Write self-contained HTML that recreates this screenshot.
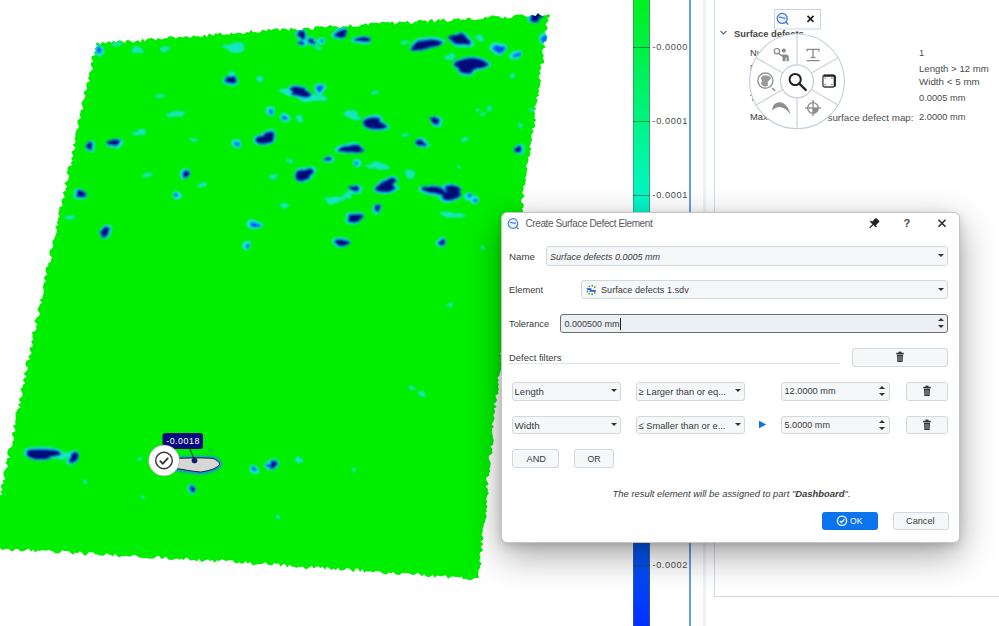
<!DOCTYPE html>
<html><head><meta charset="utf-8">
<style>
html,body{margin:0;padding:0;width:999px;height:626px;overflow:hidden;background:#fff;font-family:"Liberation Sans",sans-serif;}
.a{position:absolute;white-space:nowrap;}
.t{font-size:9.3px;color:#3a3a3a;line-height:1;}
.fld{position:absolute;box-sizing:border-box;border:1px solid #d0d8e2;border-radius:3px;background:#f5f7f9;}
.btn{position:absolute;box-sizing:border-box;border:1px solid #d0d8e2;border-radius:3px;background:#f5f7f9;}
.dd{position:absolute;width:0;height:0;border-left:3px solid transparent;border-right:3px solid transparent;border-top:3.5px solid #333;}
</style></head><body>
<svg class="a" style="left:0;top:0" width="999" height="626" viewBox="0 0 999 626">
<defs>
<clipPath id="sc"><path d="M95.9,43.3 L98.1,42.4 L100.5,44.3 L102.5,41.8 L104.9,43.4 L107.0,42.6 L109.2,41.2 L111.5,42.8 L113.6,40.8 L115.9,42.2 L118.0,40.5 L120.2,40.4 L122.6,41.6 L124.9,43.0 L126.9,40.0 L129.2,40.3 L131.5,41.7 L133.8,42.8 L135.9,41.1 L138.1,40.3 L140.5,42.4 L142.4,38.5 L144.9,41.6 L146.9,39.1 L149.1,38.4 L151.3,38.1 L153.6,38.7 L155.9,40.5 L158.0,37.8 L160.3,39.2 L162.5,39.3 L164.7,38.0 L166.9,38.6 L169.0,36.5 L171.2,36.3 L173.5,36.7 L175.8,38.4 L178.0,37.2 L180.2,36.6 L182.5,37.5 L184.6,36.8 L186.8,36.0 L189.2,37.8 L191.4,37.2 L193.4,35.2 L195.8,36.4 L198.0,36.0 L200.3,37.2 L202.5,36.5 L204.5,34.5 L207.0,37.1 L208.9,33.5 L211.2,34.5 L213.5,35.7 L215.6,33.1 L217.9,34.3 L220.0,32.3 L222.4,34.7 L224.6,34.9 L226.8,33.9 L229.1,35.0 L231.1,32.5 L233.5,33.9 L235.7,33.3 L237.9,33.1 L240.0,32.4 L242.4,33.8 L244.6,34.0 L246.7,32.0 L249.0,32.5 L251.0,30.0 L253.4,32.3 L255.6,31.9 L257.9,33.1 L260.1,32.3 L262.2,30.0 L264.4,30.3 L266.7,31.3 L268.7,28.6 L271.0,30.2 L273.2,28.9 L275.4,28.6 L277.5,28.2 L279.9,30.9 L282.0,28.2 L284.2,28.6 L286.4,29.0 L288.8,30.8 L290.8,27.5 L293.1,28.9 L295.3,29.1 L297.6,30.3 L299.8,29.9 L302.0,30.0 L304.1,27.5 L306.3,27.9 L308.5,27.6 L310.8,29.5 L313.1,29.7 L315.1,26.4 L317.3,26.3 L319.5,26.4 L321.7,26.3 L324.0,27.2 L326.2,27.5 L328.3,26.0 L330.5,24.9 L332.8,26.4 L335.0,26.1 L337.2,26.7 L339.5,28.1 L341.7,27.0 L343.8,26.1 L346.1,26.4 L348.3,26.5 L350.3,23.9 L352.8,27.1 L354.9,26.5 L357.2,26.8 L359.3,26.3 L361.5,24.6 L363.7,24.5 L365.8,23.2 L368.1,25.2 L370.2,22.8 L372.4,22.7 L374.6,23.1 L376.8,22.8 L379.1,23.4 L381.2,22.1 L383.4,21.7 L385.7,22.2 L387.9,21.9 L390.1,22.8 L392.3,21.3 L394.7,24.6 L396.8,23.4 L398.9,21.4 L401.1,21.7 L403.4,22.0 L405.6,21.9 L407.7,20.8 L410.1,23.6 L412.3,24.0 L414.4,21.8 L416.6,21.7 L418.7,20.0 L421.0,19.9 L423.2,20.8 L425.4,20.3 L427.7,22.5 L429.8,19.7 L432.0,19.0 L434.4,22.5 L436.5,20.7 L438.6,19.1 L440.9,20.5 L443.0,18.3 L445.3,20.2 L447.6,21.9 L449.8,21.3 L452.0,20.5 L454.1,18.6 L456.3,18.9 L458.5,18.0 L460.8,20.3 L463.0,19.2 L465.2,20.0 L467.3,18.1 L469.5,17.6 L471.9,19.8 L474.1,20.3 L476.3,19.7 L478.5,19.4 L480.7,19.3 L482.9,18.9 L485.0,16.7 L487.2,17.7 L489.4,16.9 L491.5,15.5 L493.7,15.4 L496.0,16.2 L498.2,16.0 L500.5,17.6 L502.8,18.5 L504.9,16.4 L507.2,18.2 L509.4,18.3 L511.6,18.0 L513.7,15.5 L515.8,14.8 L518.1,14.7 L520.2,14.5 L522.5,14.4 L524.8,15.9 L527.0,16.9 L529.2,16.5 L531.3,15.0 L533.6,15.5 L535.8,16.0 L537.9,13.0 L540.2,15.2 L542.5,16.0 L544.7,15.4 L546.9,15.1 L549.1,14.0 L550.0,16.4 L547.2,18.3 L548.7,20.7 L546.6,22.7 L545.6,24.8 L547.6,27.3 L547.2,29.5 L544.8,31.4 L545.3,33.7 L547.2,36.2 L547.1,38.5 L546.7,40.7 L543.4,42.4 L543.5,44.7 L545.8,47.3 L542.8,49.1 L541.9,51.2 L542.8,53.6 L543.7,56.0 L542.7,58.1 L544.0,60.5 L544.2,62.8 L540.1,64.5 L541.0,66.8 L541.2,69.1 L539.3,71.1 L541.0,73.6 L538.9,75.5 L538.8,77.8 L540.9,80.3 L540.4,82.5 L540.0,84.7 L539.9,86.9 L538.2,88.9 L539.2,91.3 L538.2,93.4 L539.1,95.8 L535.7,97.6 L537.6,100.1 L536.9,102.2 L536.0,104.4 L534.5,106.4 L536.1,108.9 L533.8,110.9 L535.1,113.3 L534.7,115.5 L534.4,117.8 L536.1,120.3 L534.1,122.3 L534.8,124.6 L535.2,126.9 L531.8,128.7 L533.9,131.3 L532.4,133.3 L531.1,135.4 L531.5,137.7 L532.1,140.1 L531.0,142.2 L530.6,144.4 L529.3,146.5 L531.7,149.1 L529.6,151.1 L530.5,153.5 L530.1,155.7 L527.8,157.6 L528.6,160.0 L528.0,162.2 L526.9,164.3 L526.0,166.4 L527.6,168.9 L526.6,171.0 L526.7,173.3 L526.4,175.5 L525.3,177.7 L526.0,180.0 L525.4,182.2 L525.3,184.5 L523.1,186.4 L523.8,188.8 L522.8,190.9 L522.2,193.1 L524.6,195.7 L523.1,197.7 L521.2,199.8 L521.3,202.0 L523.8,204.6 L523.6,206.8 L522.0,208.8 L523.2,211.2 L522.2,213.3 L522.6,215.6 L519.9,217.5 L519.1,219.6 L518.4,221.7 L521.0,224.3 L518.5,226.2 L518.4,228.4 L520.1,230.9 L516.9,232.7 L516.3,234.9 L518.9,237.5 L515.7,239.3 L517.6,241.8 L517.0,243.9 L514.7,245.8 L515.0,248.1 L517.3,250.7 L516.0,252.7 L515.3,254.9 L515.7,257.2 L516.0,259.4 L515.2,261.6 L513.3,263.5 L515.8,266.1 L513.3,268.0 L513.5,270.3 L514.8,272.7 L513.3,274.7 L511.8,276.8 L512.0,279.0 L513.4,281.5 L509.5,283.1 L510.0,285.5 L508.9,287.5 L512.1,290.2 L511.1,292.3 L511.7,294.6 L508.5,296.4 L510.2,298.9 L510.4,301.2 L509.0,303.2 L506.7,305.1 L506.8,307.4 L508.7,309.9 L508.8,312.1 L505.5,313.9 L506.6,316.3 L505.7,318.4 L507.9,321.0 L507.7,323.2 L504.9,325.0 L505.6,327.4 L506.7,329.7 L503.0,331.5 L503.9,333.8 L502.9,335.9 L505.4,338.5 L502.1,340.3 L504.9,342.9 L501.4,344.7 L502.8,347.1 L502.9,349.4 L501.8,351.4 L500.0,353.4 L502.3,356.0 L502.5,358.3 L500.6,360.2 L501.5,362.6 L501.7,364.8 L501.2,367.0 L501.3,369.3 L500.4,371.4 L499.7,373.5 L499.4,375.7 L497.3,377.7 L498.8,380.1 L497.8,382.2 L498.8,384.6 L497.9,386.7 L499.0,389.1 L497.9,391.2 L498.6,393.5 L495.5,395.5 L496.0,397.8 L497.2,400.1 L495.9,402.2 L493.8,404.3 L496.9,406.8 L493.8,408.8 L495.2,411.1 L494.7,413.3 L493.1,415.4 L494.6,417.8 L494.0,420.0 L493.0,422.1 L491.6,424.3 L494.0,426.7 L491.8,428.8 L492.1,431.0 L492.1,433.3 L492.8,435.6 L492.8,437.8 L493.8,440.2 L493.3,442.4 L493.3,444.6 L490.4,446.6 L492.1,449.0 L492.2,451.2 L492.3,453.5 L489.1,455.4 L488.7,457.6 L489.3,459.9 L490.6,462.3 L490.6,464.5 L490.2,466.7 L489.3,468.9 L490.3,471.2 L488.9,473.4 L489.4,475.6 L486.4,477.6 L486.1,479.8 L487.6,482.2 L488.6,484.5 L485.5,486.4 L488.0,488.9 L487.6,491.1 L488.8,493.4 L487.1,495.4 L486.5,497.6 L486.2,499.8 L487.2,502.1 L485.8,504.2 L487.6,506.6 L486.3,508.7 L486.8,510.9 L485.4,513.0 L486.6,515.4 L486.5,517.6 L485.2,519.7 L485.3,521.9 L483.7,524.0 L483.7,526.2 L482.6,528.3 L482.8,530.5 L482.3,532.7 L481.5,534.9 L483.2,537.2 L483.3,539.5 L480.5,541.4 L483.6,543.9 L481.1,545.9 L481.2,548.1 L483.4,550.6 L480.1,552.5 L479.6,554.7 L480.5,557.0 L479.9,559.1 L479.4,561.3 L481.8,563.7 L480.1,565.8 L480.0,568.0 L478.5,570.1 L478.4,572.3 L478.1,574.5 L478.9,576.8 L479.1,577.4 L476.8,578.1 L474.7,577.9 L472.3,579.6 L470.1,580.3 L467.9,579.7 L465.7,578.6 L463.5,579.5 L461.5,576.4 L459.2,577.4 L457.0,577.0 L454.8,576.8 L452.6,576.4 L450.4,577.0 L448.0,578.8 L446.1,575.5 L443.8,575.5 L441.6,576.4 L439.4,576.1 L437.2,575.4 L434.8,577.7 L432.8,574.8 L430.5,576.6 L428.2,577.2 L426.1,576.2 L424.0,574.2 L421.7,576.2 L419.6,573.9 L417.5,572.8 L415.1,574.6 L412.9,574.9 L410.7,574.3 L408.6,573.3 L406.4,572.9 L404.2,573.3 L402.0,573.0 L399.6,575.1 L397.4,574.7 L395.3,574.1 L393.2,572.0 L390.9,573.6 L388.7,572.4 L386.4,574.5 L384.2,574.1 L382.1,573.2 L380.0,571.4 L377.8,571.2 L375.6,571.1 L373.2,572.4 L371.1,571.4 L368.9,571.4 L366.7,571.3 L364.4,572.5 L362.4,569.3 L360.0,571.9 L358.0,568.6 L355.8,568.6 L353.4,572.2 L351.3,570.2 L349.2,568.6 L347.0,567.9 L344.7,569.8 L342.4,570.4 L340.2,570.5 L338.2,567.4 L335.8,570.2 L333.7,568.5 L331.4,570.1 L329.3,568.4 L327.2,566.6 L324.8,569.7 L322.8,566.8 L320.5,567.9 L318.4,566.2 L316.1,566.8 L313.8,568.5 L311.8,565.7 L309.4,567.2 L307.1,568.9 L304.9,568.8 L302.8,566.7 L300.6,566.7 L298.4,567.2 L296.1,567.7 L294.0,566.7 L291.8,566.7 L289.7,564.4 L287.3,567.6 L285.3,564.5 L283.1,564.0 L280.7,566.7 L278.7,563.3 L276.5,564.0 L274.3,563.1 L272.0,565.4 L269.8,564.9 L267.6,564.7 L265.6,562.1 L263.2,563.6 L261.0,564.3 L258.8,563.9 L256.5,564.4 L254.3,565.1 L252.1,564.7 L250.1,561.7 L247.7,563.7 L245.7,561.0 L243.3,563.6 L241.1,563.4 L238.9,562.3 L236.7,563.5 L234.5,562.6 L232.4,560.2 L230.2,560.3 L228.0,560.5 L225.7,561.1 L223.6,559.8 L221.3,559.6 L219.0,561.0 L216.9,560.2 L214.5,562.8 L212.5,559.9 L210.2,560.9 L208.0,559.6 L205.8,559.9 L203.5,561.2 L201.2,562.0 L199.2,558.4 L196.8,561.4 L194.7,559.9 L192.5,560.3 L190.2,560.4 L188.1,558.5 L186.0,557.4 L183.6,560.1 L181.5,558.4 L179.2,559.7 L177.0,558.6 L174.8,559.1 L172.5,559.9 L170.3,559.8 L168.1,559.5 L166.0,556.5 L163.7,558.1 L161.5,559.0 L159.4,556.2 L157.2,555.7 L154.9,557.7 L152.6,558.8 L150.4,558.5 L148.2,558.8 L146.0,557.7 L143.7,558.5 L141.6,557.8 L139.4,557.6 L137.2,556.2 L135.1,554.8 L132.8,555.3 L130.5,556.5 L128.3,556.4 L126.1,555.8 L123.9,556.2 L121.7,556.3 L119.4,557.2 L117.2,556.3 L115.2,553.4 L112.8,556.6 L110.7,555.0 L108.5,554.3 L106.3,553.3 L104.0,555.7 L101.8,555.4 L99.5,555.4 L97.4,554.6 L95.2,554.3 L93.1,552.2 L90.8,552.5 L88.6,552.2 L86.2,555.5 L84.0,555.3 L81.9,552.5 L79.8,551.6 L77.5,553.2 L75.3,552.6 L72.9,554.8 L70.8,553.1 L68.7,550.9 L66.5,551.1 L64.3,550.9 L62.1,550.3 L59.7,553.1 L57.5,553.5 L55.3,553.2 L53.1,551.6 L51.0,550.8 L48.8,549.7 L46.6,550.4 L44.3,550.6 L42.1,550.0 L39.9,551.1 L37.7,550.6 L35.3,552.5 L33.3,549.4 L31.0,551.5 L28.9,548.6 L26.6,549.6 L24.3,550.8 L22.1,551.4 L19.9,550.8 L17.8,549.1 L15.6,548.7 L13.2,550.9 L11.0,551.0 L8.9,549.0 L6.7,548.7 L4.5,549.3 L2.2,549.9 L0.1,548.2 L-2.3,550.5 L-4.4,549.2 L-6.6,548.4 L-8.7,546.3 L-10.4,548.1 L-9.0,546.1 L-10.2,543.6 L-10.7,541.3 L-10.2,539.1 L-6.9,537.5 L-7.5,535.2 L-8.6,532.7 L-9.2,530.2 L-6.9,528.5 L-5.7,526.4 L-6.3,524.1 L-6.5,521.8 L-4.4,519.9 L-2.9,518.0 L-5.2,515.2 L-5.5,512.9 L-3.9,511.0 L-3.1,508.9 L-1.6,506.9 L-3.0,504.4 L-0.2,502.7 L0.0,500.5 L-0.5,498.1 L-1.2,495.7 L2.3,494.2 L0.2,491.4 L2.6,489.7 L0.8,487.0 L1.2,484.9 L3.7,483.1 L2.4,480.6 L5.4,478.9 L4.1,476.4 L3.3,474.0 L3.9,471.8 L5.1,469.8 L6.6,467.9 L8.1,465.9 L5.5,463.1 L6.9,461.1 L6.6,458.8 L10.1,457.3 L7.3,454.4 L7.4,452.2 L7.9,450.0 L9.6,448.1 L12.1,446.4 L12.5,444.2 L12.3,441.9 L13.8,439.9 L14.0,437.7 L12.1,435.0 L12.0,432.8 L15.4,431.2 L15.1,428.9 L12.8,426.1 L15.7,424.5 L15.1,422.1 L15.5,419.9 L15.8,417.7 L15.6,415.4 L15.4,413.0 L16.9,411.1 L17.7,409.0 L20.5,407.3 L17.7,404.4 L21.4,402.9 L18.9,400.1 L19.9,398.0 L22.2,396.2 L22.6,394.1 L21.6,391.6 L20.5,389.1 L22.6,387.2 L22.7,385.0 L25.3,383.2 L22.9,380.4 L24.0,378.4 L26.5,376.6 L23.6,373.8 L25.5,371.9 L27.5,370.0 L27.8,367.8 L25.4,365.0 L25.9,362.8 L26.4,360.7 L30.2,359.2 L28.1,356.5 L30.4,354.7 L31.5,352.6 L29.7,350.0 L29.9,347.8 L33.1,346.1 L32.2,343.7 L31.2,341.2 L33.5,339.4 L32.3,336.9 L32.6,334.7 L32.0,332.3 L35.4,330.7 L36.5,328.6 L35.8,326.2 L37.5,324.3 L34.3,321.4 L35.6,319.3 L37.0,317.3 L39.3,315.6 L39.8,313.4 L38.0,310.8 L38.0,308.5 L39.1,306.5 L39.8,304.4 L42.0,302.6 L39.5,299.8 L42.4,298.2 L42.6,296.0 L43.4,293.9 L43.7,291.7 L43.5,289.4 L42.9,287.0 L43.3,284.9 L44.0,282.8 L46.1,281.0 L43.8,278.2 L44.7,276.2 L47.4,274.5 L45.8,271.9 L45.6,269.6 L45.9,267.4 L48.4,265.7 L48.0,263.4 L51.0,261.8 L51.1,259.5 L52.0,257.5 L49.6,254.7 L49.4,252.4 L49.9,250.3 L51.9,248.5 L53.2,246.5 L52.7,244.1 L52.3,241.8 L53.5,239.8 L54.7,237.8 L55.4,235.7 L56.2,233.6 L57.0,231.5 L56.8,229.2 L55.1,226.6 L58.4,225.1 L56.7,222.5 L58.2,220.5 L57.9,218.2 L59.8,216.4 L58.2,213.8 L58.9,211.7 L59.3,209.5 L59.4,207.3 L62.7,205.7 L62.0,203.3 L61.5,201.0 L62.2,198.9 L65.0,197.2 L63.6,194.7 L63.0,192.3 L65.7,190.6 L65.5,188.3 L67.3,186.5 L64.3,183.6 L66.2,181.7 L68.1,179.9 L68.6,177.7 L69.4,175.7 L66.4,172.8 L67.9,170.8 L67.6,168.5 L68.4,166.4 L71.9,164.9 L70.9,162.5 L72.7,160.6 L71.0,158.0 L73.4,156.2 L72.2,153.7 L71.9,151.4 L74.4,149.7 L75.5,147.7 L72.7,144.8 L75.1,143.1 L75.6,141.0 L74.5,138.5 L75.6,136.5 L75.2,134.1 L75.9,132.0 L76.5,129.9 L78.3,128.1 L79.0,125.9 L77.7,123.4 L77.4,121.1 L79.1,119.2 L81.0,117.4 L79.5,114.8 L80.5,112.8 L80.5,110.5 L83.3,108.9 L82.8,106.5 L81.4,103.9 L82.0,101.8 L83.6,99.9 L84.7,97.9 L85.5,95.8 L83.8,93.2 L84.5,91.1 L87.1,89.4 L86.4,87.0 L86.4,84.7 L86.9,82.6 L89.9,81.0 L87.9,78.3 L89.3,76.4 L89.0,74.0 L89.7,71.9 L91.9,70.2 L92.9,68.1 L90.9,65.4 L90.7,63.1 L93.2,61.4 L91.6,58.8 L91.3,56.5 L95.3,55.1 L93.9,52.6 L95.9,50.7 L94.7,48.2 L97.0,46.5Z"/></clipPath>
<filter id="bl" x="-20%" y="-20%" width="140%" height="140%"><feGaussianBlur stdDeviation="0.9"/></filter>
</defs>
<path d="M95.9,43.3 L98.1,42.4 L100.5,44.3 L102.5,41.8 L104.9,43.4 L107.0,42.6 L109.2,41.2 L111.5,42.8 L113.6,40.8 L115.9,42.2 L118.0,40.5 L120.2,40.4 L122.6,41.6 L124.9,43.0 L126.9,40.0 L129.2,40.3 L131.5,41.7 L133.8,42.8 L135.9,41.1 L138.1,40.3 L140.5,42.4 L142.4,38.5 L144.9,41.6 L146.9,39.1 L149.1,38.4 L151.3,38.1 L153.6,38.7 L155.9,40.5 L158.0,37.8 L160.3,39.2 L162.5,39.3 L164.7,38.0 L166.9,38.6 L169.0,36.5 L171.2,36.3 L173.5,36.7 L175.8,38.4 L178.0,37.2 L180.2,36.6 L182.5,37.5 L184.6,36.8 L186.8,36.0 L189.2,37.8 L191.4,37.2 L193.4,35.2 L195.8,36.4 L198.0,36.0 L200.3,37.2 L202.5,36.5 L204.5,34.5 L207.0,37.1 L208.9,33.5 L211.2,34.5 L213.5,35.7 L215.6,33.1 L217.9,34.3 L220.0,32.3 L222.4,34.7 L224.6,34.9 L226.8,33.9 L229.1,35.0 L231.1,32.5 L233.5,33.9 L235.7,33.3 L237.9,33.1 L240.0,32.4 L242.4,33.8 L244.6,34.0 L246.7,32.0 L249.0,32.5 L251.0,30.0 L253.4,32.3 L255.6,31.9 L257.9,33.1 L260.1,32.3 L262.2,30.0 L264.4,30.3 L266.7,31.3 L268.7,28.6 L271.0,30.2 L273.2,28.9 L275.4,28.6 L277.5,28.2 L279.9,30.9 L282.0,28.2 L284.2,28.6 L286.4,29.0 L288.8,30.8 L290.8,27.5 L293.1,28.9 L295.3,29.1 L297.6,30.3 L299.8,29.9 L302.0,30.0 L304.1,27.5 L306.3,27.9 L308.5,27.6 L310.8,29.5 L313.1,29.7 L315.1,26.4 L317.3,26.3 L319.5,26.4 L321.7,26.3 L324.0,27.2 L326.2,27.5 L328.3,26.0 L330.5,24.9 L332.8,26.4 L335.0,26.1 L337.2,26.7 L339.5,28.1 L341.7,27.0 L343.8,26.1 L346.1,26.4 L348.3,26.5 L350.3,23.9 L352.8,27.1 L354.9,26.5 L357.2,26.8 L359.3,26.3 L361.5,24.6 L363.7,24.5 L365.8,23.2 L368.1,25.2 L370.2,22.8 L372.4,22.7 L374.6,23.1 L376.8,22.8 L379.1,23.4 L381.2,22.1 L383.4,21.7 L385.7,22.2 L387.9,21.9 L390.1,22.8 L392.3,21.3 L394.7,24.6 L396.8,23.4 L398.9,21.4 L401.1,21.7 L403.4,22.0 L405.6,21.9 L407.7,20.8 L410.1,23.6 L412.3,24.0 L414.4,21.8 L416.6,21.7 L418.7,20.0 L421.0,19.9 L423.2,20.8 L425.4,20.3 L427.7,22.5 L429.8,19.7 L432.0,19.0 L434.4,22.5 L436.5,20.7 L438.6,19.1 L440.9,20.5 L443.0,18.3 L445.3,20.2 L447.6,21.9 L449.8,21.3 L452.0,20.5 L454.1,18.6 L456.3,18.9 L458.5,18.0 L460.8,20.3 L463.0,19.2 L465.2,20.0 L467.3,18.1 L469.5,17.6 L471.9,19.8 L474.1,20.3 L476.3,19.7 L478.5,19.4 L480.7,19.3 L482.9,18.9 L485.0,16.7 L487.2,17.7 L489.4,16.9 L491.5,15.5 L493.7,15.4 L496.0,16.2 L498.2,16.0 L500.5,17.6 L502.8,18.5 L504.9,16.4 L507.2,18.2 L509.4,18.3 L511.6,18.0 L513.7,15.5 L515.8,14.8 L518.1,14.7 L520.2,14.5 L522.5,14.4 L524.8,15.9 L527.0,16.9 L529.2,16.5 L531.3,15.0 L533.6,15.5 L535.8,16.0 L537.9,13.0 L540.2,15.2 L542.5,16.0 L544.7,15.4 L546.9,15.1 L549.1,14.0 L550.0,16.4 L547.2,18.3 L548.7,20.7 L546.6,22.7 L545.6,24.8 L547.6,27.3 L547.2,29.5 L544.8,31.4 L545.3,33.7 L547.2,36.2 L547.1,38.5 L546.7,40.7 L543.4,42.4 L543.5,44.7 L545.8,47.3 L542.8,49.1 L541.9,51.2 L542.8,53.6 L543.7,56.0 L542.7,58.1 L544.0,60.5 L544.2,62.8 L540.1,64.5 L541.0,66.8 L541.2,69.1 L539.3,71.1 L541.0,73.6 L538.9,75.5 L538.8,77.8 L540.9,80.3 L540.4,82.5 L540.0,84.7 L539.9,86.9 L538.2,88.9 L539.2,91.3 L538.2,93.4 L539.1,95.8 L535.7,97.6 L537.6,100.1 L536.9,102.2 L536.0,104.4 L534.5,106.4 L536.1,108.9 L533.8,110.9 L535.1,113.3 L534.7,115.5 L534.4,117.8 L536.1,120.3 L534.1,122.3 L534.8,124.6 L535.2,126.9 L531.8,128.7 L533.9,131.3 L532.4,133.3 L531.1,135.4 L531.5,137.7 L532.1,140.1 L531.0,142.2 L530.6,144.4 L529.3,146.5 L531.7,149.1 L529.6,151.1 L530.5,153.5 L530.1,155.7 L527.8,157.6 L528.6,160.0 L528.0,162.2 L526.9,164.3 L526.0,166.4 L527.6,168.9 L526.6,171.0 L526.7,173.3 L526.4,175.5 L525.3,177.7 L526.0,180.0 L525.4,182.2 L525.3,184.5 L523.1,186.4 L523.8,188.8 L522.8,190.9 L522.2,193.1 L524.6,195.7 L523.1,197.7 L521.2,199.8 L521.3,202.0 L523.8,204.6 L523.6,206.8 L522.0,208.8 L523.2,211.2 L522.2,213.3 L522.6,215.6 L519.9,217.5 L519.1,219.6 L518.4,221.7 L521.0,224.3 L518.5,226.2 L518.4,228.4 L520.1,230.9 L516.9,232.7 L516.3,234.9 L518.9,237.5 L515.7,239.3 L517.6,241.8 L517.0,243.9 L514.7,245.8 L515.0,248.1 L517.3,250.7 L516.0,252.7 L515.3,254.9 L515.7,257.2 L516.0,259.4 L515.2,261.6 L513.3,263.5 L515.8,266.1 L513.3,268.0 L513.5,270.3 L514.8,272.7 L513.3,274.7 L511.8,276.8 L512.0,279.0 L513.4,281.5 L509.5,283.1 L510.0,285.5 L508.9,287.5 L512.1,290.2 L511.1,292.3 L511.7,294.6 L508.5,296.4 L510.2,298.9 L510.4,301.2 L509.0,303.2 L506.7,305.1 L506.8,307.4 L508.7,309.9 L508.8,312.1 L505.5,313.9 L506.6,316.3 L505.7,318.4 L507.9,321.0 L507.7,323.2 L504.9,325.0 L505.6,327.4 L506.7,329.7 L503.0,331.5 L503.9,333.8 L502.9,335.9 L505.4,338.5 L502.1,340.3 L504.9,342.9 L501.4,344.7 L502.8,347.1 L502.9,349.4 L501.8,351.4 L500.0,353.4 L502.3,356.0 L502.5,358.3 L500.6,360.2 L501.5,362.6 L501.7,364.8 L501.2,367.0 L501.3,369.3 L500.4,371.4 L499.7,373.5 L499.4,375.7 L497.3,377.7 L498.8,380.1 L497.8,382.2 L498.8,384.6 L497.9,386.7 L499.0,389.1 L497.9,391.2 L498.6,393.5 L495.5,395.5 L496.0,397.8 L497.2,400.1 L495.9,402.2 L493.8,404.3 L496.9,406.8 L493.8,408.8 L495.2,411.1 L494.7,413.3 L493.1,415.4 L494.6,417.8 L494.0,420.0 L493.0,422.1 L491.6,424.3 L494.0,426.7 L491.8,428.8 L492.1,431.0 L492.1,433.3 L492.8,435.6 L492.8,437.8 L493.8,440.2 L493.3,442.4 L493.3,444.6 L490.4,446.6 L492.1,449.0 L492.2,451.2 L492.3,453.5 L489.1,455.4 L488.7,457.6 L489.3,459.9 L490.6,462.3 L490.6,464.5 L490.2,466.7 L489.3,468.9 L490.3,471.2 L488.9,473.4 L489.4,475.6 L486.4,477.6 L486.1,479.8 L487.6,482.2 L488.6,484.5 L485.5,486.4 L488.0,488.9 L487.6,491.1 L488.8,493.4 L487.1,495.4 L486.5,497.6 L486.2,499.8 L487.2,502.1 L485.8,504.2 L487.6,506.6 L486.3,508.7 L486.8,510.9 L485.4,513.0 L486.6,515.4 L486.5,517.6 L485.2,519.7 L485.3,521.9 L483.7,524.0 L483.7,526.2 L482.6,528.3 L482.8,530.5 L482.3,532.7 L481.5,534.9 L483.2,537.2 L483.3,539.5 L480.5,541.4 L483.6,543.9 L481.1,545.9 L481.2,548.1 L483.4,550.6 L480.1,552.5 L479.6,554.7 L480.5,557.0 L479.9,559.1 L479.4,561.3 L481.8,563.7 L480.1,565.8 L480.0,568.0 L478.5,570.1 L478.4,572.3 L478.1,574.5 L478.9,576.8 L479.1,577.4 L476.8,578.1 L474.7,577.9 L472.3,579.6 L470.1,580.3 L467.9,579.7 L465.7,578.6 L463.5,579.5 L461.5,576.4 L459.2,577.4 L457.0,577.0 L454.8,576.8 L452.6,576.4 L450.4,577.0 L448.0,578.8 L446.1,575.5 L443.8,575.5 L441.6,576.4 L439.4,576.1 L437.2,575.4 L434.8,577.7 L432.8,574.8 L430.5,576.6 L428.2,577.2 L426.1,576.2 L424.0,574.2 L421.7,576.2 L419.6,573.9 L417.5,572.8 L415.1,574.6 L412.9,574.9 L410.7,574.3 L408.6,573.3 L406.4,572.9 L404.2,573.3 L402.0,573.0 L399.6,575.1 L397.4,574.7 L395.3,574.1 L393.2,572.0 L390.9,573.6 L388.7,572.4 L386.4,574.5 L384.2,574.1 L382.1,573.2 L380.0,571.4 L377.8,571.2 L375.6,571.1 L373.2,572.4 L371.1,571.4 L368.9,571.4 L366.7,571.3 L364.4,572.5 L362.4,569.3 L360.0,571.9 L358.0,568.6 L355.8,568.6 L353.4,572.2 L351.3,570.2 L349.2,568.6 L347.0,567.9 L344.7,569.8 L342.4,570.4 L340.2,570.5 L338.2,567.4 L335.8,570.2 L333.7,568.5 L331.4,570.1 L329.3,568.4 L327.2,566.6 L324.8,569.7 L322.8,566.8 L320.5,567.9 L318.4,566.2 L316.1,566.8 L313.8,568.5 L311.8,565.7 L309.4,567.2 L307.1,568.9 L304.9,568.8 L302.8,566.7 L300.6,566.7 L298.4,567.2 L296.1,567.7 L294.0,566.7 L291.8,566.7 L289.7,564.4 L287.3,567.6 L285.3,564.5 L283.1,564.0 L280.7,566.7 L278.7,563.3 L276.5,564.0 L274.3,563.1 L272.0,565.4 L269.8,564.9 L267.6,564.7 L265.6,562.1 L263.2,563.6 L261.0,564.3 L258.8,563.9 L256.5,564.4 L254.3,565.1 L252.1,564.7 L250.1,561.7 L247.7,563.7 L245.7,561.0 L243.3,563.6 L241.1,563.4 L238.9,562.3 L236.7,563.5 L234.5,562.6 L232.4,560.2 L230.2,560.3 L228.0,560.5 L225.7,561.1 L223.6,559.8 L221.3,559.6 L219.0,561.0 L216.9,560.2 L214.5,562.8 L212.5,559.9 L210.2,560.9 L208.0,559.6 L205.8,559.9 L203.5,561.2 L201.2,562.0 L199.2,558.4 L196.8,561.4 L194.7,559.9 L192.5,560.3 L190.2,560.4 L188.1,558.5 L186.0,557.4 L183.6,560.1 L181.5,558.4 L179.2,559.7 L177.0,558.6 L174.8,559.1 L172.5,559.9 L170.3,559.8 L168.1,559.5 L166.0,556.5 L163.7,558.1 L161.5,559.0 L159.4,556.2 L157.2,555.7 L154.9,557.7 L152.6,558.8 L150.4,558.5 L148.2,558.8 L146.0,557.7 L143.7,558.5 L141.6,557.8 L139.4,557.6 L137.2,556.2 L135.1,554.8 L132.8,555.3 L130.5,556.5 L128.3,556.4 L126.1,555.8 L123.9,556.2 L121.7,556.3 L119.4,557.2 L117.2,556.3 L115.2,553.4 L112.8,556.6 L110.7,555.0 L108.5,554.3 L106.3,553.3 L104.0,555.7 L101.8,555.4 L99.5,555.4 L97.4,554.6 L95.2,554.3 L93.1,552.2 L90.8,552.5 L88.6,552.2 L86.2,555.5 L84.0,555.3 L81.9,552.5 L79.8,551.6 L77.5,553.2 L75.3,552.6 L72.9,554.8 L70.8,553.1 L68.7,550.9 L66.5,551.1 L64.3,550.9 L62.1,550.3 L59.7,553.1 L57.5,553.5 L55.3,553.2 L53.1,551.6 L51.0,550.8 L48.8,549.7 L46.6,550.4 L44.3,550.6 L42.1,550.0 L39.9,551.1 L37.7,550.6 L35.3,552.5 L33.3,549.4 L31.0,551.5 L28.9,548.6 L26.6,549.6 L24.3,550.8 L22.1,551.4 L19.9,550.8 L17.8,549.1 L15.6,548.7 L13.2,550.9 L11.0,551.0 L8.9,549.0 L6.7,548.7 L4.5,549.3 L2.2,549.9 L0.1,548.2 L-2.3,550.5 L-4.4,549.2 L-6.6,548.4 L-8.7,546.3 L-10.4,548.1 L-9.0,546.1 L-10.2,543.6 L-10.7,541.3 L-10.2,539.1 L-6.9,537.5 L-7.5,535.2 L-8.6,532.7 L-9.2,530.2 L-6.9,528.5 L-5.7,526.4 L-6.3,524.1 L-6.5,521.8 L-4.4,519.9 L-2.9,518.0 L-5.2,515.2 L-5.5,512.9 L-3.9,511.0 L-3.1,508.9 L-1.6,506.9 L-3.0,504.4 L-0.2,502.7 L0.0,500.5 L-0.5,498.1 L-1.2,495.7 L2.3,494.2 L0.2,491.4 L2.6,489.7 L0.8,487.0 L1.2,484.9 L3.7,483.1 L2.4,480.6 L5.4,478.9 L4.1,476.4 L3.3,474.0 L3.9,471.8 L5.1,469.8 L6.6,467.9 L8.1,465.9 L5.5,463.1 L6.9,461.1 L6.6,458.8 L10.1,457.3 L7.3,454.4 L7.4,452.2 L7.9,450.0 L9.6,448.1 L12.1,446.4 L12.5,444.2 L12.3,441.9 L13.8,439.9 L14.0,437.7 L12.1,435.0 L12.0,432.8 L15.4,431.2 L15.1,428.9 L12.8,426.1 L15.7,424.5 L15.1,422.1 L15.5,419.9 L15.8,417.7 L15.6,415.4 L15.4,413.0 L16.9,411.1 L17.7,409.0 L20.5,407.3 L17.7,404.4 L21.4,402.9 L18.9,400.1 L19.9,398.0 L22.2,396.2 L22.6,394.1 L21.6,391.6 L20.5,389.1 L22.6,387.2 L22.7,385.0 L25.3,383.2 L22.9,380.4 L24.0,378.4 L26.5,376.6 L23.6,373.8 L25.5,371.9 L27.5,370.0 L27.8,367.8 L25.4,365.0 L25.9,362.8 L26.4,360.7 L30.2,359.2 L28.1,356.5 L30.4,354.7 L31.5,352.6 L29.7,350.0 L29.9,347.8 L33.1,346.1 L32.2,343.7 L31.2,341.2 L33.5,339.4 L32.3,336.9 L32.6,334.7 L32.0,332.3 L35.4,330.7 L36.5,328.6 L35.8,326.2 L37.5,324.3 L34.3,321.4 L35.6,319.3 L37.0,317.3 L39.3,315.6 L39.8,313.4 L38.0,310.8 L38.0,308.5 L39.1,306.5 L39.8,304.4 L42.0,302.6 L39.5,299.8 L42.4,298.2 L42.6,296.0 L43.4,293.9 L43.7,291.7 L43.5,289.4 L42.9,287.0 L43.3,284.9 L44.0,282.8 L46.1,281.0 L43.8,278.2 L44.7,276.2 L47.4,274.5 L45.8,271.9 L45.6,269.6 L45.9,267.4 L48.4,265.7 L48.0,263.4 L51.0,261.8 L51.1,259.5 L52.0,257.5 L49.6,254.7 L49.4,252.4 L49.9,250.3 L51.9,248.5 L53.2,246.5 L52.7,244.1 L52.3,241.8 L53.5,239.8 L54.7,237.8 L55.4,235.7 L56.2,233.6 L57.0,231.5 L56.8,229.2 L55.1,226.6 L58.4,225.1 L56.7,222.5 L58.2,220.5 L57.9,218.2 L59.8,216.4 L58.2,213.8 L58.9,211.7 L59.3,209.5 L59.4,207.3 L62.7,205.7 L62.0,203.3 L61.5,201.0 L62.2,198.9 L65.0,197.2 L63.6,194.7 L63.0,192.3 L65.7,190.6 L65.5,188.3 L67.3,186.5 L64.3,183.6 L66.2,181.7 L68.1,179.9 L68.6,177.7 L69.4,175.7 L66.4,172.8 L67.9,170.8 L67.6,168.5 L68.4,166.4 L71.9,164.9 L70.9,162.5 L72.7,160.6 L71.0,158.0 L73.4,156.2 L72.2,153.7 L71.9,151.4 L74.4,149.7 L75.5,147.7 L72.7,144.8 L75.1,143.1 L75.6,141.0 L74.5,138.5 L75.6,136.5 L75.2,134.1 L75.9,132.0 L76.5,129.9 L78.3,128.1 L79.0,125.9 L77.7,123.4 L77.4,121.1 L79.1,119.2 L81.0,117.4 L79.5,114.8 L80.5,112.8 L80.5,110.5 L83.3,108.9 L82.8,106.5 L81.4,103.9 L82.0,101.8 L83.6,99.9 L84.7,97.9 L85.5,95.8 L83.8,93.2 L84.5,91.1 L87.1,89.4 L86.4,87.0 L86.4,84.7 L86.9,82.6 L89.9,81.0 L87.9,78.3 L89.3,76.4 L89.0,74.0 L89.7,71.9 L91.9,70.2 L92.9,68.1 L90.9,65.4 L90.7,63.1 L93.2,61.4 L91.6,58.8 L91.3,56.5 L95.3,55.1 L93.9,52.6 L95.9,50.7 L94.7,48.2 L97.0,46.5Z" fill="#00ee00"/>
<g clip-path="url(#sc)"><g filter="url(#bl)">
<g fill="#14e6e6" fill-opacity="0.85"><path d="M244.9,47.5C245.0,48.1 245.0,48.6 244.5,49.3C244.1,50.0 243.9,51.1 242.3,51.7C240.7,52.3 237.3,53.2 235.0,53.1C232.7,53.0 229.9,51.8 228.7,51.1C227.5,50.4 228.8,49.5 227.7,48.9C226.7,48.3 223.4,48.1 222.6,47.5C221.8,46.9 221.7,45.7 222.9,45.2C224.2,44.7 227.9,45.0 229.9,44.6C231.9,44.1 232.8,42.6 235.0,42.3C237.2,42.0 241.5,42.3 242.9,42.9C244.4,43.5 243.2,45.1 243.5,45.9C243.8,46.6 244.7,46.9 244.9,47.5Z"/><path d="M142.3,50.0C142.8,50.5 144.8,51.6 144.5,52.0C144.3,52.5 141.9,52.7 140.7,52.8C139.5,52.9 138.6,52.7 137.5,52.7C136.4,52.8 134.9,53.3 133.8,53.2C132.8,53.0 131.5,52.3 131.4,51.8C131.2,51.2 132.6,50.5 132.9,50.0C133.2,49.5 133.1,49.3 133.2,48.8C133.3,48.2 132.7,46.9 133.4,46.5C134.2,46.1 136.3,46.3 137.5,46.4C138.7,46.5 140.1,46.8 140.8,47.2C141.5,47.6 141.6,48.3 141.8,48.8C142.1,49.2 141.9,49.5 142.3,50.0Z"/><path d="M171.4,49.0C171.0,49.4 168.5,49.5 167.7,49.8C167.0,50.0 167.2,50.1 166.8,50.5C166.3,51.0 165.8,52.3 165.0,52.5C164.2,52.7 162.8,52.0 162.0,51.6C161.2,51.2 160.6,50.8 160.3,50.4C159.9,49.9 160.1,49.4 160.1,49.0C160.2,48.6 160.3,48.1 160.7,47.8C161.1,47.4 162.0,47.2 162.7,47.0C163.4,46.8 164.1,46.7 165.0,46.6C165.9,46.5 167.2,46.2 168.1,46.3C168.9,46.5 169.7,47.0 170.2,47.5C170.8,47.9 171.8,48.6 171.4,49.0Z"/><path d="M122.4,44.0C122.0,44.4 120.9,44.5 120.3,44.8C119.8,45.0 119.8,45.4 119.3,45.6C118.7,45.8 118.0,45.8 117.0,45.9C116.0,46.1 114.4,46.5 113.5,46.4C112.7,46.3 111.9,45.6 111.8,45.2C111.6,44.8 112.5,44.4 112.6,44.0C112.7,43.6 112.3,43.2 112.6,43.0C113.0,42.7 114.0,42.6 114.7,42.4C115.5,42.3 116.1,42.1 117.0,42.0C117.9,42.0 118.8,41.9 119.8,42.0C120.8,42.1 122.5,42.3 122.9,42.6C123.3,43.0 122.8,43.6 122.4,44.0Z"/><path d="M183.6,114.0C183.2,114.6 184.1,115.2 183.5,115.6C182.8,116.0 181.1,116.4 179.8,116.5C178.6,116.6 177.4,116.0 176.0,116.1C174.6,116.2 172.9,117.1 171.2,117.1C169.6,117.1 167.0,116.6 166.2,116.1C165.4,115.6 165.7,114.5 166.5,114.0C167.3,113.5 170.2,113.4 171.1,112.9C172.1,112.5 171.3,111.8 172.2,111.5C173.0,111.2 174.7,111.0 176.0,111.0C177.3,110.9 178.6,111.1 180.2,111.3C181.8,111.4 185.1,111.4 185.7,111.9C186.2,112.4 183.9,113.4 183.6,114.0Z"/><path d="M145.2,132.5C145.1,133.1 146.0,133.7 145.6,134.1C145.2,134.5 143.8,134.8 142.8,135.0C141.9,135.1 141.0,135.1 140.0,135.2C139.0,135.2 138.2,135.3 136.9,135.2C135.6,135.1 133.0,135.2 132.2,134.7C131.5,134.3 131.7,133.0 132.5,132.5C133.3,132.0 136.4,132.1 137.2,131.7C138.0,131.3 136.9,130.7 137.4,130.2C137.8,129.8 138.9,129.3 140.0,129.1C141.1,128.9 143.0,128.8 144.0,129.0C145.0,129.3 145.9,130.1 146.1,130.7C146.3,131.3 145.3,131.9 145.2,132.5Z"/><path d="M165.1,96.0C165.1,96.4 164.6,97.0 164.0,97.2C163.4,97.4 162.0,97.0 161.3,97.1C160.6,97.3 160.6,97.8 160.0,97.9C159.4,98.1 158.4,98.1 157.7,98.0C157.0,97.9 156.3,97.5 155.9,97.2C155.5,96.9 155.3,96.4 155.4,96.0C155.5,95.6 156.1,95.3 156.5,95.0C157.0,94.7 157.4,94.4 158.0,94.3C158.6,94.2 159.3,94.3 160.0,94.3C160.7,94.3 161.5,94.1 162.1,94.2C162.8,94.2 163.5,94.5 164.0,94.9C164.5,95.2 165.1,95.6 165.1,96.0Z"/><path d="M301.7,118.5C301.9,119.0 303.7,119.7 303.8,120.4C303.9,121.0 303.1,121.9 302.3,122.2C301.6,122.5 300.2,122.6 299.5,122.3C298.8,122.0 298.5,120.9 298.0,120.5C297.5,120.1 296.8,120.2 296.4,119.9C295.9,119.5 295.2,118.9 295.2,118.5C295.2,118.1 296.2,117.7 296.4,117.2C296.7,116.6 296.4,115.5 296.9,115.1C297.4,114.8 298.7,114.9 299.5,114.9C300.3,115.0 301.5,115.0 301.9,115.3C302.4,115.7 302.4,116.7 302.4,117.3C302.3,117.8 301.4,118.0 301.7,118.5Z"/><path d="M262.9,79.0C262.7,79.4 262.5,79.6 262.2,79.8C261.9,80.1 261.6,80.2 261.2,80.4C260.9,80.6 260.5,81.0 260.0,81.1C259.5,81.2 258.6,81.3 258.1,81.2C257.5,81.1 257.0,80.7 256.7,80.3C256.4,79.9 255.9,79.3 256.3,79.0C256.6,78.7 258.3,78.7 258.7,78.5C259.1,78.3 258.6,77.9 258.8,77.6C259.0,77.2 259.5,76.5 260.0,76.4C260.5,76.3 261.2,76.7 261.8,77.0C262.3,77.2 263.2,77.4 263.4,77.7C263.6,78.0 263.1,78.6 262.9,79.0Z"/><path d="M198.1,140.0C198.0,140.4 197.3,140.8 196.9,141.1C196.4,141.4 196.0,141.6 195.5,141.7C195.0,141.9 194.5,141.8 194.0,141.8C193.5,141.8 192.8,141.9 192.5,141.7C192.2,141.5 192.6,141.0 192.2,140.7C191.7,140.4 190.3,140.4 189.9,140.0C189.5,139.6 189.4,138.7 189.9,138.4C190.3,138.2 192.0,138.5 192.7,138.5C193.4,138.5 193.6,138.5 194.0,138.5C194.4,138.6 194.6,138.7 195.1,138.7C195.6,138.8 196.8,138.5 197.3,138.7C197.8,139.0 198.2,139.6 198.1,140.0Z"/><path d="M515.2,76.0C515.3,76.3 515.0,76.6 514.8,76.9C514.6,77.2 514.5,77.5 514.1,77.8C513.7,78.1 513.0,78.7 512.5,78.7C512.0,78.7 511.5,78.0 511.0,77.7C510.5,77.5 509.7,77.4 509.5,77.2C509.2,76.9 509.3,76.3 509.5,76.0C509.7,75.7 510.3,75.5 510.5,75.2C510.8,75.0 510.7,74.6 511.0,74.3C511.4,74.0 511.9,73.5 512.5,73.4C513.1,73.3 514.2,73.3 514.6,73.6C514.9,73.9 514.6,74.8 514.7,75.2C514.8,75.6 515.2,75.7 515.2,76.0Z"/><path d="M379.2,92.5C379.2,92.9 378.4,93.4 377.8,93.6C377.3,93.8 376.6,93.7 376.1,93.8C375.6,93.8 375.5,93.9 375.0,94.0C374.5,94.1 373.9,94.5 373.3,94.5C372.7,94.5 371.8,94.2 371.4,93.9C371.1,93.5 370.9,92.9 371.1,92.5C371.3,92.1 372.2,91.8 372.7,91.6C373.2,91.4 373.6,91.5 374.0,91.3C374.3,91.1 374.6,90.4 375.0,90.3C375.4,90.2 376.1,90.5 376.6,90.7C377.0,90.9 377.4,91.1 377.8,91.4C378.3,91.7 379.2,92.1 379.2,92.5Z"/><path d="M410.8,42.5C411.0,42.9 409.8,43.5 409.0,43.7C408.3,43.8 406.9,43.5 406.3,43.6C405.6,43.7 405.6,44.2 405.0,44.3C404.4,44.5 403.5,44.6 402.7,44.5C402.0,44.4 400.9,44.1 400.5,43.8C400.2,43.5 400.3,42.9 400.5,42.5C400.7,42.1 401.5,41.9 402.0,41.6C402.4,41.3 402.4,40.9 403.0,40.7C403.5,40.5 404.4,40.3 405.0,40.4C405.6,40.4 406.3,40.7 406.8,40.9C407.4,41.1 407.7,41.3 408.4,41.5C409.1,41.8 410.7,42.1 410.8,42.5Z"/><path d="M356.6,114.8C357.1,115.5 360.2,116.3 360.5,117.3C360.8,118.2 359.8,120.0 358.3,120.3C356.9,120.6 353.6,119.6 352.0,119.2C350.4,118.7 349.8,118.0 348.9,117.5C347.9,117.1 347.0,116.9 346.2,116.5C345.4,116.0 344.3,115.5 343.9,114.8C343.6,114.1 343.6,113.2 344.1,112.5C344.6,111.8 345.7,110.9 347.0,110.5C348.3,110.1 350.4,110.2 352.0,110.3C353.6,110.3 355.4,110.5 356.4,111.0C357.4,111.5 357.9,112.4 358.0,113.1C358.0,113.7 356.2,114.1 356.6,114.8Z"/><path d="M469.1,139.4C468.8,139.7 467.6,140.0 467.1,140.2C466.5,140.4 466.2,140.3 465.8,140.5C465.4,140.7 465.4,141.1 464.7,141.4C464.0,141.7 462.5,142.3 461.9,142.2C461.3,142.1 461.0,141.1 461.0,140.6C461.0,140.2 461.6,139.8 461.8,139.4C462.0,139.0 461.8,138.7 462.0,138.5C462.3,138.3 462.8,138.3 463.3,138.0C463.7,137.8 464.1,137.1 464.7,137.0C465.3,136.9 466.2,137.2 466.8,137.4C467.4,137.5 468.0,137.8 468.4,138.2C468.8,138.5 469.3,139.1 469.1,139.4Z"/><path d="M465.6,215.0C466.1,215.6 464.6,216.5 463.2,216.9C461.7,217.4 458.8,217.5 456.9,217.6C455.1,217.7 453.7,217.5 452.0,217.5C450.3,217.6 447.6,218.1 446.4,217.9C445.3,217.7 445.7,216.7 445.0,216.2C444.3,215.7 443.1,215.6 442.1,215.0C441.1,214.4 438.4,213.3 439.1,212.8C439.7,212.2 443.8,211.9 445.9,211.8C448.1,211.8 450.5,212.1 452.0,212.4C453.5,212.6 453.7,213.2 455.2,213.4C456.6,213.5 458.8,213.2 460.6,213.5C462.3,213.8 465.2,214.4 465.6,215.0Z"/><path d="M409.1,135.0C408.8,135.4 407.5,135.6 407.0,135.8C406.5,136.0 406.5,136.1 406.1,136.3C405.8,136.5 405.5,136.8 405.0,137.0C404.5,137.1 403.6,137.3 403.2,137.1C402.7,137.0 402.5,136.4 402.2,136.1C401.9,135.7 401.4,135.4 401.4,135.0C401.4,134.6 401.8,134.2 402.2,133.9C402.6,133.7 403.2,133.6 403.7,133.5C404.1,133.4 404.6,133.3 405.0,133.3C405.4,133.3 405.6,133.5 406.3,133.5C406.9,133.6 408.4,133.3 408.9,133.5C409.3,133.8 409.4,134.6 409.1,135.0Z"/><path d="M75.8,217.5C75.6,217.8 74.0,218.0 73.4,218.3C72.8,218.5 72.6,218.6 72.1,218.9C71.5,219.2 70.7,220.1 70.0,220.2C69.3,220.2 68.4,219.4 67.6,219.2C66.8,218.9 65.7,218.9 65.0,218.6C64.4,218.4 63.8,217.9 63.9,217.5C64.0,217.1 65.1,216.7 65.8,216.5C66.5,216.3 67.5,216.4 68.2,216.2C68.9,216.1 69.1,215.8 70.0,215.6C70.9,215.4 72.7,214.9 73.5,215.1C74.3,215.2 74.4,216.0 74.7,216.4C75.1,216.8 76.0,217.2 75.8,217.5Z"/><path d="M206.2,185.0C205.9,185.5 206.3,185.9 206.1,186.3C205.8,186.6 205.1,187.1 204.5,187.2C203.9,187.2 203.2,186.8 202.5,186.8C201.8,186.8 201.1,187.4 200.3,187.4C199.5,187.4 198.2,187.1 197.7,186.7C197.2,186.3 197.1,185.5 197.4,185.0C197.6,184.5 198.7,184.1 199.3,183.8C199.9,183.6 200.5,183.5 201.0,183.4C201.6,183.3 201.8,183.2 202.5,183.0C203.2,182.8 204.2,182.2 205.1,182.2C205.9,182.3 207.3,182.7 207.5,183.2C207.7,183.7 206.4,184.5 206.2,185.0Z"/><path d="M276.4,177.5C276.7,177.9 276.4,178.5 276.0,178.9C275.7,179.2 274.9,179.5 274.3,179.6C273.7,179.6 273.1,179.1 272.5,179.0C271.9,179.0 271.3,179.5 270.9,179.4C270.5,179.2 270.4,178.7 270.2,178.4C270.1,178.1 270.3,177.9 270.1,177.5C269.8,177.1 268.8,176.5 268.8,176.1C268.9,175.7 269.8,175.2 270.4,175.1C271.0,174.9 272.0,175.1 272.5,175.4C273.0,175.6 272.9,176.4 273.3,176.6C273.6,176.8 274.1,176.5 274.6,176.7C275.1,176.8 276.2,177.1 276.4,177.5Z"/><path d="M288.2,206.0C288.1,206.4 287.1,206.9 286.7,207.3C286.3,207.7 286.2,208.2 285.7,208.5C285.3,208.7 284.5,209.0 284.0,208.8C283.5,208.6 283.4,207.7 283.0,207.5C282.6,207.2 282.1,207.4 281.6,207.1C281.2,206.9 280.8,206.5 280.5,206.0C280.3,205.5 279.9,204.6 280.2,204.2C280.5,203.7 281.6,203.4 282.2,203.4C282.8,203.4 283.5,204.0 284.0,204.2C284.5,204.4 284.6,204.3 285.1,204.4C285.6,204.5 286.3,204.4 286.8,204.7C287.3,204.9 288.2,205.6 288.2,206.0Z"/><path d="M153.8,175.0C153.7,175.3 151.9,175.6 151.2,175.8C150.4,176.1 150.0,176.1 149.4,176.3C148.7,176.5 148.4,177.0 147.5,177.2C146.6,177.4 145.1,177.4 144.2,177.3C143.3,177.1 142.3,176.6 142.0,176.3C141.8,175.9 142.6,175.3 142.9,175.0C143.2,174.7 143.7,174.5 144.1,174.2C144.4,173.9 144.5,173.6 145.1,173.3C145.7,173.0 146.6,172.6 147.5,172.5C148.4,172.5 149.5,172.9 150.2,173.1C151.0,173.3 151.5,173.6 152.1,173.9C152.7,174.3 154.0,174.7 153.8,175.0Z"/><path d="M388.2,166.0C388.8,166.8 390.0,168.2 389.1,168.9C388.2,169.5 384.8,169.7 383.0,169.8C381.1,169.9 379.3,169.7 378.0,169.4C376.7,169.2 376.5,168.5 375.1,168.3C373.6,168.1 371.1,168.6 369.3,168.2C367.6,167.9 364.3,166.7 364.6,166.0C364.9,165.3 369.7,164.9 371.1,164.2C372.5,163.6 371.8,162.5 372.9,162.1C374.0,161.6 376.6,161.4 378.0,161.6C379.4,161.8 380.3,162.9 381.5,163.3C382.7,163.7 384.1,163.7 385.2,164.1C386.4,164.6 387.6,165.2 388.2,166.0Z"/><path d="M344.5,200.0C343.8,200.6 340.7,200.8 339.7,201.3C338.6,201.7 339.0,202.3 338.1,202.7C337.1,203.2 335.7,203.8 334.0,204.0C332.3,204.2 329.1,204.5 327.9,204.1C326.8,203.7 327.5,202.2 327.1,201.5C326.7,200.9 326.1,200.6 325.5,200.0C325.0,199.4 323.0,198.1 323.8,197.7C324.6,197.3 328.6,197.7 330.3,197.5C332.0,197.3 332.6,196.9 334.0,196.8C335.4,196.6 337.3,196.5 339.0,196.6C340.7,196.8 343.2,197.2 344.1,197.7C345.1,198.3 345.3,199.4 344.5,200.0Z"/><path d="M414.4,174.0C414.3,174.6 414.8,175.0 414.7,175.6C414.6,176.2 414.3,176.9 413.5,177.6C412.8,178.2 411.1,179.5 410.0,179.4C408.9,179.4 407.5,177.8 406.9,177.1C406.3,176.4 406.8,175.8 406.4,175.2C405.9,174.7 404.6,174.5 404.4,174.0C404.3,173.5 405.2,173.2 405.5,172.5C405.7,171.8 405.0,170.2 405.8,169.7C406.5,169.3 408.8,169.5 410.0,169.7C411.2,169.9 412.1,170.5 413.0,170.9C413.9,171.4 415.2,171.7 415.4,172.2C415.6,172.7 414.5,173.4 414.4,174.0Z"/><path d="M289.5,205.0C289.7,205.3 288.6,205.9 288.1,206.2C287.6,206.5 287.0,206.7 286.5,206.7C286.0,206.8 285.4,206.5 285.0,206.5C284.6,206.4 284.4,206.4 283.8,206.3C283.2,206.3 281.9,206.6 281.4,206.4C281.0,206.1 281.3,205.4 281.4,205.0C281.5,204.6 281.7,204.2 282.1,203.9C282.4,203.6 283.0,203.4 283.5,203.3C284.0,203.2 284.5,203.0 285.0,203.0C285.5,203.1 285.9,203.4 286.3,203.5C286.6,203.7 286.7,203.9 287.3,204.1C287.8,204.4 289.4,204.7 289.5,205.0Z"/><path d="M293.8,161.0C293.7,161.3 292.8,161.6 292.5,161.9C292.2,162.3 292.3,163.0 291.9,163.2C291.5,163.5 290.5,163.6 290.0,163.5C289.5,163.3 289.3,162.5 288.9,162.2C288.6,162.0 288.2,162.0 287.9,161.8C287.5,161.6 287.0,161.4 286.8,161.0C286.5,160.6 286.3,160.0 286.5,159.6C286.7,159.3 287.5,158.9 288.1,158.8C288.7,158.7 289.5,158.9 290.0,159.1C290.5,159.3 290.6,159.6 291.1,159.8C291.5,159.9 292.2,159.8 292.6,160.0C293.1,160.2 293.8,160.7 293.8,161.0Z"/><path d="M484.4,247.5C484.6,247.9 485.2,248.6 485.1,249.0C485.0,249.4 484.2,249.7 483.8,249.8C483.4,249.8 482.8,249.6 482.5,249.4C482.2,249.2 482.1,248.8 481.9,248.6C481.6,248.5 481.1,248.7 480.8,248.5C480.5,248.3 480.1,247.8 480.1,247.5C480.0,247.2 480.4,246.8 480.6,246.4C480.8,246.0 480.9,245.4 481.2,245.2C481.5,245.1 482.1,245.2 482.5,245.4C482.9,245.5 483.2,245.7 483.4,246.0C483.6,246.2 483.6,246.5 483.8,246.8C483.9,247.0 484.2,247.1 484.4,247.5Z"/><path d="M277.8,176.0C277.4,176.3 276.0,176.4 275.5,176.6C275.1,176.8 275.5,177.2 275.2,177.4C275.0,177.7 274.5,177.9 274.0,178.1C273.5,178.2 272.7,178.3 272.1,178.2C271.5,178.1 270.4,177.8 270.3,177.4C270.2,177.0 271.3,176.4 271.5,176.0C271.6,175.6 271.1,175.2 271.3,175.0C271.5,174.7 272.2,174.5 272.6,174.4C273.1,174.3 273.5,174.5 274.0,174.4C274.5,174.3 275.2,173.9 275.8,173.9C276.4,173.9 277.5,174.2 277.8,174.5C278.1,174.9 278.1,175.7 277.8,176.0Z"/><path d="M350.9,195.0C350.4,195.5 351.2,195.6 351.3,196.1C351.3,196.7 351.6,197.8 351.1,198.2C350.5,198.6 348.9,198.8 348.0,198.7C347.1,198.6 346.2,198.1 345.4,197.7C344.6,197.4 343.8,197.1 343.2,196.7C342.7,196.2 341.7,195.4 342.0,195.0C342.3,194.6 344.5,194.4 345.1,194.0C345.7,193.6 345.1,192.9 345.6,192.5C346.1,192.2 347.1,191.8 348.0,191.7C348.9,191.5 350.2,191.4 351.3,191.6C352.3,191.8 354.2,192.3 354.2,192.9C354.1,193.4 351.4,194.5 350.9,195.0Z"/><path d="M86.9,482.0C86.8,482.4 86.7,482.6 86.6,482.9C86.5,483.3 86.5,484.0 86.3,484.2C86.0,484.4 85.4,484.4 85.0,484.3C84.6,484.2 84.2,484.1 84.0,483.8C83.7,483.5 83.8,483.1 83.7,482.8C83.5,482.5 83.4,482.3 83.2,482.0C83.1,481.7 82.8,481.2 82.8,480.7C82.9,480.3 83.2,479.6 83.6,479.5C83.9,479.4 84.6,480.1 85.0,480.3C85.4,480.5 85.3,480.7 85.7,480.8C86.1,480.8 87.1,480.5 87.3,480.7C87.5,480.9 87.0,481.6 86.9,482.0Z"/><path d="M144.0,497.0C144.0,497.3 144.3,497.5 144.2,497.8C144.2,498.0 143.8,498.0 143.5,498.2C143.2,498.5 142.9,498.9 142.5,499.0C142.1,499.1 141.5,498.9 141.2,498.7C141.0,498.4 141.2,497.9 141.1,497.6C141.0,497.3 140.7,497.2 140.6,497.0C140.6,496.8 140.5,496.4 140.7,496.2C140.8,496.0 141.2,495.8 141.5,495.7C141.8,495.5 142.1,495.5 142.5,495.4C142.9,495.3 143.6,495.1 143.9,495.2C144.1,495.4 144.3,495.9 144.3,496.2C144.3,496.5 144.0,496.7 144.0,497.0Z"/><path d="M142.3,459.0C142.1,459.4 141.5,459.5 141.3,459.8C141.1,460.0 141.2,460.5 141.0,460.7C140.7,460.9 140.3,461.0 140.0,461.0C139.7,461.1 139.2,461.0 138.9,460.9C138.6,460.7 138.3,460.4 138.1,460.1C137.9,459.8 137.7,459.4 137.7,459.0C137.7,458.6 137.6,458.0 137.8,457.8C138.1,457.5 138.9,457.7 139.3,457.7C139.6,457.7 139.7,457.7 140.0,457.5C140.3,457.4 140.8,456.9 141.2,456.9C141.6,456.9 142.3,457.2 142.5,457.6C142.6,457.9 142.5,458.6 142.3,459.0Z"/><path d="M303.8,460.0C304.0,460.5 303.5,461.3 303.0,461.7C302.5,462.1 301.6,462.2 301.0,462.6C300.3,462.9 299.6,463.7 299.0,463.7C298.4,463.7 297.6,462.9 297.1,462.5C296.6,462.1 296.3,461.8 295.9,461.3C295.5,460.9 294.8,460.5 294.7,460.0C294.7,459.5 295.3,459.1 295.5,458.5C295.8,457.9 295.8,457.0 296.4,456.6C297.0,456.3 298.3,456.2 299.0,456.4C299.7,456.6 300.1,457.5 300.6,457.9C301.1,458.3 301.4,458.4 301.9,458.7C302.5,459.1 303.6,459.5 303.8,460.0Z"/><path d="M355.5,470.0C355.5,470.3 355.5,470.6 355.4,471.0C355.3,471.3 355.2,471.8 354.9,472.1C354.6,472.3 354.1,472.7 353.7,472.7C353.3,472.6 352.8,472.2 352.6,471.8C352.5,471.5 352.7,471.0 352.5,470.7C352.4,470.4 351.8,470.3 351.6,470.0C351.4,469.7 351.3,469.0 351.5,468.7C351.7,468.5 352.5,468.7 352.8,468.5C353.2,468.3 353.3,467.7 353.7,467.6C354.1,467.5 354.7,467.6 354.9,467.9C355.2,468.1 355.1,468.8 355.2,469.2C355.2,469.5 355.5,469.7 355.5,470.0Z"/><path d="M279.8,517.0C279.8,517.3 279.7,517.6 279.7,518.0C279.6,518.3 279.6,519.1 279.3,519.3C279.0,519.5 278.4,519.3 278.0,519.2C277.6,519.1 277.4,518.7 277.1,518.6C276.8,518.4 276.1,518.4 275.9,518.2C275.8,517.9 275.9,517.3 276.0,517.0C276.1,516.7 276.4,516.5 276.6,516.2C276.7,515.9 276.7,515.5 276.9,515.2C277.2,514.8 277.6,514.3 278.0,514.3C278.4,514.3 278.9,514.7 279.1,515.0C279.4,515.3 279.4,515.8 279.5,516.1C279.6,516.4 279.8,516.7 279.8,517.0Z"/><path d="M452.6,305.0C452.5,305.4 452.9,305.8 452.8,306.1C452.6,306.4 452.0,306.6 451.5,306.8C451.1,306.9 450.5,306.9 450.0,306.9C449.5,306.9 448.9,307.0 448.4,306.8C447.9,306.7 447.5,306.4 447.2,306.1C446.8,305.8 446.1,305.3 446.1,305.0C446.2,304.7 447.0,304.2 447.4,304.0C447.8,303.8 448.4,303.8 448.8,303.6C449.3,303.5 449.5,303.3 450.0,303.1C450.5,303.0 451.3,302.7 451.9,302.8C452.4,302.9 453.1,303.4 453.3,303.7C453.4,304.1 452.7,304.6 452.6,305.0Z"/><path d="M425.0,394.0C425.0,394.6 425.3,395.2 425.1,395.8C424.9,396.3 424.4,397.1 423.9,397.3C423.4,397.5 422.5,397.3 422.0,397.0C421.5,396.8 421.4,396.1 421.0,395.8C420.5,395.6 419.9,395.8 419.5,395.5C419.0,395.2 418.5,394.6 418.4,394.0C418.3,393.4 418.3,392.5 418.6,392.1C419.0,391.6 419.8,391.2 420.3,391.1C420.9,391.0 421.5,391.6 422.0,391.6C422.5,391.7 423.1,391.2 423.5,391.4C424.0,391.5 424.5,392.0 424.7,392.4C424.9,392.9 424.9,393.4 425.0,394.0Z"/><path d="M416.1,388.0C416.3,388.4 415.7,389.0 415.2,389.2C414.8,389.5 414.0,389.5 413.4,389.6C412.9,389.7 412.5,389.8 412.0,389.8C411.5,389.9 410.8,389.9 410.4,389.8C410.0,389.6 409.9,389.2 409.6,388.9C409.4,388.6 409.0,388.4 408.8,388.0C408.6,387.6 408.4,387.0 408.6,386.7C408.9,386.4 409.6,386.0 410.2,385.9C410.8,385.8 411.5,385.9 412.0,386.0C412.5,386.2 412.6,386.7 413.0,386.8C413.4,387.0 413.9,386.9 414.5,387.0C415.0,387.2 416.0,387.6 416.1,388.0Z"/><path d="M492.0,108.4C492.0,108.7 492.0,109.0 491.8,109.3C491.7,109.6 491.4,109.9 491.0,110.1C490.6,110.3 490.1,110.6 489.5,110.7C488.9,110.8 487.9,111.1 487.3,110.9C486.8,110.7 486.1,110.1 486.2,109.7C486.4,109.2 487.9,108.7 488.1,108.4C488.4,108.1 487.7,108.1 487.6,107.7C487.5,107.3 487.1,106.3 487.4,106.0C487.7,105.7 488.9,105.9 489.5,106.0C490.1,106.0 490.8,106.1 491.3,106.4C491.7,106.6 492.1,107.0 492.2,107.4C492.3,107.7 492.1,108.1 492.0,108.4Z"/><path d="M480.9,110.0C480.8,110.3 479.8,110.4 479.5,110.6C479.1,110.8 479.1,111.0 478.9,111.2C478.6,111.3 478.3,111.4 478.0,111.5C477.7,111.5 477.4,111.3 477.1,111.2C476.8,111.1 476.4,111.0 476.1,110.8C475.8,110.6 475.2,110.3 475.1,110.0C475.1,109.7 475.5,109.2 475.8,109.1C476.2,108.9 477.0,109.3 477.4,109.2C477.7,109.1 477.7,108.8 478.0,108.7C478.3,108.6 478.6,108.7 479.0,108.7C479.3,108.8 479.9,108.8 480.2,109.0C480.6,109.2 481.1,109.7 480.9,110.0Z"/><path d="M486.1,114.0C485.9,114.3 486.0,114.6 485.7,114.8C485.3,114.9 484.5,114.8 484.1,114.9C483.6,115.1 483.5,115.5 483.0,115.7C482.5,115.8 481.5,115.8 481.1,115.7C480.6,115.5 480.8,115.0 480.5,114.7C480.3,114.4 479.4,114.2 479.4,114.0C479.4,113.8 480.0,113.4 480.4,113.2C480.8,113.0 481.2,112.9 481.6,112.8C482.1,112.7 482.5,112.7 483.0,112.7C483.5,112.6 484.1,112.5 484.7,112.5C485.3,112.6 486.2,112.8 486.5,113.0C486.7,113.2 486.2,113.7 486.1,114.0Z"/><path d="M534.5,110.0C534.5,110.4 534.3,111.0 533.9,111.2C533.6,111.4 532.8,110.9 532.4,111.1C532.1,111.2 532.1,111.8 531.8,111.9C531.5,112.1 530.9,112.3 530.6,112.1C530.3,111.9 530.3,111.3 530.2,110.9C530.0,110.6 529.7,110.4 529.6,110.0C529.5,109.6 529.3,109.0 529.5,108.7C529.6,108.3 530.3,108.0 530.7,108.1C531.1,108.1 531.5,108.8 531.8,108.8C532.1,108.9 532.4,108.4 532.7,108.4C533.1,108.4 533.6,108.5 533.9,108.8C534.2,109.0 534.5,109.6 534.5,110.0Z"/><path d="M522.6,125.5C522.6,125.9 522.6,126.4 522.5,126.9C522.4,127.3 522.2,128.1 521.9,128.4C521.6,128.7 521.0,128.7 520.6,128.5C520.2,128.4 519.9,127.8 519.7,127.4C519.5,127.1 519.6,126.7 519.4,126.4C519.2,126.0 518.8,125.9 518.6,125.5C518.5,125.1 518.6,124.6 518.6,124.1C518.7,123.5 518.7,122.3 519.0,122.1C519.4,121.9 520.3,122.3 520.6,122.7C520.9,123.1 520.8,124.1 521.1,124.4C521.4,124.6 522.2,124.0 522.4,124.2C522.7,124.4 522.6,125.1 522.6,125.5Z"/><path d="M460.3,167.0C460.2,167.2 460.2,167.4 460.1,167.7C460.1,167.9 460.1,168.4 459.9,168.6C459.8,168.8 459.3,168.8 459.0,168.8C458.7,168.8 458.1,169.0 458.0,168.8C457.8,168.6 457.9,167.9 458.0,167.6C458.0,167.3 458.4,167.3 458.3,167.0C458.2,166.7 457.4,166.4 457.4,166.1C457.3,165.8 457.7,165.3 458.0,165.2C458.2,165.1 458.7,165.2 459.0,165.3C459.3,165.4 459.5,165.6 459.7,165.7C460.0,165.9 460.3,166.0 460.4,166.2C460.5,166.4 460.3,166.8 460.3,167.0Z"/><path d="M482.8,38.0C483.1,38.5 484.5,39.4 484.5,39.9C484.4,40.5 483.3,41.0 482.6,41.3C481.8,41.7 480.7,42.1 480.0,41.9C479.3,41.7 478.6,40.8 478.3,40.3C477.9,39.7 478.5,39.2 478.0,38.9C477.6,38.5 475.9,38.5 475.5,38.0C475.0,37.5 475.1,36.5 475.5,36.0C475.8,35.6 477.0,35.3 477.8,35.1C478.6,35.0 479.2,34.9 480.0,34.9C480.8,34.8 482.0,34.5 482.4,34.9C482.9,35.2 482.6,36.3 482.7,36.8C482.8,37.4 482.5,37.5 482.8,38.0Z"/><path d="M455.3,57.0C455.3,57.5 454.6,58.0 454.2,58.4C453.7,58.9 453.3,59.5 452.6,59.7C451.9,60.0 450.9,59.8 450.0,59.8C449.1,59.8 448.2,59.9 447.3,59.8C446.5,59.6 445.5,59.2 444.9,58.8C444.3,58.3 443.6,57.6 443.7,57.0C443.8,56.4 444.6,55.6 445.5,55.4C446.4,55.2 448.1,56.2 448.8,55.8C449.6,55.4 449.2,53.7 450.0,53.3C450.8,52.9 452.8,53.0 453.5,53.4C454.2,53.7 453.9,55.0 454.2,55.6C454.5,56.2 455.3,56.5 455.3,57.0Z"/><path d="M322.3,48.0C322.2,48.4 321.4,48.7 321.1,49.0C320.8,49.3 320.7,49.9 320.3,50.1C319.9,50.3 319.0,50.2 318.5,50.1C318.0,50.0 317.6,49.6 317.2,49.5C316.8,49.3 316.4,49.2 316.0,48.9C315.7,48.7 315.4,48.4 315.3,48.0C315.1,47.6 315.1,47.1 315.3,46.8C315.5,46.4 316.0,45.8 316.5,45.7C317.1,45.6 318.0,45.9 318.5,46.1C319.0,46.3 318.9,46.8 319.4,46.9C319.9,47.1 321.0,46.7 321.5,46.9C322.0,47.0 322.4,47.6 322.3,48.0Z"/><path d="M327.5,98.0C327.7,98.8 327.0,100.1 325.2,100.5C323.4,101.0 319.0,100.7 316.8,100.7C314.6,100.8 314.0,100.8 312.0,101.0C310.0,101.2 306.8,102.3 304.8,102.2C302.8,102.0 301.3,101.0 300.2,100.3C299.1,99.6 297.9,98.7 298.1,98.0C298.2,97.3 299.8,96.5 301.1,95.9C302.3,95.3 304.0,94.7 305.8,94.4C307.7,94.1 310.1,94.0 312.0,94.1C313.9,94.2 315.1,94.8 317.0,95.1C318.9,95.4 321.9,95.3 323.6,95.8C325.4,96.2 327.2,97.2 327.5,98.0Z"/><path d="M297.1,92.0C297.5,92.8 300.4,93.9 300.1,94.6C299.8,95.3 297.0,95.8 295.4,96.1C293.7,96.4 291.6,96.4 290.0,96.3C288.4,96.1 286.7,95.8 285.7,95.3C284.7,94.8 285.3,94.0 284.2,93.5C283.2,92.9 280.3,92.7 279.5,92.0C278.7,91.3 278.6,89.9 279.6,89.3C280.6,88.8 283.8,88.7 285.5,88.5C287.2,88.4 288.4,88.5 290.0,88.4C291.6,88.3 294.1,87.6 295.4,87.8C296.7,88.1 297.3,89.4 297.6,90.1C297.8,90.8 296.7,91.2 297.1,92.0Z"/><path d="M70.2,456.0C69.4,456.7 66.2,456.9 65.2,457.5C64.3,458.1 65.2,459.4 64.3,459.7C63.4,460.1 61.3,459.8 60.0,459.6C58.7,459.5 58.0,459.2 56.6,459.0C55.2,458.8 52.9,458.9 51.6,458.4C50.4,457.9 49.2,456.8 49.1,456.0C49.0,455.2 49.7,453.8 51.1,453.4C52.5,453.1 56.0,453.9 57.5,453.8C59.0,453.8 58.8,453.4 60.0,453.1C61.2,452.9 62.7,452.2 64.4,452.2C66.1,452.2 69.0,452.5 69.9,453.1C70.9,453.8 71.0,455.3 70.2,456.0Z"/><path d="M35.7,452.0C35.9,452.6 36.2,453.5 35.7,454.0C35.3,454.5 33.8,454.8 32.8,454.9C31.9,455.0 30.9,454.5 30.0,454.5C29.1,454.4 28.1,454.9 27.4,454.7C26.7,454.5 26.3,453.9 25.8,453.5C25.3,453.0 24.6,452.5 24.6,452.0C24.5,451.5 25.1,451.0 25.5,450.4C25.9,449.9 26.1,449.0 26.8,448.7C27.5,448.3 29.2,448.2 30.0,448.4C30.8,448.7 30.9,450.0 31.6,450.3C32.3,450.7 33.4,450.3 34.1,450.6C34.8,450.8 35.4,451.4 35.7,452.0Z"/><path d="M262.8,78.8C262.9,79.2 262.8,79.7 262.7,80.2C262.5,80.6 262.1,81.2 261.7,81.5C261.2,81.8 260.3,82.3 259.8,82.1C259.3,82.0 259.0,80.9 258.6,80.5C258.3,80.1 258.2,80.0 257.9,79.7C257.5,79.4 256.8,79.2 256.6,78.8C256.3,78.4 256.1,77.6 256.4,77.2C256.7,76.8 257.6,76.6 258.2,76.4C258.7,76.3 259.2,76.2 259.8,76.2C260.4,76.1 261.1,76.1 261.5,76.4C261.8,76.7 261.6,77.4 261.8,77.9C262.0,78.3 262.6,78.4 262.8,78.8Z"/><path d="M235.5,75.0C235.3,75.5 234.9,75.6 234.7,76.2C234.5,76.7 234.9,77.7 234.4,78.1C234.0,78.6 232.8,78.8 232.0,78.9C231.2,78.9 229.9,78.8 229.4,78.4C228.9,78.0 228.7,76.9 228.8,76.4C228.9,75.8 229.9,75.5 229.8,75.0C229.7,74.5 228.4,74.0 228.3,73.4C228.2,72.8 228.8,71.9 229.4,71.6C230.0,71.3 231.2,71.3 232.0,71.4C232.8,71.5 233.5,71.9 234.1,72.2C234.7,72.6 235.4,73.0 235.6,73.4C235.9,73.9 235.6,74.5 235.5,75.0Z"/><path d="M398.4,186.0C398.9,186.8 400.2,188.3 399.7,189.0C399.2,189.6 396.7,190.0 395.4,189.9C394.1,189.9 393.0,189.0 392.0,188.9C391.0,188.8 389.9,189.4 389.2,189.2C388.5,189.0 388.6,188.2 387.7,187.7C386.8,187.1 384.1,186.7 383.7,186.0C383.2,185.3 384.0,183.8 385.0,183.3C386.0,182.8 388.3,183.3 389.5,183.1C390.6,182.8 391.1,181.9 392.0,181.9C392.9,181.9 394.0,182.4 394.7,182.8C395.5,183.2 396.0,183.7 396.7,184.2C397.3,184.7 397.9,185.2 398.4,186.0Z"/><path d="M467.8,36.0C467.7,36.5 466.0,37.0 465.3,37.5C464.7,38.0 464.6,38.7 463.9,39.0C463.2,39.3 461.8,39.2 461.0,39.1C460.2,38.9 459.7,38.4 458.9,38.2C458.1,38.0 456.7,38.0 456.4,37.6C456.0,37.2 457.0,36.6 456.7,36.0C456.5,35.4 455.0,34.6 455.1,34.0C455.2,33.3 456.5,32.4 457.5,32.3C458.4,32.3 460.1,33.4 461.0,33.7C461.9,34.1 461.9,34.1 462.7,34.2C463.5,34.3 464.9,34.1 465.7,34.4C466.6,34.7 467.8,35.5 467.8,36.0Z"/></g>
<g fill="#18e8e4"><path d="M307.3,34.8C307.3,35.7 306.9,36.4 306.6,37.4C306.4,38.4 306.5,40.3 305.7,40.9C304.8,41.6 302.6,41.6 301.5,41.2C300.3,40.9 299.7,39.5 298.8,38.9C297.9,38.2 296.7,38.2 296.0,37.5C295.4,36.8 295.0,35.7 295.0,34.8C295.0,33.9 295.5,32.9 296.0,32.1C296.5,31.2 297.1,30.2 298.0,29.6C298.9,29.0 300.3,28.3 301.5,28.3C302.6,28.3 304.0,29.1 304.8,29.8C305.7,30.4 306.1,31.4 306.5,32.2C306.9,33.1 307.2,33.9 307.3,34.8Z"/><path d="M306.8,42.9C306.9,43.6 306.9,44.5 306.6,45.1C306.2,45.7 305.5,46.5 304.8,46.7C304.1,46.9 303.0,46.4 302.3,46.3C301.6,46.2 301.1,46.1 300.4,45.9C299.7,45.7 298.6,45.5 298.2,45.0C297.8,44.5 297.8,43.6 297.8,42.9C297.8,42.2 297.6,41.3 298.0,40.8C298.4,40.2 299.5,39.9 300.2,39.7C300.9,39.4 301.6,39.3 302.3,39.3C303.0,39.3 304.0,39.2 304.5,39.5C305.1,39.8 305.5,40.5 305.8,41.1C306.2,41.7 306.7,42.3 306.8,42.9Z"/><path d="M316.8,42.9C317.1,43.6 317.4,44.9 316.8,45.4C316.3,46.0 314.6,46.0 313.5,46.0C312.5,46.1 311.3,45.8 310.4,45.5C309.6,45.1 308.9,44.5 308.3,44.0C307.7,43.4 307.0,42.8 306.7,42.2C306.3,41.5 306.0,40.7 306.0,40.0C306.1,39.3 306.5,38.5 307.1,38.0C307.7,37.5 308.6,37.1 309.6,36.9C310.5,36.8 311.8,36.7 312.7,37.0C313.7,37.3 314.8,38.0 315.2,38.7C315.6,39.3 314.8,40.1 315.1,40.8C315.3,41.5 316.5,42.1 316.8,42.9Z"/><path d="M325.4,41.0C325.3,41.7 325.0,42.4 324.6,43.0C324.3,43.5 323.7,44.1 323.2,44.4C322.6,44.6 321.9,44.6 321.2,44.6C320.6,44.6 319.9,44.6 319.4,44.3C318.8,44.0 318.4,43.5 318.0,42.9C317.6,42.4 316.9,41.7 316.8,41.0C316.8,40.4 317.2,39.5 317.6,38.9C318.1,38.4 318.8,38.1 319.4,37.9C320.0,37.6 320.6,37.4 321.2,37.4C321.8,37.5 322.4,37.7 323.0,38.0C323.6,38.2 324.6,38.3 325.0,38.8C325.4,39.4 325.5,40.3 325.4,41.0Z"/><path d="M104.5,50.5C104.5,51.5 103.6,52.8 103.1,53.7C102.6,54.5 102.1,55.2 101.4,55.7C100.8,56.2 100.0,56.5 99.3,56.5C98.6,56.4 98.1,55.6 97.3,55.2C96.6,54.9 95.4,55.1 94.9,54.3C94.5,53.5 94.7,51.6 94.8,50.5C94.9,49.3 95.4,48.5 95.7,47.5C96.1,46.6 96.4,45.2 97.0,44.6C97.6,44.0 98.6,43.9 99.3,44.0C100.0,44.2 100.7,45.1 101.3,45.6C101.9,46.2 102.4,46.7 102.9,47.5C103.5,48.3 104.5,49.4 104.5,50.5Z"/><path d="M346.0,33.2C345.8,34.1 346.9,34.7 346.8,35.5C346.6,36.4 346.0,37.4 345.0,38.1C344.0,38.8 342.0,39.6 340.6,39.7C339.1,39.8 337.4,39.2 336.0,38.8C334.7,38.4 333.1,37.9 332.3,37.2C331.5,36.5 331.0,35.3 331.2,34.5C331.5,33.6 333.0,32.7 333.8,31.9C334.5,31.2 335.0,30.5 335.9,29.8C336.9,29.2 338.0,28.6 339.5,28.1C341.1,27.7 344.1,26.8 345.5,27.2C346.8,27.5 347.6,29.2 347.7,30.2C347.8,31.2 346.1,32.3 346.0,33.2Z"/><path d="M371.5,40.0C371.5,40.6 370.9,41.2 370.5,41.9C370.1,42.6 370.4,43.6 368.9,44.0C367.5,44.3 363.9,44.2 362.0,44.1C360.1,43.9 359.4,43.4 357.6,43.1C355.9,42.8 352.6,42.6 351.6,42.1C350.7,41.6 351.4,40.7 351.7,40.0C351.9,39.3 352.5,38.6 353.3,38.1C354.2,37.5 355.4,37.0 356.8,36.6C358.3,36.2 360.2,35.7 362.0,35.7C363.9,35.6 366.7,35.9 368.0,36.3C369.4,36.7 369.6,37.5 370.1,38.1C370.7,38.7 371.4,39.4 371.5,40.0Z"/><path d="M445.1,41.2C445.3,42.5 442.9,44.6 440.8,45.8C438.7,46.9 434.8,47.4 432.5,48.1C430.2,48.9 429.2,49.5 427.0,50.0C424.9,50.6 422.3,51.2 419.4,51.4C416.6,51.5 411.3,51.7 409.9,50.8C408.4,49.9 410.2,47.5 410.8,46.0C411.4,44.6 412.3,43.3 413.5,42.1C414.6,40.9 415.7,39.3 417.7,38.6C419.7,37.8 422.8,37.9 425.3,37.6C427.7,37.3 430.1,36.6 432.5,36.7C434.9,36.8 437.4,37.3 439.5,38.1C441.6,38.8 444.9,39.9 445.1,41.2Z"/><path d="M473.9,42.5C474.2,43.9 473.6,46.2 472.1,47.0C470.7,47.7 467.0,47.0 464.9,47.0C462.9,47.0 461.7,47.4 459.9,47.2C458.2,47.0 456.1,46.6 454.6,45.8C453.1,45.0 452.2,43.7 451.0,42.4C449.7,41.0 446.9,39.0 447.1,37.8C447.4,36.5 450.6,35.4 452.3,34.8C454.1,34.1 455.8,34.1 457.5,33.7C459.2,33.2 460.9,31.7 462.6,31.9C464.3,32.1 466.4,33.6 467.7,34.7C468.9,35.8 469.2,37.0 470.2,38.3C471.3,39.6 473.5,41.0 473.9,42.5Z"/><path d="M491.0,65.2C490.5,66.7 486.2,68.5 483.7,69.4C481.3,70.4 478.4,69.9 476.2,71.0C473.9,72.1 473.0,75.4 470.4,76.0C467.7,76.6 462.3,75.7 460.1,74.6C457.8,73.5 458.3,71.0 457.0,69.4C455.7,67.9 452.5,66.7 452.2,65.2C451.9,63.7 453.5,61.7 455.2,60.5C457.0,59.2 459.9,58.4 462.4,57.7C465.0,56.9 467.6,56.3 470.4,56.2C473.2,56.0 476.4,56.3 479.2,57.0C481.9,57.6 484.8,58.8 486.8,60.1C488.7,61.5 491.5,63.6 491.0,65.2Z"/><path d="M543.3,16.2C542.5,17.2 540.4,17.5 539.7,18.4C539.0,19.2 539.8,20.5 539.0,21.4C538.3,22.2 536.7,23.4 535.2,23.6C533.7,23.8 531.5,23.3 530.2,22.7C528.9,22.0 527.5,20.8 527.2,19.7C526.9,18.6 528.3,17.3 528.5,16.2C528.7,15.2 528.1,14.2 528.5,13.3C528.9,12.3 529.8,11.1 530.9,10.6C532.0,10.1 533.7,10.4 535.2,10.3C536.7,10.2 538.3,9.8 539.9,10.1C541.4,10.5 543.9,11.2 544.5,12.3C545.0,13.3 544.1,15.2 543.3,16.2Z"/><path d="M549.0,38.3C548.7,39.4 548.1,40.0 547.7,40.9C547.3,41.8 547.0,42.9 546.4,43.5C545.8,44.1 544.9,44.5 544.1,44.6C543.2,44.8 542.1,45.0 541.4,44.5C540.7,44.0 540.2,42.5 539.8,41.5C539.4,40.5 539.0,39.4 539.0,38.3C538.9,37.2 539.1,35.6 539.6,34.9C540.1,34.2 541.3,34.4 542.1,34.0C542.8,33.6 543.3,32.9 544.1,32.5C544.8,32.2 545.9,31.8 546.8,32.1C547.6,32.4 548.7,33.4 549.1,34.4C549.4,35.4 549.2,37.2 549.0,38.3Z"/><path d="M505.8,51.3C505.1,52.2 504.0,52.6 503.1,53.3C502.2,54.0 501.6,55.1 500.4,55.4C499.2,55.6 497.2,55.4 496.0,54.8C494.7,54.3 494.0,53.1 492.9,52.1C491.7,51.2 489.7,50.2 489.2,49.1C488.8,48.1 489.8,46.7 490.4,45.7C490.9,44.7 491.4,43.5 492.4,43.0C493.5,42.5 495.2,42.6 496.5,42.6C497.7,42.7 498.7,43.1 500.2,43.4C501.6,43.6 504.2,43.4 505.3,44.1C506.4,44.9 506.9,46.9 507.0,48.1C507.0,49.3 506.4,50.4 505.8,51.3Z"/><path d="M521.7,52.8C521.9,53.6 522.4,54.3 522.1,55.1C521.9,55.9 521.0,56.8 520.2,57.4C519.4,58.1 518.3,58.6 517.3,58.9C516.3,59.1 515.4,59.2 514.4,59.2C513.4,59.2 512.2,59.3 511.3,59.0C510.3,58.7 509.2,58.2 508.9,57.5C508.6,56.8 509.2,55.6 509.7,54.8C510.1,54.0 511.0,53.1 511.8,52.6C512.6,52.0 513.6,51.7 514.6,51.3C515.5,50.9 516.6,50.3 517.6,50.2C518.7,50.0 520.2,50.1 520.9,50.6C521.6,51.0 521.5,52.1 521.7,52.8Z"/><path d="M237.5,79.4C237.7,80.4 238.8,81.5 238.5,82.5C238.3,83.5 237.1,84.8 236.0,85.4C234.9,86.0 233.0,86.1 231.8,86.1C230.6,86.0 229.9,85.3 228.8,85.0C227.6,84.8 226.0,85.1 225.0,84.6C224.0,84.1 223.0,83.0 222.8,82.0C222.5,81.0 223.0,79.7 223.5,78.6C224.0,77.6 224.8,76.3 225.9,75.8C227.0,75.3 228.7,76.0 230.0,75.8C231.3,75.7 232.4,74.8 233.6,74.9C234.7,75.0 236.3,75.6 236.9,76.4C237.6,77.1 237.2,78.4 237.5,79.4Z"/><path d="M310.8,92.2C311.8,93.4 313.6,95.2 313.0,96.4C312.5,97.6 309.8,99.2 307.7,99.6C305.5,99.9 302.1,99.0 300.0,98.6C298.0,98.2 296.9,97.8 295.2,97.3C293.5,96.8 290.7,96.5 289.9,95.6C289.2,94.8 291.2,93.5 290.8,92.2C290.5,91.0 287.6,89.5 287.9,88.3C288.1,87.0 290.3,85.3 292.3,84.8C294.3,84.3 297.8,85.2 300.0,85.4C302.3,85.7 304.4,85.9 305.6,86.6C306.8,87.3 306.3,88.7 307.2,89.6C308.0,90.6 309.9,91.1 310.8,92.2Z"/><path d="M325.9,88.8C325.6,89.8 324.2,90.4 323.6,91.3C323.0,92.2 323.0,93.4 322.4,94.0C321.7,94.6 320.7,95.0 319.8,95.0C318.9,95.1 317.8,95.0 317.0,94.5C316.2,94.0 315.5,93.0 315.0,92.0C314.5,91.1 314.1,89.9 314.0,88.8C314.0,87.6 314.2,86.1 314.8,85.3C315.3,84.5 316.6,84.3 317.4,84.0C318.3,83.6 319.0,83.2 319.8,83.2C320.6,83.1 321.4,83.3 322.3,83.6C323.3,83.8 324.9,83.9 325.5,84.8C326.1,85.6 326.2,87.7 325.9,88.8Z"/><path d="M275.4,138.1C275.2,139.3 275.4,140.6 274.7,141.6C274.0,142.6 272.5,143.6 271.0,144.2C269.5,144.8 267.7,145.0 265.7,145.2C263.7,145.4 261.2,145.8 259.2,145.3C257.3,144.8 255.1,143.6 254.2,142.4C253.2,141.2 253.3,139.4 253.7,138.1C254.2,136.9 255.6,135.6 257.0,134.8C258.4,134.1 260.7,134.5 262.1,133.8C263.6,133.0 263.8,131.1 265.7,130.4C267.6,129.6 272.0,128.8 273.7,129.5C275.4,130.2 275.6,132.9 275.9,134.4C276.1,135.8 275.6,136.9 275.4,138.1Z"/><path d="M123.5,141.8C123.6,142.7 122.4,143.9 121.8,144.8C121.2,145.8 121.0,146.9 120.0,147.5C119.1,148.1 117.3,148.6 116.1,148.6C115.0,148.5 114.4,147.5 113.2,147.3C112.1,147.0 110.5,147.5 109.3,147.1C108.2,146.7 106.6,145.8 106.3,144.9C106.0,143.9 106.6,142.5 107.4,141.6C108.2,140.7 110.0,140.2 111.2,139.7C112.4,139.2 113.3,138.8 114.4,138.6C115.5,138.4 116.8,138.1 117.9,138.2C119.0,138.4 120.2,138.9 121.2,139.5C122.1,140.1 123.4,140.9 123.5,141.8Z"/><path d="M94.6,146.3C94.5,147.2 94.7,147.8 94.5,148.8C94.3,149.7 94.2,151.3 93.5,151.8C92.8,152.4 91.3,152.1 90.3,152.0C89.4,151.8 88.5,151.3 87.7,150.9C86.9,150.4 85.9,149.9 85.5,149.1C85.0,148.4 84.7,147.2 84.8,146.3C85.0,145.5 85.7,144.7 86.3,144.0C86.8,143.3 87.2,142.7 87.9,142.1C88.5,141.5 89.4,140.4 90.3,140.2C91.2,140.0 92.6,140.4 93.4,140.9C94.2,141.5 94.9,142.7 95.1,143.6C95.3,144.5 94.6,145.5 94.6,146.3Z"/><path d="M240.6,143.6C240.7,144.3 241.9,145.2 241.7,146.0C241.6,146.7 240.5,147.5 239.7,147.8C238.8,148.2 237.5,148.3 236.6,148.2C235.6,148.1 234.8,147.5 234.1,147.0C233.4,146.6 232.8,146.2 232.4,145.6C231.9,145.0 231.3,144.3 231.2,143.6C231.1,142.8 231.2,141.9 231.6,141.2C232.0,140.6 232.8,139.7 233.6,139.4C234.4,139.2 235.6,139.6 236.6,139.6C237.6,139.6 238.8,139.1 239.6,139.4C240.3,139.7 241.0,140.7 241.1,141.4C241.3,142.1 240.5,142.8 240.6,143.6Z"/><path d="M274.7,111.1C274.6,112.1 274.6,112.9 274.3,113.8C274.0,114.7 273.7,116.4 273.1,116.7C272.4,117.1 271.2,116.1 270.5,115.8C269.7,115.5 269.2,115.4 268.6,115.1C267.9,114.7 267.1,114.5 266.6,113.8C266.2,113.2 265.7,112.1 265.7,111.1C265.6,110.2 265.8,108.8 266.3,108.1C266.7,107.3 267.7,107.0 268.4,106.7C269.1,106.5 269.8,106.4 270.5,106.4C271.2,106.4 271.9,106.3 272.6,106.6C273.3,106.9 274.3,107.3 274.7,108.1C275.0,108.8 274.7,110.2 274.7,111.1Z"/><path d="M290.7,117.6C291.0,118.4 291.1,119.5 290.6,120.1C290.1,120.7 288.6,121.0 287.7,121.3C286.8,121.6 286.0,122.1 285.1,122.1C284.3,122.2 283.1,121.9 282.4,121.5C281.7,121.1 281.3,120.3 280.9,119.7C280.5,119.1 280.2,118.4 280.1,117.6C279.9,116.9 279.9,116.0 280.2,115.3C280.6,114.7 281.3,113.9 282.2,113.5C283.0,113.1 284.2,113.1 285.1,113.1C286.1,113.2 287.1,113.5 287.8,113.9C288.4,114.4 288.4,115.2 288.9,115.8C289.4,116.4 290.4,116.9 290.7,117.6Z"/><path d="M386.2,122.9C387.5,124.1 390.5,126.2 390.0,127.5C389.5,128.8 385.6,130.2 383.1,130.8C380.7,131.3 377.6,131.1 375.2,130.9C372.9,130.8 370.9,130.5 369.1,130.0C367.3,129.4 365.3,128.7 364.3,127.7C363.3,126.7 363.3,125.4 363.0,124.1C362.6,122.9 361.6,121.4 362.3,120.1C362.9,118.8 364.8,117.3 366.8,116.5C368.9,115.6 371.9,115.1 374.4,115.1C376.8,115.0 380.2,115.3 381.5,116.2C382.8,117.1 381.4,119.3 382.2,120.4C383.0,121.5 384.9,121.7 386.2,122.9Z"/><path d="M441.2,124.8C440.9,125.5 440.9,126.7 440.1,127.0C439.4,127.4 438.0,127.3 436.9,127.1C435.7,126.8 434.1,126.4 433.1,125.7C432.2,124.9 431.8,123.6 431.1,122.6C430.5,121.5 429.5,120.4 429.3,119.5C429.1,118.6 429.4,117.4 430.0,116.9C430.6,116.4 432.1,116.6 433.1,116.5C434.0,116.3 434.6,115.7 435.6,115.8C436.7,115.9 438.1,116.2 439.3,116.9C440.5,117.5 442.3,118.8 442.8,119.8C443.2,120.7 442.2,121.8 441.9,122.6C441.7,123.4 441.5,124.0 441.2,124.8Z"/><path d="M364.9,149.8C364.8,150.9 362.7,152.0 361.1,152.7C359.5,153.4 357.3,153.8 355.4,154.0C353.6,154.1 352.0,153.6 350.1,153.5C348.2,153.4 346.6,153.7 344.1,153.4C341.6,153.0 336.1,152.4 334.9,151.4C333.7,150.4 335.9,148.5 336.9,147.3C337.9,146.2 339.4,145.3 341.0,144.7C342.6,144.1 344.9,144.3 346.6,143.9C348.3,143.6 349.0,142.8 351.0,142.6C353.0,142.4 356.8,142.2 358.5,142.8C360.3,143.4 360.5,145.1 361.5,146.3C362.6,147.4 364.9,148.7 364.9,149.8Z"/><path d="M429.9,146.0C429.8,146.7 428.3,147.2 427.3,147.4C426.2,147.7 425.0,147.6 423.8,147.6C422.6,147.7 421.4,148.0 420.1,147.7C418.8,147.4 416.7,146.4 415.9,145.7C415.1,144.9 415.3,143.8 415.2,142.9C415.1,142.1 415.0,141.3 415.2,140.7C415.5,140.0 416.1,139.5 416.8,139.0C417.4,138.4 418.0,137.7 419.2,137.6C420.3,137.4 422.4,137.5 423.6,138.1C424.8,138.6 425.5,140.0 426.3,140.8C427.1,141.7 427.6,142.3 428.2,143.1C428.8,144.0 430.1,145.3 429.9,146.0Z"/><path d="M524.3,148.5C524.4,149.2 524.5,150.0 524.3,150.8C524.1,151.6 523.9,152.6 523.3,153.2C522.6,153.9 521.3,154.5 520.3,154.6C519.3,154.7 518.1,154.3 517.2,153.9C516.3,153.6 515.4,153.2 514.8,152.6C514.2,152.0 513.7,151.2 513.6,150.4C513.4,149.6 513.3,148.5 513.8,147.8C514.2,147.1 515.5,146.7 516.2,146.1C517.0,145.6 517.5,144.9 518.5,144.5C519.5,144.1 521.2,143.4 522.1,143.6C523.0,143.9 523.5,145.3 523.9,146.1C524.2,146.9 524.2,147.7 524.3,148.5Z"/><path d="M87.2,194.2C87.3,195.2 86.8,196.6 86.1,197.5C85.5,198.3 84.3,199.1 83.2,199.4C82.2,199.7 81.0,199.4 80.0,199.3C78.9,199.3 78.0,199.3 77.0,199.0C76.0,198.7 74.3,198.3 73.8,197.5C73.3,196.7 73.9,195.3 74.0,194.2C74.1,193.2 73.9,192.2 74.3,191.2C74.7,190.2 75.4,188.8 76.3,188.4C77.3,188.0 78.9,188.3 80.0,188.5C81.0,188.8 81.8,189.3 82.7,189.8C83.5,190.3 84.4,190.7 85.1,191.5C85.9,192.2 87.0,193.2 87.2,194.2Z"/><path d="M112.1,227.1C112.4,228.1 111.3,229.6 111.1,230.7C111.0,231.8 111.3,232.5 111.0,233.5C110.6,234.5 110.1,235.6 109.1,236.6C108.2,237.6 106.7,239.0 105.5,239.3C104.2,239.6 102.5,239.1 101.7,238.3C101.0,237.6 101.6,235.8 101.0,234.9C100.5,234.0 98.6,233.8 98.5,232.9C98.3,232.1 99.5,230.7 100.2,229.7C100.8,228.7 101.4,227.8 102.4,226.9C103.3,226.1 104.6,224.8 105.8,224.5C107.0,224.2 108.5,224.6 109.6,225.0C110.6,225.5 111.8,226.2 112.1,227.1Z"/><path d="M190.5,173.7C190.4,174.7 190.0,175.7 189.5,176.3C188.9,177.0 188.0,177.2 187.3,177.6C186.5,178.1 185.9,178.9 185.0,179.2C184.1,179.5 182.4,180.0 181.7,179.5C181.0,179.0 180.8,177.3 180.5,176.3C180.2,175.4 179.8,174.6 179.8,173.7C179.8,172.9 180.2,171.9 180.6,171.2C181.0,170.4 181.7,169.8 182.4,169.3C183.2,168.7 184.1,168.2 185.0,168.1C185.9,168.1 186.9,168.6 187.7,169.0C188.6,169.5 189.6,170.0 190.1,170.8C190.6,171.6 190.6,172.8 190.5,173.7Z"/><path d="M181.6,195.4C181.6,196.2 181.7,197.2 181.3,197.8C180.9,198.5 180.1,199.0 179.4,199.3C178.7,199.6 177.9,199.7 177.1,199.6C176.4,199.6 175.6,199.5 175.0,199.2C174.4,198.8 173.9,198.1 173.5,197.5C173.1,196.9 172.6,196.1 172.6,195.4C172.6,194.7 173.1,194.0 173.4,193.3C173.8,192.6 174.1,191.6 174.7,191.2C175.3,190.8 176.4,190.6 177.1,190.7C177.8,190.9 178.4,191.8 179.0,192.2C179.6,192.6 180.4,192.8 180.8,193.3C181.2,193.8 181.5,194.7 181.6,195.4Z"/><path d="M262.8,224.6C263.1,225.4 262.6,226.7 261.7,227.4C260.8,228.1 258.7,228.2 257.4,228.5C256.1,228.9 255.2,229.4 254.1,229.4C253.0,229.4 251.6,229.0 250.6,228.6C249.6,228.2 248.7,227.6 248.1,226.9C247.4,226.3 246.7,225.4 246.6,224.6C246.5,223.8 246.9,222.9 247.4,222.1C247.9,221.2 248.4,220.0 249.5,219.6C250.6,219.2 252.9,219.6 254.1,219.9C255.3,220.2 255.9,220.8 256.8,221.2C257.8,221.6 258.8,221.8 259.8,222.3C260.8,222.9 262.5,223.7 262.8,224.6Z"/><path d="M250.3,245.3C250.1,246.0 250.1,246.5 249.8,247.2C249.6,247.8 249.3,248.8 248.8,249.2C248.2,249.7 247.3,249.9 246.5,249.9C245.8,249.9 244.8,249.8 244.2,249.4C243.5,249.0 242.9,248.2 242.6,247.5C242.3,246.9 242.4,246.0 242.4,245.3C242.4,244.5 242.3,243.6 242.6,243.0C243.0,242.5 244.0,242.3 244.6,242.0C245.3,241.7 245.8,241.4 246.5,241.2C247.3,241.0 248.5,240.3 249.3,240.6C250.0,240.9 250.6,242.1 250.8,242.8C251.0,243.6 250.4,244.6 250.3,245.3Z"/><path d="M312.6,175.6C311.7,176.9 312.3,178.1 311.5,179.0C310.7,179.9 309.2,180.1 307.7,180.8C306.3,181.4 304.8,182.6 303.0,182.7C301.2,182.8 298.2,182.4 296.8,181.4C295.3,180.4 294.7,178.2 294.3,176.7C294.0,175.2 294.3,173.8 294.8,172.5C295.2,171.2 295.8,169.8 296.9,169.0C298.0,168.1 299.8,167.8 301.3,167.6C302.8,167.4 303.7,167.8 305.7,167.6C307.7,167.3 311.4,165.5 313.2,166.2C315.0,166.8 316.6,169.7 316.5,171.2C316.4,172.8 313.4,174.3 312.6,175.6Z"/><path d="M394.6,184.5C394.6,186.0 397.8,186.8 397.7,188.0C397.6,189.2 395.9,190.9 394.2,191.9C392.6,192.9 390.1,193.7 388.1,194.0C386.0,194.3 383.9,194.1 381.8,193.8C379.7,193.6 377.1,193.3 375.7,192.4C374.2,191.4 372.9,189.7 373.2,188.3C373.4,186.9 376.1,185.3 377.3,184.1C378.5,182.8 379.0,181.7 380.4,180.8C381.7,179.9 383.2,179.5 385.3,178.6C387.5,177.7 391.2,175.3 393.3,175.4C395.4,175.5 397.9,177.7 398.1,179.2C398.3,180.7 394.7,183.0 394.6,184.5Z"/><path d="M447.8,194.5C447.9,195.7 447.9,197.7 446.2,198.0C444.5,198.3 439.8,196.8 437.6,196.4C435.4,196.0 434.7,196.0 433.0,195.7C431.2,195.4 429.3,195.3 427.1,194.5C424.8,193.8 420.8,192.3 419.5,191.1C418.3,189.8 418.3,187.8 419.5,186.9C420.7,186.1 424.7,186.3 426.5,186.0C428.3,185.6 428.9,184.9 430.4,184.7C432.0,184.6 433.8,184.8 435.8,185.2C437.8,185.5 440.6,186.0 442.2,186.9C443.8,187.8 444.6,189.3 445.5,190.6C446.5,191.8 447.7,193.3 447.8,194.5Z"/><path d="M460.6,192.4C460.7,193.8 462.1,195.1 461.6,196.3C461.2,197.6 459.5,198.9 457.9,199.9C456.2,200.8 454.1,201.6 451.9,202.1C449.6,202.5 446.5,203.0 444.4,202.5C442.3,202.0 439.7,200.4 439.3,199.0C438.9,197.6 441.4,195.3 442.2,194.0C443.0,192.7 443.9,192.4 444.0,191.0C444.1,189.5 441.8,186.5 442.8,185.3C443.9,184.0 447.9,183.3 450.2,183.3C452.6,183.2 455.3,184.0 457.1,184.8C459.0,185.7 460.7,186.9 461.3,188.2C461.8,189.4 460.5,191.0 460.6,192.4Z"/><path d="M362.8,217.9C362.2,218.8 361.6,219.4 360.9,220.2C360.3,221.1 360.2,222.0 359.0,222.7C357.9,223.4 356.0,224.4 354.1,224.5C352.2,224.7 349.3,224.3 347.8,223.7C346.2,223.1 345.1,221.8 344.9,220.8C344.7,219.8 346.5,218.8 346.6,217.9C346.7,216.9 345.3,216.0 345.6,215.1C345.9,214.2 347.0,213.0 348.4,212.5C349.9,212.1 352.1,212.4 354.1,212.3C356.1,212.3 358.6,211.7 360.3,212.1C362.0,212.5 364.0,213.7 364.4,214.6C364.8,215.6 363.4,216.9 362.8,217.9Z"/><path d="M351.3,242.3C351.2,243.3 348.9,244.4 347.8,245.2C346.7,246.0 345.7,246.5 344.6,247.0C343.5,247.4 342.3,247.9 341.1,247.9C339.9,248.0 338.3,247.8 337.2,247.3C336.2,246.9 335.6,245.9 334.8,245.1C334.0,244.3 332.9,243.4 332.5,242.3C332.2,241.3 331.9,239.6 332.7,238.8C333.5,238.0 335.9,237.7 337.3,237.4C338.7,237.1 340.0,237.1 341.1,237.3C342.3,237.4 343.0,237.8 344.2,238.1C345.5,238.4 347.4,238.5 348.6,239.2C349.8,239.9 351.5,241.3 351.3,242.3Z"/><path d="M361.6,191.7C361.2,192.4 360.3,192.9 359.4,193.3C358.6,193.6 357.6,193.8 356.7,193.7C355.8,193.7 354.9,193.3 353.9,193.0C352.9,192.6 351.7,192.3 350.8,191.6C349.8,190.9 348.4,189.7 348.2,188.7C348.0,187.8 348.7,186.7 349.4,186.0C350.1,185.4 351.4,185.2 352.4,185.0C353.3,184.9 354.1,185.3 355.1,185.1C356.0,185.0 356.8,184.2 357.9,184.4C358.9,184.5 360.8,185.3 361.5,186.1C362.2,186.9 362.0,188.2 362.1,189.1C362.1,190.1 362.1,191.0 361.6,191.7Z"/><path d="M382.1,205.7C382.5,206.5 382.4,208.0 382.1,208.8C381.8,209.6 380.6,209.8 380.2,210.6C379.8,211.3 380.2,212.5 379.7,213.2C379.2,213.9 378.1,214.4 377.3,214.5C376.4,214.5 375.3,214.0 374.5,213.4C373.7,212.9 372.9,212.0 372.6,211.2C372.2,210.4 372.4,209.3 372.4,208.4C372.4,207.5 372.4,206.6 372.7,205.9C373.1,205.2 373.8,204.6 374.5,204.2C375.2,203.8 376.0,203.6 376.8,203.6C377.7,203.5 378.6,203.5 379.5,203.9C380.4,204.2 381.6,204.9 382.1,205.7Z"/><path d="M446.4,244.3C446.2,245.0 445.2,245.5 444.5,245.9C443.8,246.4 443.2,246.8 442.3,247.0C441.5,247.2 440.4,247.5 439.5,247.3C438.6,247.1 437.7,246.3 437.0,245.6C436.4,244.9 435.6,244.0 435.5,243.1C435.4,242.3 436.1,241.3 436.6,240.7C437.1,240.1 438.1,240.0 438.7,239.5C439.3,239.0 439.5,238.2 440.2,237.8C441.0,237.3 442.5,236.6 443.4,236.8C444.2,237.1 445.2,238.4 445.6,239.2C446.0,240.1 445.8,241.0 445.9,241.8C446.1,242.7 446.6,243.6 446.4,244.3Z"/><path d="M333.8,157.4C334.2,158.0 334.4,158.7 334.3,159.4C334.2,160.2 333.9,161.1 333.2,161.7C332.5,162.3 331.1,162.7 330.2,162.9C329.3,163.1 328.5,162.9 327.8,162.7C327.1,162.6 326.7,162.4 325.9,162.1C325.1,161.9 323.5,161.9 323.0,161.4C322.5,160.9 322.4,159.8 322.8,159.1C323.2,158.3 324.7,157.7 325.4,157.1C326.2,156.5 326.7,155.8 327.5,155.5C328.3,155.2 329.4,155.2 330.1,155.3C330.9,155.4 331.6,155.7 332.2,156.1C332.8,156.4 333.5,156.9 333.8,157.4Z"/><path d="M473.5,196.4C473.4,197.1 472.9,197.8 472.5,198.4C472.0,199.0 471.5,199.6 470.9,199.9C470.3,200.3 469.5,200.7 468.7,200.7C468.0,200.8 467.1,200.7 466.4,200.3C465.7,200.0 465.0,199.3 464.6,198.7C464.2,198.0 464.0,197.1 464.0,196.4C464.0,195.6 464.2,194.7 464.6,194.1C465.1,193.5 466.0,193.2 466.7,192.9C467.3,192.6 468.0,192.5 468.7,192.4C469.5,192.3 470.5,192.0 471.2,192.3C472.0,192.5 472.8,193.3 473.1,194.0C473.5,194.7 473.6,195.6 473.5,196.4Z"/><path d="M479.5,200.0C479.5,200.8 478.9,201.6 478.4,202.2C478.0,202.8 477.4,203.3 476.8,203.6C476.2,204.0 475.4,204.3 474.7,204.4C474.0,204.4 473.1,204.2 472.5,203.8C471.9,203.4 471.4,202.8 471.0,202.2C470.6,201.5 470.1,200.8 470.1,200.0C470.0,199.3 470.1,198.2 470.5,197.6C471.0,197.0 472.0,196.8 472.7,196.5C473.4,196.2 474.0,196.0 474.7,196.0C475.4,195.9 476.2,196.0 476.9,196.2C477.5,196.5 478.2,197.1 478.7,197.7C479.1,198.4 479.6,199.3 479.5,200.0Z"/><path d="M361.1,163.0C361.0,163.7 361.1,164.5 360.8,165.1C360.5,165.7 359.9,166.3 359.3,166.8C358.7,167.2 357.9,167.7 357.2,167.7C356.4,167.6 355.6,167.1 355.1,166.6C354.5,166.2 354.2,165.5 353.9,164.9C353.6,164.3 353.3,163.7 353.2,163.0C353.2,162.4 353.3,161.6 353.5,160.9C353.7,160.2 354.0,159.0 354.6,158.7C355.3,158.4 356.4,158.9 357.2,159.1C357.9,159.2 358.5,159.4 359.1,159.7C359.7,159.9 360.6,160.3 361.0,160.8C361.3,161.4 361.1,162.3 361.1,163.0Z"/><path d="M62.0,454.4C60.8,455.7 54.8,456.3 52.5,457.2C50.2,458.0 50.1,459.1 48.2,459.7C46.3,460.3 43.7,460.8 41.1,460.8C38.5,460.8 35.2,460.6 32.6,460.0C30.0,459.3 27.0,458.0 25.6,456.8C24.2,455.5 24.2,453.8 24.2,452.4C24.3,451.0 24.2,449.1 25.9,448.2C27.7,447.3 32.2,447.2 34.8,446.9C37.5,446.7 39.4,446.7 41.9,446.8C44.3,446.8 46.6,446.8 49.5,447.2C52.5,447.7 57.7,448.3 59.7,449.5C61.8,450.6 63.2,453.1 62.0,454.4Z"/><path d="M79.1,457.6C78.9,458.8 78.3,459.7 77.8,460.6C77.3,461.5 76.7,462.4 75.9,463.0C75.1,463.5 74.2,463.6 73.0,464.0C71.9,464.3 70.2,465.5 69.0,465.1C67.9,464.8 66.3,463.2 66.1,462.0C66.0,460.7 67.5,458.8 67.9,457.6C68.3,456.4 68.1,455.8 68.4,454.8C68.8,453.9 69.2,452.6 69.9,451.9C70.7,451.2 71.9,450.7 73.0,450.5C74.1,450.3 75.7,450.2 76.7,450.7C77.7,451.3 78.8,452.6 79.2,453.8C79.6,454.9 79.3,456.5 79.1,457.6Z"/><path d="M196.4,489.2C196.5,490.1 196.5,491.4 196.1,492.2C195.7,493.0 194.8,493.4 194.1,493.8C193.4,494.2 192.6,494.7 191.9,494.6C191.2,494.6 190.3,494.1 189.8,493.6C189.2,493.0 189.1,492.1 188.6,491.4C188.2,490.6 187.3,490.0 187.2,489.2C187.0,488.3 187.3,487.0 187.7,486.1C188.1,485.3 188.8,484.3 189.5,484.0C190.2,483.7 191.2,484.0 191.9,484.2C192.6,484.4 193.2,484.9 193.8,485.3C194.4,485.6 195.3,485.8 195.7,486.5C196.1,487.1 196.3,488.2 196.4,489.2Z"/><path d="M279.3,464.4C279.1,465.4 277.9,466.2 277.2,466.9C276.6,467.6 276.1,468.0 275.4,468.6C274.7,469.1 274.1,470.0 273.2,470.3C272.3,470.6 270.9,471.0 270.0,470.6C269.1,470.2 268.1,468.8 267.9,467.8C267.7,466.8 268.5,465.4 268.7,464.4C268.8,463.4 268.5,462.5 268.8,461.7C269.1,460.8 269.7,459.7 270.4,459.2C271.2,458.7 272.3,458.7 273.2,458.7C274.1,458.7 275.0,458.9 275.9,459.3C276.7,459.7 277.8,460.3 278.4,461.1C278.9,462.0 279.5,463.5 279.3,464.4Z"/><path d="M273.9,465.5C273.9,466.2 273.4,467.1 272.9,467.7C272.4,468.2 271.7,468.4 271.1,468.8C270.4,469.3 269.8,470.1 269.1,470.2C268.4,470.2 267.5,469.6 267.0,469.1C266.4,468.7 266.2,468.0 265.7,467.4C265.2,466.8 264.1,466.2 264.0,465.5C263.9,464.8 264.5,463.7 265.0,463.1C265.5,462.5 266.4,462.2 267.0,461.9C267.7,461.7 268.4,461.5 269.1,461.5C269.8,461.5 270.5,461.5 271.2,461.8C271.9,462.1 272.7,462.5 273.2,463.1C273.6,463.7 274.0,464.7 273.9,465.5Z"/><path d="M258.8,469.6C259.0,470.3 259.5,471.4 259.3,472.2C259.0,472.9 257.9,473.8 257.1,474.0C256.2,474.2 255.0,473.6 254.2,473.4C253.3,473.3 252.5,473.5 251.8,473.2C251.2,472.9 250.4,472.3 250.1,471.7C249.7,471.1 249.9,470.3 249.9,469.6C249.8,468.8 249.3,468.0 249.6,467.2C249.8,466.5 250.5,465.5 251.3,465.1C252.0,464.8 253.3,464.9 254.2,465.0C255.0,465.2 255.7,465.8 256.3,466.2C256.9,466.7 257.4,467.1 257.8,467.7C258.2,468.2 258.5,468.8 258.8,469.6Z"/></g>
<g fill="#0a48f0"><path d="M306.0,34.7C306.0,35.3 305.7,35.8 305.6,36.6C305.4,37.4 305.7,39.0 305.0,39.6C304.4,40.1 302.5,40.0 301.6,39.7C300.7,39.4 300.3,38.1 299.6,37.6C298.9,37.1 297.8,37.2 297.3,36.7C296.8,36.3 296.5,35.4 296.5,34.7C296.5,34.0 296.9,33.3 297.3,32.7C297.7,32.0 298.1,31.3 298.8,30.7C299.5,30.2 300.7,29.6 301.6,29.6C302.5,29.7 303.6,30.4 304.3,30.9C304.9,31.4 305.2,32.2 305.5,32.8C305.8,33.5 306.0,34.1 306.0,34.7Z"/><path d="M304.4,43.0C304.5,43.4 304.5,44.0 304.3,44.4C304.1,44.8 303.5,45.4 303.0,45.5C302.5,45.6 301.8,45.1 301.3,45.0C300.8,44.9 300.6,44.9 300.1,44.8C299.6,44.7 298.7,44.7 298.4,44.4C298.1,44.1 298.2,43.5 298.2,43.0C298.2,42.5 298.0,41.9 298.3,41.6C298.6,41.2 299.4,41.1 299.9,40.9C300.4,40.8 300.8,40.8 301.3,40.7C301.8,40.7 302.4,40.6 302.8,40.8C303.2,41.0 303.4,41.5 303.6,41.9C303.9,42.2 304.2,42.6 304.4,43.0Z"/><path d="M315.5,42.4C315.8,42.9 316.1,43.9 315.7,44.3C315.4,44.6 314.0,44.6 313.2,44.5C312.3,44.5 311.4,44.3 310.8,44.0C310.1,43.7 309.7,43.2 309.2,42.9C308.8,42.5 308.3,42.1 308.0,41.7C307.7,41.2 307.4,40.7 307.4,40.2C307.4,39.7 307.6,39.2 308.1,38.8C308.5,38.5 309.2,38.3 309.9,38.2C310.6,38.1 311.6,38.0 312.3,38.2C313.0,38.4 314.0,39.1 314.2,39.5C314.4,40.0 313.6,40.5 313.8,41.0C314.0,41.5 315.1,41.8 315.5,42.4Z"/><path d="M323.7,41.0C323.7,41.3 323.5,41.6 323.3,41.8C323.2,42.0 323.0,42.2 322.7,42.3C322.5,42.3 322.2,42.2 322.0,42.2C321.8,42.2 321.5,42.3 321.3,42.2C321.1,42.1 321.0,41.9 320.8,41.7C320.6,41.5 320.1,41.3 320.0,41.0C320.0,40.7 320.3,40.3 320.5,40.1C320.7,39.9 321.1,39.9 321.4,39.9C321.6,39.8 321.8,39.8 322.0,39.8C322.2,39.8 322.3,40.0 322.6,40.0C322.9,40.0 323.5,39.9 323.7,40.0C323.9,40.2 323.8,40.7 323.7,41.0Z"/><path d="M101.7,50.0C101.7,50.6 101.0,51.5 100.7,52.0C100.4,52.5 100.2,52.9 99.9,53.2C99.6,53.4 99.3,53.7 99.0,53.6C98.7,53.6 98.6,52.9 98.2,52.7C97.8,52.6 97.0,53.1 96.7,52.6C96.5,52.1 96.8,50.7 96.9,50.0C97.0,49.3 97.3,48.9 97.5,48.2C97.6,47.6 97.7,46.6 97.9,46.2C98.2,45.9 98.7,45.8 99.0,46.0C99.3,46.1 99.5,46.8 99.8,47.2C100.1,47.6 100.2,47.7 100.6,48.2C100.9,48.7 101.7,49.4 101.7,50.0Z"/><path d="M345.7,33.6C345.6,34.2 346.7,34.7 346.6,35.3C346.5,35.9 346.0,36.7 345.2,37.3C344.3,37.8 342.7,38.5 341.4,38.6C340.1,38.7 338.8,38.2 337.6,37.8C336.4,37.5 335.2,37.2 334.5,36.7C333.8,36.2 333.4,35.3 333.6,34.6C333.9,34.0 335.2,33.4 335.9,32.8C336.6,32.3 336.9,31.8 337.7,31.3C338.4,30.8 339.3,30.2 340.6,29.8C342.0,29.4 344.6,28.6 345.7,28.9C346.9,29.1 347.5,30.5 347.5,31.3C347.5,32.1 345.9,32.9 345.7,33.6Z"/><path d="M371.1,39.5C371.2,39.9 370.6,40.3 370.3,40.7C370.0,41.2 370.3,42.0 369.1,42.2C367.9,42.5 364.6,42.3 363.0,42.2C361.4,42.0 360.8,41.6 359.3,41.4C357.7,41.2 354.8,41.2 353.9,40.9C353.0,40.6 353.8,39.9 354.0,39.5C354.3,39.1 354.7,38.6 355.5,38.3C356.2,37.9 357.3,37.6 358.5,37.3C359.8,37.0 361.4,36.6 363.0,36.6C364.6,36.6 367.1,36.8 368.3,37.1C369.4,37.3 369.5,37.9 370.0,38.3C370.5,38.7 371.1,39.1 371.1,39.5Z"/><path d="M443.0,42.2C443.2,43.2 440.9,45.0 438.9,46.0C437.0,46.9 433.4,47.3 431.3,47.8C429.2,48.4 428.4,49.0 426.4,49.5C424.4,50.0 422.1,50.6 419.5,50.8C416.9,51.0 412.0,51.3 410.8,50.6C409.5,49.9 411.2,47.8 411.8,46.6C412.4,45.4 413.2,44.4 414.2,43.4C415.3,42.3 416.3,41.0 418.1,40.4C419.9,39.8 422.8,39.9 425.0,39.6C427.2,39.4 429.4,38.7 431.5,38.7C433.7,38.7 435.9,39.1 437.8,39.7C439.8,40.3 442.8,41.1 443.0,42.2Z"/><path d="M471.2,41.5C471.5,42.7 471.1,44.6 469.8,45.2C468.5,45.8 465.1,45.0 463.4,45.0C461.6,45.0 460.5,45.3 459.0,45.1C457.5,44.9 455.6,44.7 454.3,44.0C453.0,43.4 452.2,42.3 451.1,41.2C450.0,40.0 447.4,38.3 447.5,37.3C447.7,36.3 450.7,35.4 452.2,34.9C453.8,34.4 455.3,34.6 456.8,34.2C458.3,33.8 459.7,32.4 461.2,32.6C462.7,32.7 464.5,34.1 465.6,35.0C466.7,35.9 466.9,36.9 467.8,38.0C468.8,39.1 470.9,40.3 471.2,41.5Z"/><path d="M489.0,65.0C488.5,66.3 484.5,67.8 482.3,68.6C480.0,69.4 477.3,68.8 475.3,69.7C473.2,70.7 472.5,73.8 470.0,74.4C467.5,74.9 462.6,74.1 460.5,73.1C458.5,72.2 458.9,69.9 457.7,68.6C456.5,67.2 453.5,66.3 453.2,65.0C453.0,63.7 454.5,62.0 456.1,61.0C457.7,59.9 460.4,59.3 462.7,58.7C465.0,58.0 467.4,57.5 470.0,57.3C472.6,57.2 475.6,57.4 478.1,58.0C480.6,58.6 483.3,59.5 485.1,60.7C486.9,61.8 489.5,63.7 489.0,65.0Z"/><path d="M542.8,17.0C542.0,17.8 540.1,17.9 539.5,18.5C538.9,19.2 539.8,20.2 539.2,21.0C538.6,21.7 537.2,22.7 536.0,22.9C534.8,23.1 532.9,22.7 531.8,22.2C530.7,21.6 529.5,20.6 529.3,19.7C529.1,18.9 530.4,17.8 530.6,17.0C530.8,16.2 530.2,15.5 530.5,14.7C530.8,14.0 531.5,13.0 532.4,12.6C533.3,12.2 534.7,12.5 536.0,12.4C537.3,12.4 538.6,11.9 539.9,12.2C541.3,12.4 543.5,13.0 543.9,13.8C544.4,14.6 543.5,16.2 542.8,17.0Z"/><path d="M546.5,39.0C546.3,39.7 545.8,39.9 545.6,40.5C545.3,41.0 545.4,41.7 545.1,42.1C544.9,42.5 544.4,42.8 544.0,43.0C543.6,43.1 542.9,43.4 542.5,43.1C542.2,42.8 542.0,41.7 541.8,41.0C541.6,40.3 541.3,39.7 541.3,39.0C541.3,38.3 541.3,37.2 541.6,36.8C541.9,36.4 542.8,36.9 543.2,36.7C543.6,36.5 543.6,35.9 544.0,35.6C544.4,35.3 545.0,34.8 545.5,34.9C546.0,35.0 546.7,35.7 546.9,36.3C547.0,37.0 546.7,38.3 546.5,39.0Z"/><path d="M504.3,50.9C503.8,51.4 503.0,51.5 502.4,52.0C501.8,52.4 501.5,53.3 500.7,53.4C499.9,53.6 498.4,53.4 497.5,53.0C496.7,52.6 496.3,51.6 495.4,51.0C494.6,50.3 492.8,49.8 492.4,49.1C492.1,48.4 493.0,47.6 493.4,47.0C493.8,46.3 494.0,45.6 494.7,45.3C495.4,45.0 496.7,45.2 497.6,45.3C498.5,45.5 499.0,45.9 500.1,46.0C501.2,46.1 503.3,45.7 504.1,46.1C505.0,46.6 505.3,48.1 505.3,48.9C505.3,49.7 504.8,50.4 504.3,50.9Z"/><path d="M520.6,53.7C520.7,54.1 521.0,54.4 520.9,54.7C520.7,55.1 520.1,55.6 519.5,56.0C519.0,56.3 518.2,56.5 517.6,56.7C517.0,56.8 516.5,56.8 515.9,56.9C515.3,57.0 514.5,57.3 513.9,57.2C513.3,57.2 512.5,57.0 512.3,56.7C512.2,56.4 512.8,55.7 513.2,55.3C513.6,54.8 514.2,54.4 514.8,54.2C515.3,53.9 515.9,53.9 516.5,53.6C517.1,53.3 517.7,52.8 518.3,52.6C519.0,52.4 520.1,52.3 520.4,52.5C520.8,52.7 520.5,53.3 520.6,53.7Z"/><path d="M236.3,79.1C236.5,79.9 237.5,80.7 237.3,81.5C237.1,82.3 236.1,83.3 235.2,83.8C234.2,84.2 232.7,84.3 231.7,84.2C230.8,84.1 230.3,83.4 229.4,83.2C228.4,83.1 227.0,83.5 226.2,83.2C225.4,82.8 224.6,81.9 224.4,81.2C224.2,80.4 224.5,79.4 225.0,78.6C225.4,77.8 226.1,76.7 227.0,76.3C227.9,76.0 229.4,76.7 230.4,76.6C231.4,76.5 232.3,75.6 233.3,75.7C234.2,75.7 235.5,76.2 236.0,76.7C236.5,77.3 236.0,78.3 236.3,79.1Z"/><path d="M309.5,92.0C310.4,92.9 312.0,94.4 311.6,95.4C311.2,96.4 308.7,97.8 306.8,98.0C304.9,98.3 301.8,97.4 300.0,97.0C298.2,96.7 297.3,96.3 295.8,95.9C294.3,95.5 291.7,95.4 291.1,94.7C290.5,94.1 292.3,93.0 292.0,92.0C291.7,91.0 289.0,89.8 289.2,88.8C289.4,87.8 291.3,86.2 293.1,85.9C294.9,85.5 298.0,86.3 300.0,86.6C302.0,86.9 303.8,87.0 304.9,87.6C305.9,88.1 305.3,89.3 306.1,90.1C306.9,90.8 308.5,91.1 309.5,92.0Z"/><path d="M323.4,88.5C323.1,89.2 322.0,89.4 321.6,89.9C321.2,90.4 321.5,91.3 321.2,91.7C320.9,92.1 320.3,92.3 319.8,92.4C319.3,92.5 318.7,92.4 318.2,92.1C317.8,91.8 317.4,91.2 317.1,90.6C316.8,89.9 316.5,89.2 316.4,88.5C316.4,87.8 316.5,86.7 316.9,86.2C317.2,85.8 318.1,85.9 318.6,85.7C319.1,85.6 319.4,85.3 319.8,85.3C320.2,85.2 320.6,85.3 321.2,85.4C321.7,85.5 323.0,85.2 323.4,85.8C323.7,86.3 323.7,87.8 323.4,88.5Z"/><path d="M274.2,138.5C274.0,139.5 274.3,140.4 273.6,141.2C273.0,142.0 271.7,142.8 270.4,143.3C269.1,143.8 267.5,144.0 265.8,144.2C264.1,144.4 261.8,144.7 260.1,144.4C258.4,144.0 256.4,143.0 255.6,142.0C254.8,141.0 254.8,139.5 255.3,138.5C255.7,137.5 257.0,136.4 258.3,135.9C259.5,135.3 261.5,135.8 262.8,135.2C264.0,134.6 264.1,132.8 265.8,132.1C267.5,131.5 271.5,130.7 273.0,131.2C274.5,131.8 274.5,134.2 274.7,135.4C274.9,136.6 274.4,137.5 274.2,138.5Z"/><path d="M120.9,141.3C120.9,142.0 119.8,142.8 119.3,143.5C118.8,144.3 118.7,145.2 117.9,145.6C117.1,146.1 115.6,146.5 114.7,146.4C113.8,146.3 113.4,145.4 112.4,145.2C111.5,145.1 110.2,145.6 109.2,145.4C108.2,145.2 106.9,144.5 106.6,143.8C106.3,143.1 106.9,141.9 107.6,141.3C108.3,140.6 109.9,140.3 110.9,139.9C111.8,139.6 112.5,139.4 113.4,139.2C114.3,139.0 115.3,138.7 116.2,138.8C117.1,138.8 118.1,139.1 118.9,139.6C119.6,140.0 120.8,140.6 120.9,141.3Z"/><path d="M92.4,146.0C92.3,146.6 92.6,147.0 92.5,147.7C92.4,148.4 92.4,149.8 91.9,150.2C91.4,150.6 90.2,150.4 89.5,150.2C88.8,150.1 88.2,149.7 87.6,149.3C87.0,149.0 86.2,148.6 85.9,148.1C85.5,147.5 85.3,146.6 85.4,146.0C85.5,145.4 86.2,144.8 86.6,144.3C87.0,143.8 87.3,143.5 87.7,142.9C88.2,142.4 88.8,141.5 89.5,141.3C90.2,141.1 91.3,141.4 91.9,141.9C92.5,142.3 92.9,143.3 93.0,144.0C93.1,144.7 92.5,145.4 92.4,146.0Z"/><path d="M238.8,144.0C238.8,144.4 240.0,144.8 240.1,145.2C240.1,145.5 239.4,146.0 238.9,146.2C238.4,146.3 237.5,146.3 237.0,146.2C236.5,146.1 236.1,145.7 235.8,145.4C235.4,145.2 235.1,145.1 234.8,144.8C234.6,144.6 234.2,144.3 234.0,144.0C233.9,143.7 233.9,143.2 234.1,142.9C234.3,142.6 234.8,142.1 235.3,142.0C235.7,141.9 236.4,142.4 237.0,142.4C237.6,142.4 238.4,141.8 238.8,141.9C239.2,142.0 239.5,142.7 239.5,143.0C239.5,143.4 238.7,143.6 238.8,144.0Z"/><path d="M272.8,111.8C272.7,112.3 272.8,112.7 272.7,113.3C272.7,113.9 272.6,115.1 272.3,115.3C272.1,115.4 271.3,114.4 271.0,114.1C270.7,113.9 270.6,113.9 270.3,113.7C270.0,113.6 269.5,113.7 269.2,113.3C269.0,113.0 268.7,112.4 268.6,111.8C268.6,111.2 268.7,110.4 268.9,110.0C269.1,109.6 269.8,109.6 270.1,109.5C270.5,109.4 270.7,109.5 271.0,109.4C271.3,109.4 271.6,109.2 272.0,109.3C272.3,109.4 272.9,109.6 273.1,110.0C273.2,110.4 272.8,111.3 272.8,111.8Z"/><path d="M287.7,117.8C287.9,118.1 288.1,118.8 287.8,119.1C287.5,119.3 286.4,119.3 285.9,119.4C285.3,119.5 285.0,119.9 284.5,119.9C284.0,119.9 283.4,119.7 283.0,119.5C282.6,119.3 282.5,118.9 282.3,118.7C282.1,118.4 281.9,118.1 281.8,117.8C281.7,117.5 281.5,117.0 281.7,116.7C281.8,116.4 282.3,115.9 282.7,115.8C283.2,115.6 284.0,115.6 284.5,115.7C285.0,115.7 285.6,115.9 285.9,116.2C286.2,116.4 286.0,116.8 286.3,117.1C286.5,117.4 287.4,117.5 287.7,117.8Z"/><path d="M384.1,123.2C385.3,124.1 388.1,125.9 387.7,127.0C387.2,128.1 383.7,129.2 381.4,129.7C379.2,130.2 376.4,129.9 374.3,129.7C372.2,129.6 370.5,129.4 368.9,128.9C367.2,128.5 365.5,127.9 364.6,127.1C363.7,126.3 363.7,125.3 363.4,124.3C363.1,123.2 362.2,122.0 362.7,120.9C363.3,119.9 365.0,118.6 366.8,117.9C368.6,117.2 371.4,116.7 373.6,116.7C375.8,116.7 378.8,116.9 380.0,117.7C381.1,118.4 379.8,120.4 380.5,121.3C381.1,122.2 382.9,122.2 384.1,123.2Z"/><path d="M439.0,123.4C438.8,124.0 439.0,124.9 438.4,125.2C437.9,125.5 436.8,125.3 435.9,125.1C434.9,124.9 433.6,124.6 432.8,123.9C432.1,123.3 431.8,122.2 431.3,121.4C430.8,120.6 429.8,119.8 429.6,119.1C429.4,118.4 429.6,117.5 430.1,117.2C430.5,116.8 431.8,117.2 432.5,117.1C433.2,117.0 433.6,116.6 434.4,116.6C435.2,116.7 436.4,117.0 437.3,117.5C438.3,118.0 440.0,119.1 440.3,119.8C440.7,120.6 439.7,121.4 439.5,122.0C439.3,122.6 439.2,122.9 439.0,123.4Z"/><path d="M364.5,150.1C364.5,151.0 362.5,151.9 361.1,152.4C359.7,152.9 357.7,153.2 356.1,153.2C354.5,153.3 353.0,152.8 351.4,152.7C349.7,152.6 348.4,152.9 346.1,152.7C343.8,152.5 338.8,152.1 337.7,151.3C336.6,150.5 338.6,148.8 339.6,147.9C340.5,147.1 341.8,146.3 343.3,146.0C344.7,145.6 346.8,145.8 348.3,145.6C349.7,145.3 350.3,144.6 352.1,144.4C353.9,144.2 357.3,143.9 358.8,144.4C360.4,144.9 360.5,146.4 361.5,147.3C362.4,148.3 364.6,149.3 364.5,150.1Z"/><path d="M427.6,145.6C427.5,146.1 426.2,146.3 425.4,146.4C424.6,146.6 423.5,146.3 422.6,146.3C421.6,146.3 420.7,146.7 419.6,146.4C418.5,146.2 416.7,145.4 416.1,144.8C415.4,144.2 415.6,143.4 415.5,142.7C415.5,142.1 415.3,141.6 415.5,141.2C415.7,140.7 416.2,140.4 416.6,140.1C417.1,139.7 417.5,139.1 418.4,139.0C419.4,138.9 421.2,139.0 422.1,139.5C423.1,139.9 423.7,141.1 424.3,141.7C424.9,142.4 425.3,142.8 425.9,143.4C426.4,144.1 427.7,145.1 427.6,145.6Z"/><path d="M521.8,148.9C521.9,149.4 522.0,149.9 521.9,150.4C521.8,151.0 521.7,151.8 521.2,152.3C520.7,152.8 519.6,153.2 518.9,153.3C518.1,153.4 517.2,153.0 516.6,152.8C515.9,152.5 515.2,152.3 514.7,151.9C514.3,151.4 513.9,150.9 513.8,150.3C513.6,149.7 513.6,148.9 513.9,148.4C514.3,147.9 515.3,147.7 516.0,147.3C516.6,146.9 516.8,146.4 517.6,146.0C518.3,145.7 519.7,145.0 520.4,145.2C521.1,145.4 521.4,146.6 521.6,147.2C521.9,147.8 521.8,148.3 521.8,148.9Z"/><path d="M86.7,194.0C86.9,194.8 86.4,195.9 85.9,196.5C85.4,197.2 84.4,197.8 83.5,198.0C82.7,198.2 81.8,197.9 81.0,197.8C80.2,197.7 79.5,197.8 78.7,197.6C77.9,197.4 76.5,197.1 76.1,196.5C75.7,195.9 76.3,194.8 76.4,194.0C76.5,193.2 76.3,192.4 76.6,191.7C76.8,190.9 77.3,189.8 78.1,189.5C78.8,189.1 80.2,189.5 81.0,189.7C81.8,189.9 82.4,190.4 83.0,190.8C83.7,191.2 84.3,191.4 85.0,191.9C85.6,192.5 86.6,193.2 86.7,194.0Z"/><path d="M110.3,228.3C110.4,229.1 109.4,230.3 109.2,231.2C109.0,232.0 109.3,232.5 109.1,233.3C108.8,234.1 108.4,235.0 107.7,235.8C106.9,236.6 105.7,237.9 104.7,238.2C103.7,238.5 102.2,238.0 101.7,237.4C101.1,236.8 101.8,235.2 101.4,234.5C101.0,233.8 99.3,233.8 99.2,233.2C99.1,232.5 100.2,231.4 100.7,230.6C101.3,229.9 101.8,229.2 102.5,228.4C103.3,227.7 104.3,226.6 105.3,226.3C106.2,226.1 107.4,226.4 108.3,226.7C109.1,227.0 110.1,227.6 110.3,228.3Z"/><path d="M190.1,174.0C190.0,174.7 189.7,175.4 189.3,175.9C188.8,176.3 188.1,176.4 187.6,176.7C187.0,177.1 186.7,177.8 186.0,178.1C185.3,178.4 184.0,178.8 183.4,178.5C182.9,178.1 182.9,176.6 182.7,175.9C182.5,175.2 182.2,174.6 182.2,174.0C182.2,173.4 182.5,172.7 182.8,172.1C183.1,171.6 183.6,171.1 184.1,170.7C184.6,170.3 185.3,169.8 186.0,169.8C186.7,169.8 187.4,170.2 188.0,170.5C188.7,170.8 189.5,171.2 189.8,171.8C190.2,172.4 190.2,173.3 190.1,174.0Z"/><path d="M178.0,195.0C178.1,195.4 178.2,195.9 178.1,196.2C177.9,196.5 177.4,196.7 177.1,196.8C176.7,196.9 176.3,196.9 176.0,196.8C175.7,196.8 175.3,196.8 175.0,196.7C174.8,196.5 174.7,196.2 174.5,195.9C174.3,195.6 173.9,195.3 173.9,195.0C173.9,194.7 174.2,194.4 174.4,194.1C174.5,193.7 174.5,193.1 174.8,192.9C175.1,192.7 175.7,192.6 176.0,192.7C176.3,192.9 176.4,193.6 176.7,193.8C177.0,194.0 177.4,193.9 177.6,194.1C177.8,194.3 178.0,194.6 178.0,195.0Z"/><path d="M261.2,225.0C261.5,225.4 261.2,226.3 260.5,226.6C259.8,226.9 258.1,226.7 257.2,226.9C256.2,227.0 255.7,227.4 255.0,227.4C254.3,227.4 253.4,227.2 252.7,227.0C252.1,226.8 251.5,226.5 251.0,226.1C250.6,225.8 250.1,225.4 250.0,225.0C249.8,224.6 250.1,224.1 250.4,223.7C250.7,223.2 250.9,222.3 251.7,222.1C252.4,222.0 254.2,222.4 255.0,222.7C255.8,222.9 256.0,223.4 256.6,223.6C257.2,223.8 257.9,223.7 258.7,223.9C259.5,224.2 260.9,224.6 261.2,225.0Z"/><path d="M248.9,246.0C248.7,246.3 248.8,246.4 248.7,246.7C248.7,247.0 248.8,247.6 248.6,247.8C248.3,248.1 247.9,248.1 247.5,248.2C247.1,248.2 246.6,248.2 246.3,248.0C246.0,247.8 245.8,247.4 245.7,247.0C245.6,246.7 245.7,246.3 245.7,246.0C245.7,245.7 245.5,245.2 245.7,245.0C245.9,244.7 246.5,244.9 246.8,244.7C247.1,244.6 247.1,244.5 247.5,244.3C247.9,244.1 248.6,243.4 249.0,243.4C249.3,243.5 249.6,244.3 249.6,244.8C249.6,245.2 249.0,245.7 248.9,246.0Z"/><path d="M310.6,175.9C309.9,177.0 310.5,178.0 309.8,178.7C309.1,179.3 307.8,179.5 306.6,180.1C305.4,180.6 304.1,181.7 302.5,181.8C301.0,181.9 298.3,181.6 297.0,180.8C295.8,179.9 295.3,178.0 295.0,176.8C294.7,175.5 295.0,174.3 295.4,173.2C295.8,172.1 296.2,171.0 297.2,170.4C298.1,169.7 299.8,169.5 301.0,169.4C302.3,169.2 303.0,169.6 304.7,169.4C306.5,169.1 309.8,167.4 311.4,167.9C313.0,168.4 314.4,170.9 314.3,172.3C314.2,173.6 311.4,174.8 310.6,175.9Z"/><path d="M393.4,184.8C393.3,186.0 396.3,186.6 396.3,187.6C396.2,188.6 394.6,190.1 393.2,190.9C391.8,191.8 389.5,192.4 387.7,192.7C385.8,193.0 384.0,192.8 382.1,192.6C380.3,192.4 378.0,192.2 376.7,191.5C375.4,190.7 374.2,189.3 374.5,188.1C374.8,187.0 377.3,185.7 378.4,184.6C379.4,183.6 379.9,182.7 381.0,181.9C382.2,181.1 383.5,180.8 385.4,180.0C387.4,179.2 390.7,176.9 392.6,177.0C394.5,177.0 396.6,179.0 396.8,180.3C396.9,181.6 393.5,183.6 393.4,184.8Z"/><path d="M447.1,193.7C447.2,194.7 447.3,196.4 445.8,196.6C444.3,196.7 440.0,195.2 438.1,194.8C436.1,194.3 435.6,194.3 434.1,194.0C432.5,193.8 430.8,193.8 428.8,193.2C426.8,192.6 423.0,191.4 421.9,190.3C420.7,189.3 420.7,187.6 421.8,187.0C422.8,186.3 426.5,186.7 428.1,186.5C429.8,186.3 430.1,185.7 431.5,185.7C432.8,185.6 434.4,185.8 436.2,186.1C437.9,186.4 440.4,186.8 441.9,187.6C443.3,188.3 444.0,189.5 444.9,190.6C445.8,191.6 446.9,192.7 447.1,193.7Z"/><path d="M460.3,192.3C460.3,193.4 461.7,194.5 461.3,195.5C460.9,196.6 459.4,197.7 458.0,198.5C456.5,199.3 454.7,200.0 452.6,200.4C450.6,200.8 447.8,201.3 445.9,200.9C444.1,200.5 441.7,199.1 441.4,197.9C441.2,196.7 443.5,194.8 444.3,193.7C445.0,192.6 445.8,192.5 445.9,191.3C445.9,190.0 443.7,187.4 444.6,186.3C445.5,185.1 449.1,184.6 451.3,184.5C453.4,184.5 455.8,185.2 457.4,185.9C459.0,186.6 460.5,187.7 461.0,188.8C461.5,189.8 460.2,191.1 460.3,192.3Z"/><path d="M362.4,218.0C361.9,218.7 361.3,219.1 360.8,219.7C360.3,220.3 360.2,221.1 359.3,221.6C358.3,222.2 356.6,223.0 355.0,223.2C353.4,223.4 350.8,223.1 349.5,222.6C348.1,222.1 347.2,221.0 347.1,220.2C346.9,219.5 348.6,218.7 348.7,218.0C348.8,217.3 347.5,216.6 347.7,215.9C347.9,215.2 348.9,214.2 350.1,213.9C351.3,213.5 353.3,213.9 355.0,213.8C356.7,213.8 358.9,213.2 360.4,213.5C362.0,213.8 363.7,214.7 364.0,215.5C364.4,216.2 363.0,217.3 362.4,218.0Z"/><path d="M350.5,242.7C350.3,243.5 348.2,244.3 347.3,244.9C346.3,245.5 345.6,245.8 344.7,246.2C343.7,246.5 342.8,246.9 341.8,246.9C340.8,247.0 339.5,246.9 338.6,246.5C337.8,246.1 337.3,245.4 336.6,244.8C336.0,244.1 335.0,243.5 334.7,242.7C334.3,241.9 334.0,240.5 334.7,239.9C335.4,239.3 337.5,239.1 338.7,239.0C339.9,238.8 340.9,238.8 341.8,239.0C342.7,239.1 343.2,239.4 344.3,239.7C345.3,239.9 347.0,239.7 348.0,240.2C349.0,240.7 350.6,241.9 350.5,242.7Z"/><path d="M359.2,190.7C358.9,191.1 358.1,191.4 357.5,191.7C356.9,191.9 356.1,191.9 355.4,191.9C354.7,191.8 354.1,191.5 353.3,191.2C352.5,191.0 351.6,190.8 350.8,190.3C350.0,189.8 348.7,188.8 348.5,188.1C348.3,187.4 349.0,186.6 349.6,186.2C350.2,185.7 351.3,185.7 352.0,185.7C352.7,185.6 353.3,186.0 354.0,186.0C354.7,185.9 355.3,185.1 356.1,185.2C357.0,185.3 358.6,185.8 359.1,186.4C359.7,187.0 359.5,188.1 359.5,188.8C359.5,189.5 359.6,190.2 359.2,190.7Z"/><path d="M381.3,205.8C381.6,206.4 381.4,207.6 381.2,208.2C380.9,208.8 379.8,208.8 379.6,209.3C379.3,209.8 379.7,210.9 379.5,211.4C379.2,211.9 378.4,212.4 377.8,212.4C377.1,212.5 376.3,212.0 375.7,211.6C375.1,211.2 374.5,210.5 374.3,209.9C374.0,209.2 374.2,208.5 374.2,207.8C374.2,207.2 374.2,206.5 374.4,206.0C374.6,205.5 375.2,205.1 375.6,204.8C376.1,204.5 376.7,204.4 377.3,204.3C377.9,204.3 378.6,204.2 379.2,204.5C379.9,204.7 381.0,205.2 381.3,205.8Z"/><path d="M445.8,244.0C445.6,244.4 444.8,244.7 444.3,245.0C443.8,245.3 443.4,245.6 442.8,245.8C442.2,246.0 441.4,246.3 440.7,246.1C440.0,246.0 439.3,245.4 438.8,244.9C438.3,244.4 437.7,243.6 437.6,243.1C437.6,242.5 438.1,241.7 438.6,241.3C439.0,241.0 439.8,241.0 440.2,240.7C440.6,240.4 440.6,239.7 441.2,239.3C441.7,238.9 442.9,238.2 443.5,238.4C444.2,238.5 444.9,239.7 445.2,240.3C445.5,241.0 445.2,241.6 445.3,242.2C445.4,242.8 445.9,243.5 445.8,244.0Z"/><path d="M331.7,157.7C331.9,158.0 332.1,158.5 332.0,159.0C331.9,159.5 331.7,160.2 331.2,160.6C330.7,161.0 329.5,161.2 328.9,161.3C328.2,161.4 327.7,161.2 327.2,161.2C326.7,161.1 326.5,160.9 325.9,160.9C325.2,160.8 323.9,160.9 323.5,160.6C323.1,160.3 323.1,159.6 323.4,159.1C323.8,158.6 325.0,158.2 325.6,157.7C326.3,157.3 326.6,156.8 327.1,156.6C327.7,156.4 328.5,156.4 329.0,156.4C329.6,156.5 330.0,156.7 330.5,156.9C330.9,157.1 331.4,157.3 331.7,157.7Z"/><path d="M472.0,195.6C471.9,195.9 471.6,196.2 471.4,196.5C471.1,196.7 470.9,196.9 470.7,197.1C470.4,197.3 470.1,197.5 469.7,197.6C469.3,197.6 468.9,197.6 468.5,197.4C468.2,197.3 467.8,197.0 467.6,196.7C467.4,196.4 467.4,196.0 467.4,195.6C467.4,195.2 467.4,194.8 467.7,194.5C467.9,194.3 468.5,194.3 468.8,194.2C469.1,194.1 469.3,194.1 469.7,194.0C470.1,193.9 470.6,193.5 471.0,193.6C471.3,193.7 471.8,194.1 472.0,194.4C472.2,194.7 472.1,195.3 472.0,195.6Z"/><path d="M477.8,200.4C477.7,200.7 477.3,201.1 477.1,201.4C476.8,201.6 476.6,201.8 476.3,201.9C476.0,202.1 475.7,202.3 475.4,202.3C475.1,202.4 474.7,202.3 474.4,202.1C474.1,202.0 474.0,201.6 473.8,201.3C473.5,201.1 473.2,200.8 473.2,200.4C473.1,200.0 473.1,199.4 473.3,199.2C473.6,199.0 474.2,199.0 474.6,198.9C474.9,198.9 475.1,198.8 475.4,198.7C475.7,198.7 476.1,198.6 476.4,198.7C476.7,198.8 477.0,199.0 477.3,199.3C477.5,199.6 477.8,200.1 477.8,200.4Z"/><path d="M358.0,163.3C358.0,163.6 358.2,163.9 358.1,164.2C358.0,164.5 357.7,164.7 357.5,164.9C357.2,165.2 356.8,165.5 356.5,165.5C356.2,165.5 355.8,165.1 355.6,164.8C355.4,164.6 355.4,164.3 355.3,164.0C355.2,163.8 355.0,163.6 355.0,163.3C354.9,163.0 354.9,162.8 354.9,162.4C355.0,162.0 355.0,161.2 355.2,161.1C355.5,161.0 356.2,161.6 356.5,161.7C356.8,161.9 357.0,161.9 357.3,162.0C357.5,162.1 358.1,162.1 358.2,162.3C358.3,162.5 358.1,163.0 358.0,163.3Z"/><path d="M60.8,455.0C59.7,456.0 54.1,456.4 52.0,457.1C49.9,457.8 49.9,458.7 48.1,459.2C46.4,459.7 44.1,460.1 41.7,460.1C39.3,460.2 36.2,460.0 33.9,459.4C31.5,458.9 28.7,457.9 27.4,456.8C26.1,455.8 26.1,454.4 26.2,453.2C26.2,452.0 26.1,450.4 27.7,449.7C29.3,448.9 33.5,449.0 35.9,448.8C38.3,448.7 40.0,448.7 42.3,448.8C44.5,448.8 46.6,448.7 49.3,449.1C52.0,449.4 56.8,449.8 58.7,450.8C60.6,451.8 61.9,453.9 60.8,455.0Z"/><path d="M78.7,457.5C78.5,458.4 78.1,459.1 77.6,459.8C77.2,460.5 76.8,461.2 76.2,461.7C75.6,462.1 74.9,462.1 74.0,462.5C73.1,462.8 71.7,463.9 70.8,463.7C69.8,463.4 68.5,462.1 68.4,461.1C68.3,460.0 69.9,458.5 70.2,457.5C70.6,456.5 70.3,456.1 70.6,455.3C70.8,454.6 71.0,453.6 71.6,453.0C72.2,452.4 73.1,451.9 74.0,451.8C74.9,451.6 76.1,451.4 76.9,451.9C77.8,452.3 78.6,453.4 78.9,454.4C79.2,455.3 78.9,456.6 78.7,457.5Z"/><path d="M195.6,489.0C195.7,489.7 195.7,490.7 195.5,491.3C195.2,491.9 194.5,492.2 194.0,492.4C193.5,492.7 193.0,493.1 192.5,493.1C192.0,493.0 191.4,492.6 191.1,492.2C190.7,491.8 190.7,491.1 190.4,490.5C190.1,490.0 189.4,489.6 189.2,489.0C189.1,488.4 189.3,487.3 189.5,486.7C189.8,486.0 190.3,485.3 190.8,485.1C191.3,484.9 192.0,485.2 192.5,485.4C193.0,485.6 193.3,486.0 193.7,486.3C194.2,486.5 194.8,486.5 195.1,487.0C195.4,487.5 195.6,488.3 195.6,489.0Z"/><path d="M278.2,464.5C278.0,465.2 276.9,465.8 276.3,466.3C275.8,466.8 275.5,467.1 275.1,467.5C274.6,467.9 274.2,468.7 273.5,469.0C272.8,469.3 271.7,469.7 271.0,469.4C270.3,469.1 269.6,468.0 269.4,467.2C269.3,466.3 270.2,465.3 270.3,464.5C270.5,463.7 270.1,463.1 270.3,462.4C270.5,461.8 270.9,460.9 271.4,460.5C272.0,460.1 272.8,460.2 273.5,460.2C274.2,460.2 274.8,460.3 275.5,460.6C276.1,460.9 277.0,461.3 277.4,461.9C277.9,462.6 278.3,463.8 278.2,464.5Z"/><path d="M270.4,465.5C270.4,465.9 270.0,466.3 269.7,466.5C269.5,466.7 269.1,466.6 268.8,466.8C268.5,467.0 268.3,467.7 268.0,467.8C267.7,467.8 267.3,467.4 267.1,467.1C266.9,466.9 266.9,466.5 266.7,466.3C266.4,466.0 265.5,465.8 265.4,465.5C265.2,465.2 265.7,464.6 266.0,464.3C266.3,464.1 266.8,464.1 267.1,464.0C267.5,463.9 267.7,463.9 268.0,463.9C268.3,463.9 268.6,463.8 268.9,463.9C269.2,464.0 269.7,464.1 270.0,464.4C270.2,464.6 270.5,465.1 270.4,465.5Z"/><path d="M256.2,469.0C256.4,469.3 257.0,470.0 256.9,470.4C256.8,470.7 256.1,471.3 255.7,471.3C255.2,471.3 254.5,470.6 254.0,470.5C253.5,470.4 253.2,470.7 252.9,470.6C252.5,470.5 252.1,470.2 252.0,469.9C251.8,469.7 252.1,469.3 252.0,469.0C252.0,468.7 251.4,468.2 251.5,467.8C251.5,467.5 251.9,466.8 252.3,466.7C252.7,466.5 253.6,466.7 254.0,466.9C254.4,467.0 254.7,467.5 254.9,467.7C255.2,467.9 255.4,468.1 255.6,468.3C255.8,468.5 256.0,468.7 256.2,469.0Z"/><path d="M211.2,449.5C211.1,449.7 211.2,449.7 211.2,449.9C211.2,450.1 211.1,450.3 211.0,450.4C210.9,450.5 210.7,450.6 210.5,450.6C210.3,450.6 210.1,450.6 209.9,450.5C209.8,450.4 209.6,450.3 209.5,450.1C209.4,449.9 209.4,449.6 209.5,449.5C209.6,449.4 210.0,449.4 210.1,449.3C210.2,449.1 210.0,448.9 210.0,448.7C210.1,448.5 210.3,448.2 210.5,448.2C210.7,448.1 210.9,448.3 211.1,448.5C211.3,448.6 211.5,448.8 211.5,448.9C211.5,449.1 211.2,449.3 211.2,449.5Z"/></g>
<g fill="#000a78"><path d="M305.0,34.7C305.0,35.2 304.8,35.4 304.7,36.1C304.6,36.8 305.1,38.3 304.5,38.7C304.0,39.1 302.3,39.0 301.6,38.7C300.9,38.4 300.7,37.2 300.1,36.8C299.5,36.3 298.6,36.6 298.2,36.2C297.8,35.9 297.5,35.2 297.5,34.7C297.5,34.2 297.9,33.7 298.2,33.2C298.5,32.6 298.8,32.0 299.3,31.6C299.9,31.2 300.9,30.6 301.6,30.6C302.3,30.7 303.2,31.3 303.8,31.8C304.3,32.2 304.4,32.8 304.6,33.3C304.8,33.8 305.0,34.2 305.0,34.7Z"/><path d="M303.4,43.0C303.5,43.3 303.6,43.7 303.4,43.9C303.3,44.2 302.9,44.6 302.5,44.6C302.2,44.6 301.6,44.1 301.3,44.0C301.0,43.9 300.9,44.0 300.6,43.9C300.2,43.9 299.5,44.0 299.3,43.9C299.1,43.7 299.2,43.3 299.2,43.0C299.2,42.7 298.9,42.3 299.1,42.1C299.3,41.9 300.0,41.9 300.4,41.8C300.7,41.7 301.0,41.8 301.3,41.7C301.6,41.7 302.1,41.6 302.3,41.7C302.6,41.8 302.6,42.1 302.8,42.4C302.9,42.6 303.2,42.7 303.4,43.0Z"/><path d="M314.5,42.1C314.9,42.5 315.3,43.3 315.0,43.5C314.8,43.8 313.6,43.6 312.9,43.6C312.2,43.5 311.5,43.3 311.0,43.0C310.5,42.8 310.3,42.4 309.9,42.1C309.6,41.9 309.2,41.7 308.9,41.4C308.7,41.1 308.4,40.8 308.3,40.5C308.3,40.1 308.5,39.8 308.8,39.6C309.1,39.3 309.6,39.2 310.2,39.1C310.7,39.1 311.5,39.0 312.1,39.2C312.6,39.4 313.4,39.9 313.5,40.2C313.6,40.6 312.7,40.9 312.8,41.2C313.0,41.6 314.1,41.7 314.5,42.1Z"/><path d="M344.7,33.7C344.6,34.2 345.7,34.4 345.6,34.9C345.6,35.3 345.3,36.0 344.6,36.5C343.9,36.9 342.4,37.5 341.3,37.6C340.2,37.7 339.0,37.2 338.0,36.9C337.0,36.7 335.9,36.5 335.3,36.1C334.7,35.7 334.4,35.0 334.6,34.6C334.9,34.1 336.2,33.6 336.8,33.2C337.4,32.8 337.6,32.5 338.2,32.1C338.9,31.7 339.5,31.2 340.7,30.8C341.9,30.4 344.3,29.6 345.3,29.8C346.3,29.9 346.8,31.2 346.7,31.9C346.6,32.5 344.9,33.2 344.7,33.7Z"/><path d="M370.1,39.5C370.2,39.7 369.7,39.9 369.4,40.2C369.2,40.5 369.7,41.2 368.6,41.4C367.6,41.5 364.5,41.3 363.0,41.2C361.5,41.0 361.1,40.7 359.8,40.6C358.4,40.4 355.6,40.6 354.8,40.4C354.0,40.2 354.8,39.8 355.0,39.5C355.3,39.2 355.7,39.0 356.4,38.8C357.0,38.6 357.9,38.4 359.0,38.2C360.1,38.0 361.5,37.6 363.0,37.6C364.5,37.6 366.8,37.7 367.8,37.9C368.8,38.1 368.7,38.6 369.1,38.8C369.5,39.1 370.1,39.3 370.1,39.5Z"/><path d="M442.0,42.3C442.1,43.2 439.9,44.8 438.0,45.6C436.1,46.4 432.7,46.6 430.7,47.1C428.8,47.5 428.0,48.0 426.2,48.5C424.4,48.9 422.3,49.6 419.9,49.9C417.4,50.1 412.7,50.5 411.5,50.0C410.4,49.4 412.2,47.5 412.8,46.4C413.4,45.4 414.2,44.6 415.2,43.7C416.2,42.9 417.1,41.7 418.7,41.2C420.4,40.7 423.1,40.9 425.1,40.6C427.2,40.4 429.2,39.7 431.2,39.7C433.2,39.6 435.3,39.9 437.1,40.3C438.9,40.7 441.8,41.4 442.0,42.3Z"/><path d="M470.2,41.3C470.6,42.3 470.2,44.1 469.0,44.6C467.8,45.1 464.6,44.1 463.0,44.1C461.4,44.0 460.5,44.3 459.2,44.1C457.8,44.0 456.1,43.8 454.9,43.3C453.7,42.7 453.1,41.8 452.0,40.8C451.0,39.9 448.4,38.4 448.5,37.5C448.7,36.6 451.6,35.9 453.0,35.5C454.4,35.2 455.8,35.4 457.1,35.1C458.4,34.8 459.7,33.4 461.0,33.6C462.4,33.7 464.0,35.0 465.0,35.8C466.0,36.6 466.0,37.4 466.9,38.4C467.8,39.3 469.9,40.3 470.2,41.3Z"/><path d="M488.0,65.0C487.5,66.2 483.6,67.4 481.4,68.1C479.2,68.7 476.7,68.0 474.8,68.9C472.9,69.7 472.3,72.8 470.0,73.4C467.7,73.9 462.9,73.1 461.0,72.3C459.1,71.4 459.7,69.3 458.6,68.1C457.5,66.9 454.5,66.1 454.2,65.0C454.0,63.9 455.5,62.4 457.0,61.5C458.4,60.6 461.0,60.0 463.2,59.5C465.4,59.0 467.6,58.5 470.0,58.3C472.4,58.2 475.2,58.4 477.6,58.9C480.0,59.3 482.5,60.1 484.2,61.2C486.0,62.2 488.5,63.8 488.0,65.0Z"/><path d="M541.8,17.0C541.0,17.6 539.2,17.5 538.7,18.0C538.1,18.5 539.1,19.4 538.7,20.1C538.2,20.7 537.1,21.7 536.0,21.9C534.9,22.1 533.2,21.7 532.3,21.3C531.3,20.9 530.3,20.0 530.2,19.2C530.1,18.5 531.4,17.7 531.6,17.0C531.8,16.3 531.2,15.8 531.4,15.2C531.6,14.6 532.2,13.7 532.9,13.4C533.7,13.1 534.9,13.5 536.0,13.4C537.1,13.4 538.3,12.9 539.4,13.0C540.6,13.2 542.7,13.6 543.1,14.3C543.5,14.9 542.5,16.4 541.8,17.0Z"/><path d="M235.3,79.2C235.5,79.9 236.5,80.5 236.4,81.1C236.3,81.8 235.3,82.7 234.5,83.0C233.7,83.4 232.4,83.3 231.6,83.2C230.8,83.1 230.5,82.4 229.7,82.3C228.9,82.2 227.7,82.7 227.0,82.5C226.2,82.3 225.5,81.6 225.4,81.0C225.2,80.4 225.5,79.6 225.9,78.9C226.3,78.3 226.8,77.3 227.6,77.1C228.4,76.9 229.7,77.7 230.6,77.6C231.5,77.5 232.1,76.6 232.9,76.6C233.7,76.6 234.8,76.9 235.2,77.4C235.6,77.8 235.1,78.6 235.3,79.2Z"/><path d="M308.5,92.0C309.4,92.7 311.1,94.1 310.7,94.9C310.4,95.8 308.1,97.0 306.3,97.2C304.5,97.4 301.7,96.4 300.0,96.0C298.3,95.7 297.6,95.3 296.3,95.0C295.0,94.7 292.5,94.7 291.9,94.2C291.4,93.7 293.3,92.8 293.0,92.0C292.7,91.2 289.9,90.2 290.0,89.3C290.1,88.4 291.9,87.0 293.6,86.7C295.3,86.5 298.2,87.3 300.0,87.6C301.8,87.9 303.5,87.9 304.4,88.4C305.2,88.9 304.6,90.0 305.2,90.6C305.9,91.2 307.5,91.3 308.5,92.0Z"/><path d="M273.2,138.5C273.0,139.3 273.3,140.1 272.8,140.7C272.2,141.4 271.1,142.1 269.9,142.5C268.8,142.9 267.4,143.0 265.8,143.2C264.2,143.4 262.1,143.8 260.6,143.5C259.0,143.2 257.2,142.3 256.4,141.5C255.7,140.7 255.8,139.4 256.3,138.5C256.7,137.6 258.0,136.8 259.1,136.4C260.3,136.0 262.2,136.6 263.3,136.1C264.4,135.5 264.3,133.8 265.8,133.1C267.3,132.5 271.1,131.6 272.5,132.1C273.8,132.5 273.7,134.8 273.9,135.9C274.0,137.0 273.4,137.7 273.2,138.5Z"/><path d="M119.9,141.5C119.9,142.0 118.8,142.6 118.4,143.2C118.0,143.8 117.9,144.5 117.2,144.9C116.6,145.2 115.3,145.5 114.5,145.4C113.8,145.3 113.5,144.4 112.8,144.3C112.0,144.2 110.8,144.9 110.0,144.8C109.1,144.6 107.8,144.2 107.6,143.6C107.4,143.1 107.9,142.1 108.5,141.6C109.2,141.1 110.7,140.9 111.5,140.7C112.4,140.4 112.9,140.3 113.6,140.1C114.3,140.0 115.1,139.7 115.9,139.7C116.6,139.7 117.4,139.9 118.1,140.2C118.8,140.5 119.8,141.0 119.9,141.5Z"/><path d="M91.4,146.0C91.3,146.5 91.6,146.7 91.7,147.2C91.7,147.8 91.8,149.0 91.4,149.4C91.1,149.7 90.1,149.4 89.5,149.2C88.9,149.1 88.5,148.7 88.1,148.5C87.6,148.2 87.0,148.0 86.7,147.6C86.5,147.2 86.3,146.5 86.4,146.0C86.5,145.5 87.2,145.2 87.5,144.8C87.8,144.5 87.9,144.2 88.2,143.8C88.6,143.4 89.0,142.5 89.5,142.3C90.0,142.1 90.9,142.4 91.4,142.7C91.8,143.1 92.2,143.9 92.2,144.5C92.2,145.0 91.5,145.5 91.4,146.0Z"/><path d="M383.1,123.2C384.3,124.0 387.2,125.6 386.8,126.5C386.4,127.5 383.0,128.5 380.9,128.9C378.8,129.2 376.2,128.9 374.3,128.7C372.3,128.6 370.8,128.4 369.3,128.0C367.8,127.7 366.2,127.2 365.4,126.6C364.6,125.9 364.7,125.1 364.4,124.2C364.1,123.3 363.1,122.3 363.6,121.4C364.1,120.5 365.7,119.3 367.4,118.7C369.0,118.1 371.7,117.7 373.7,117.7C375.7,117.7 378.5,117.9 379.5,118.6C380.5,119.3 379.0,121.0 379.6,121.8C380.2,122.6 381.9,122.4 383.1,123.2Z"/><path d="M438.2,122.9C438.1,123.3 438.4,124.1 438.0,124.3C437.6,124.5 436.7,124.3 436.0,124.1C435.2,123.9 434.0,123.6 433.4,123.1C432.8,122.6 432.7,121.7 432.2,121.0C431.7,120.3 430.8,119.7 430.6,119.2C430.4,118.6 430.5,117.9 430.9,117.7C431.3,117.6 432.4,118.0 432.9,118.0C433.5,118.0 433.7,117.6 434.3,117.6C435.0,117.7 435.9,117.9 436.8,118.3C437.6,118.7 439.1,119.7 439.4,120.3C439.7,120.8 438.7,121.4 438.5,121.9C438.3,122.3 438.3,122.5 438.2,122.9Z"/><path d="M363.5,150.0C363.5,150.7 361.6,151.4 360.3,151.8C359.0,152.2 357.1,152.3 355.7,152.3C354.2,152.3 353.0,151.8 351.5,151.7C350.0,151.6 348.8,152.0 346.6,151.9C344.5,151.7 339.6,151.5 338.6,150.8C337.6,150.2 339.6,148.7 340.6,148.0C341.5,147.3 342.7,146.8 344.1,146.5C345.4,146.3 347.4,146.7 348.7,146.5C350.0,146.3 350.4,145.6 352.0,145.4C353.6,145.2 356.8,144.9 358.3,145.3C359.7,145.6 359.7,147.0 360.6,147.8C361.4,148.6 363.6,149.4 363.5,150.0Z"/><path d="M426.7,145.2C426.6,145.6 425.5,145.6 424.8,145.7C424.0,145.7 423.2,145.4 422.4,145.4C421.6,145.3 420.9,145.7 419.9,145.5C419.0,145.3 417.4,144.6 416.8,144.1C416.3,143.7 416.6,143.0 416.5,142.6C416.5,142.1 416.3,141.8 416.4,141.5C416.6,141.2 416.9,141.1 417.3,140.8C417.7,140.6 417.9,140.1 418.6,140.0C419.4,140.0 421.0,140.0 421.8,140.4C422.6,140.8 423.0,141.9 423.5,142.4C424.0,142.9 424.3,143.1 424.9,143.6C425.4,144.1 426.7,144.9 426.7,145.2Z"/><path d="M520.9,149.0C520.9,149.4 521.0,149.7 520.9,150.1C520.9,150.5 520.9,151.2 520.5,151.5C520.2,151.9 519.3,152.3 518.7,152.3C518.1,152.4 517.4,152.0 516.9,151.8C516.4,151.7 515.9,151.5 515.5,151.2C515.1,150.9 514.9,150.5 514.8,150.1C514.7,149.7 514.6,149.1 514.9,148.8C515.2,148.4 516.1,148.4 516.6,148.1C517.1,147.8 517.2,147.4 517.8,147.0C518.3,146.7 519.6,146.0 520.1,146.1C520.6,146.2 520.7,147.3 520.9,147.8C521.0,148.3 520.8,148.6 520.9,149.0Z"/><path d="M85.7,194.0C85.9,194.6 85.5,195.5 85.0,196.0C84.6,196.6 83.7,197.0 83.0,197.1C82.4,197.2 81.6,196.9 81.0,196.8C80.4,196.7 79.9,196.8 79.2,196.7C78.5,196.6 77.3,196.5 77.0,196.0C76.6,195.6 77.3,194.6 77.4,194.0C77.5,193.4 77.2,192.8 77.4,192.2C77.6,191.6 78.0,190.6 78.6,190.3C79.2,190.1 80.3,190.5 81.0,190.7C81.7,190.9 82.0,191.4 82.5,191.7C83.1,191.9 83.6,192.0 84.1,192.4C84.6,192.8 85.6,193.4 85.7,194.0Z"/><path d="M109.5,228.9C109.5,229.5 108.4,230.6 108.2,231.3C108.0,231.9 108.3,232.3 108.2,232.9C108.0,233.5 107.7,234.3 107.1,235.0C106.5,235.7 105.4,237.0 104.6,237.2C103.8,237.5 102.5,237.0 102.1,236.5C101.7,235.9 102.6,234.5 102.2,233.9C101.9,233.4 100.3,233.6 100.2,233.1C100.1,232.6 101.2,231.7 101.6,231.1C102.1,230.4 102.5,229.9 103.1,229.3C103.7,228.6 104.6,227.6 105.4,227.3C106.2,227.1 107.2,227.4 107.8,227.6C108.5,227.9 109.4,228.3 109.5,228.9Z"/><path d="M189.1,174.0C189.0,174.5 188.7,175.1 188.4,175.4C188.1,175.7 187.5,175.6 187.1,175.9C186.7,176.2 186.5,176.8 186.0,177.1C185.5,177.4 184.3,177.9 183.9,177.6C183.5,177.3 183.7,176.0 183.6,175.4C183.5,174.8 183.2,174.5 183.2,174.0C183.2,173.5 183.4,173.0 183.6,172.6C183.9,172.2 184.2,171.9 184.6,171.6C185.0,171.3 185.5,170.8 186.0,170.8C186.5,170.8 187.0,171.1 187.5,171.4C188.0,171.6 188.7,171.8 189.0,172.3C189.2,172.7 189.2,173.5 189.1,174.0Z"/><path d="M309.6,175.7C308.9,176.6 309.6,177.4 309.0,178.0C308.5,178.6 307.3,178.6 306.2,179.1C305.2,179.6 304.1,180.7 302.7,180.8C301.3,181.0 298.8,180.8 297.7,180.0C296.5,179.3 296.1,177.5 295.9,176.4C295.7,175.3 296.0,174.3 296.4,173.4C296.7,172.5 297.1,171.5 298.0,171.0C298.8,170.5 300.3,170.4 301.4,170.3C302.5,170.2 303.0,170.6 304.6,170.3C306.1,170.1 309.3,168.3 310.8,168.6C312.2,169.0 313.5,171.4 313.3,172.6C313.2,173.8 310.3,174.8 309.6,175.7Z"/><path d="M392.4,185.0C392.3,186.0 395.3,186.4 395.3,187.3C395.3,188.1 393.8,189.4 392.5,190.2C391.2,190.9 389.2,191.5 387.5,191.7C385.8,192.0 384.1,191.8 382.5,191.7C380.8,191.5 378.6,191.5 377.4,190.9C376.3,190.2 375.2,188.9 375.5,187.9C375.8,187.0 378.3,185.8 379.3,185.0C380.3,184.1 380.6,183.3 381.7,182.7C382.7,182.0 383.9,181.8 385.6,181.0C387.4,180.2 390.5,177.9 392.2,177.9C394.0,177.9 396.0,179.7 396.0,180.9C396.0,182.1 392.5,183.9 392.4,185.0Z"/><path d="M446.1,193.5C446.3,194.3 446.5,195.8 445.1,195.9C443.7,195.9 439.6,194.3 437.8,193.8C436.0,193.3 435.7,193.3 434.3,193.1C432.9,192.9 431.4,193.0 429.5,192.5C427.6,192.0 424.0,191.0 422.8,190.1C421.7,189.2 421.8,187.7 422.8,187.2C423.8,186.7 427.4,187.3 428.8,187.2C430.3,187.1 430.5,186.7 431.7,186.6C432.9,186.6 434.3,186.8 435.9,187.1C437.5,187.3 439.8,187.7 441.2,188.3C442.5,188.9 443.1,189.9 443.9,190.8C444.8,191.7 445.9,192.6 446.1,193.5Z"/><path d="M459.3,192.4C459.3,193.3 460.7,194.2 460.4,195.1C460.1,196.0 458.7,197.0 457.4,197.7C456.1,198.4 454.4,199.0 452.6,199.4C450.7,199.8 448.1,200.4 446.3,200.0C444.6,199.7 442.4,198.4 442.3,197.4C442.1,196.3 444.5,194.5 445.3,193.6C446.0,192.6 446.8,192.8 446.8,191.7C446.8,190.6 444.4,188.1 445.2,187.1C446.0,186.0 449.4,185.6 451.3,185.5C453.3,185.5 455.5,186.2 457.0,186.8C458.5,187.5 459.8,188.4 460.2,189.3C460.6,190.3 459.3,191.4 459.3,192.4Z"/><path d="M361.4,218.0C360.9,218.5 360.4,218.7 359.9,219.2C359.5,219.7 359.6,220.3 358.8,220.8C357.9,221.3 356.5,222.0 355.0,222.2C353.5,222.4 351.1,222.1 350.0,221.7C348.8,221.3 348.0,220.4 347.9,219.7C347.9,219.1 349.6,218.6 349.7,218.0C349.8,217.4 348.4,217.0 348.6,216.4C348.7,215.9 349.5,215.0 350.6,214.8C351.7,214.5 353.4,214.9 355.0,214.8C356.6,214.8 358.6,214.2 359.9,214.4C361.3,214.6 362.9,215.4 363.2,216.0C363.4,216.6 362.0,217.5 361.4,218.0Z"/><path d="M349.5,242.7C349.3,243.3 347.3,244.0 346.4,244.4C345.5,244.8 344.9,245.0 344.2,245.3C343.4,245.6 342.6,245.9 341.8,245.9C341.0,246.0 339.8,245.9 339.1,245.6C338.4,245.4 338.1,244.8 337.5,244.3C336.9,243.8 336.0,243.3 335.7,242.7C335.3,242.1 335.0,240.9 335.6,240.4C336.2,239.9 338.2,239.9 339.2,239.8C340.2,239.8 341.0,239.8 341.8,240.0C342.6,240.1 342.9,240.4 343.8,240.5C344.7,240.6 346.2,240.4 347.1,240.7C348.1,241.1 349.6,242.1 349.5,242.7Z"/><path d="M358.3,190.2C358.1,190.6 357.4,190.7 356.9,190.8C356.5,190.9 355.9,191.0 355.4,190.9C354.8,190.8 354.4,190.5 353.7,190.3C353.1,190.2 352.3,190.1 351.6,189.7C350.9,189.3 349.7,188.6 349.5,188.0C349.4,187.5 350.0,186.8 350.5,186.6C351.0,186.3 352.0,186.4 352.6,186.5C353.2,186.5 353.6,187.0 354.1,187.0C354.6,186.9 355.0,186.1 355.7,186.1C356.4,186.1 357.8,186.5 358.3,187.0C358.8,187.4 358.5,188.3 358.5,188.9C358.5,189.4 358.6,189.9 358.3,190.2Z"/><path d="M380.4,206.3C380.7,206.8 380.4,207.8 380.2,208.2C379.9,208.6 378.9,208.4 378.7,208.8C378.5,209.2 379.1,210.1 379.0,210.5C378.8,210.9 378.2,211.4 377.8,211.4C377.3,211.5 376.6,211.1 376.2,210.7C375.8,210.4 375.3,209.8 375.1,209.4C375.0,208.9 375.2,208.3 375.2,207.8C375.2,207.3 375.1,206.8 375.3,206.5C375.4,206.1 375.8,205.8 376.1,205.7C376.5,205.5 376.9,205.4 377.3,205.3C377.7,205.3 378.2,205.2 378.7,205.4C379.3,205.5 380.2,205.8 380.4,206.3Z"/><path d="M444.8,243.6C444.7,243.9 444.1,244.1 443.7,244.3C443.3,244.5 443.1,244.7 442.6,244.8C442.2,245.0 441.6,245.3 441.1,245.2C440.5,245.1 440.0,244.6 439.6,244.2C439.2,243.9 438.6,243.3 438.6,242.9C438.6,242.5 439.1,241.9 439.5,241.7C439.9,241.5 440.5,241.7 440.8,241.5C441.2,241.2 441.0,240.7 441.4,240.3C441.7,240.0 442.7,239.2 443.2,239.3C443.7,239.4 444.2,240.4 444.4,241.0C444.6,241.5 444.2,242.0 444.3,242.4C444.4,242.9 444.9,243.3 444.8,243.6Z"/><path d="M330.7,158.0C330.9,158.2 331.1,158.5 331.0,158.8C331.0,159.1 330.9,159.7 330.4,159.9C330.0,160.2 329.0,160.4 328.5,160.4C328.0,160.4 327.7,160.2 327.3,160.2C327.0,160.1 327.0,160.1 326.5,160.1C326.0,160.1 324.8,160.4 324.4,160.3C324.1,160.2 324.1,159.6 324.4,159.2C324.7,158.9 325.9,158.7 326.4,158.4C326.9,158.1 327.1,157.7 327.5,157.6C327.9,157.4 328.5,157.4 328.9,157.4C329.3,157.4 329.5,157.6 329.8,157.7C330.1,157.8 330.5,157.8 330.7,158.0Z"/><path d="M59.8,454.9C58.7,455.8 53.2,456.0 51.2,456.6C49.1,457.2 49.3,457.9 47.7,458.3C46.1,458.7 43.9,459.1 41.7,459.1C39.5,459.2 36.6,459.1 34.4,458.6C32.2,458.1 29.5,457.3 28.3,456.4C27.1,455.5 27.1,454.2 27.2,453.2C27.2,452.2 27.0,450.8 28.5,450.2C30.1,449.6 34.1,449.8 36.3,449.7C38.6,449.6 40.2,449.7 42.2,449.8C44.3,449.8 46.2,449.7 48.8,449.9C51.4,450.2 56.0,450.4 57.8,451.3C59.7,452.1 60.9,454.0 59.8,454.9Z"/><path d="M77.7,457.5C77.5,458.2 77.1,458.7 76.8,459.3C76.4,459.8 76.2,460.4 75.7,460.8C75.2,461.2 74.7,461.1 74.0,461.5C73.3,461.8 72.1,463.0 71.3,462.8C70.5,462.7 69.3,461.4 69.3,460.6C69.3,459.7 70.9,458.3 71.2,457.5C71.6,456.7 71.3,456.5 71.4,455.8C71.6,455.2 71.7,454.3 72.1,453.8C72.5,453.3 73.3,452.9 74.0,452.8C74.7,452.6 75.8,452.4 76.4,452.7C77.1,453.1 77.8,454.1 78.0,454.9C78.2,455.7 77.9,456.8 77.7,457.5Z"/><path d="M194.6,489.0C194.7,489.6 194.8,490.4 194.6,490.8C194.4,491.2 193.8,491.4 193.5,491.6C193.1,491.8 192.8,492.1 192.5,492.1C192.2,492.0 191.8,491.7 191.6,491.4C191.4,491.0 191.5,490.4 191.3,490.0C191.1,489.7 190.4,489.5 190.2,489.0C190.1,488.5 190.2,487.7 190.4,487.2C190.6,486.7 191.0,486.1 191.3,485.9C191.7,485.8 192.2,486.2 192.5,486.4C192.8,486.6 192.9,486.9 193.2,487.1C193.5,487.3 194.0,487.2 194.2,487.5C194.5,487.8 194.6,488.4 194.6,489.0Z"/><path d="M277.2,464.5C277.0,465.1 275.9,465.5 275.5,465.8C275.0,466.2 274.9,466.3 274.6,466.6C274.2,467.0 274.0,467.7 273.5,468.0C273.0,468.3 272.1,468.7 271.5,468.5C271.0,468.3 270.3,467.3 270.3,466.7C270.3,466.0 271.2,465.1 271.3,464.5C271.5,463.9 271.1,463.5 271.2,462.9C271.3,462.4 271.6,461.7 271.9,461.4C272.3,461.1 273.0,461.2 273.5,461.2C274.0,461.2 274.5,461.3 275.0,461.5C275.5,461.7 276.2,461.9 276.5,462.4C276.9,462.9 277.3,463.9 277.2,464.5Z"/></g>
</g></g>
<!-- highlighted defect -->
<path d="M174,457 C186,456 204,455.5 214,456.5 C219,458.5 222.5,462 222,465 C220,470 210,473.5 200.5,474.5 C191,474 183,471.5 174,470.5 Z" fill="#1a8cf0" filter="url(#bl)"/>
<path d="M176,458.5 C186,458 204,457.5 213,458.5 C217,460 220,462.5 219.5,464.5 C218,468 209,471 200.5,472 C192,471.5 184,469.5 176,468.5 Z" fill="#d6d6d6" stroke="#141414" stroke-width="0.9"/>
<line x1="189.5" y1="448" x2="194.5" y2="460" stroke="#111" stroke-width="0.8"/>
<circle cx="194.5" cy="460.5" r="2.6" fill="#0a1a88" stroke="#111" stroke-width="0.5"/>
<rect x="162.5" y="433" width="40.5" height="16" rx="3" fill="#0a0a80"/>
<text x="183" y="444.3" text-anchor="middle" font-family="Liberation Sans" font-size="8.8" letter-spacing="0.55" fill="#fff">-0.0018</text>
<circle cx="164" cy="460.5" r="15.5" fill="#fff" stroke="#999" stroke-width="0.6"/>
<circle cx="164" cy="460.5" r="8.3" fill="none" stroke="#333" stroke-width="1.4"/>
<polyline points="159.8,460.6 162.8,463.6 168.2,457.8" fill="none" stroke="#333" stroke-width="1.8"/>
</svg>

<!-- colour bar -->
<div class="a" style="left:633px;top:0;width:16.5px;height:626px;box-sizing:border-box;border-left:1px solid rgba(90,110,90,0.55);border-right:1px solid rgba(90,110,90,0.55);background:linear-gradient(to bottom,#00f020 0px,#00f050 60px,#00f8c8 200px,#00e0f0 300px,#0090ff 420px,#0050f0 560px,#0030ff 626px);"></div>
<div class="a" style="left:633px;top:46.5px;width:16.5px;height:1px;background:rgba(0,70,60,0.6);"></div>
<div class="a" style="left:633px;top:120.5px;width:16.5px;height:1px;background:rgba(0,70,60,0.6);"></div>
<div class="a" style="left:633px;top:194.5px;width:16.5px;height:1px;background:rgba(0,70,60,0.6);"></div>
<div class="a" style="left:633px;top:564.5px;width:16.5px;height:1px;background:rgba(0,70,60,0.6);"></div>
<div class="a t" style="left:652.5px;top:43px;font-size:9.2px;letter-spacing:0.6px;color:#4a4a4a;">-0.0000</div>
<div class="a t" style="left:652.5px;top:117px;font-size:9.2px;letter-spacing:0.6px;color:#4a4a4a;">-0.0001</div>
<div class="a t" style="left:652.5px;top:191px;font-size:9.2px;letter-spacing:0.6px;color:#4a4a4a;">-0.0001</div>
<div class="a t" style="left:652.5px;top:561px;font-size:9.2px;letter-spacing:0.6px;color:#4a4a4a;">-0.0002</div>
<div class="a" style="left:689px;top:0;width:2px;height:626px;background:#64a0e6;"></div>
<div class="a" style="left:703px;top:0;width:3px;height:626px;background:#eef1f6;"></div>
<div class="a" style="left:714px;top:-2px;width:290px;height:599px;box-sizing:border-box;border-left:1px solid #d3dbe5;border-bottom:1px solid #d3dbe5;"></div>

<!-- right panel -->
<svg class="a" style="left:718px;top:29px" width="12" height="8"><polyline points="2.5,2 5.5,5 8.5,2" fill="none" stroke="#666" stroke-width="1.1"/></svg>
<div class="a t" style="left:734px;top:29px;font-weight:bold;font-size:9.4px;color:#454545;">Surface defects</div>
<div class="a t" style="left:750px;top:49px;">Number of defects:</div>
<div class="a t" style="left:750px;top:64px;">Filters:</div>
<div class="a t" style="left:750px;top:93.5px;">Tolerance:</div>
<div class="a t" style="left:750px;top:113px;">Max. distance to</div>
<div class="a t" style="left:827.5px;top:112.5px;font-size:9.8px;color:#4c4c4c;">surface defect map:</div>
<div class="a t" style="left:919px;top:49px;color:#4c4c4c;">1</div>
<div class="a t" style="left:919px;top:64px;font-size:9.65px;color:#4c4c4c;">Length &gt; 12 mm</div>
<div class="a t" style="left:919px;top:77px;font-size:9.8px;color:#4c4c4c;">Width &lt; 5 mm</div>
<div class="a t" style="left:919px;top:93.5px;color:#4c4c4c;">0.0005 mm</div>
<div class="a t" style="left:919px;top:113px;color:#4c4c4c;">2.0000 mm</div>

<svg class="a" style="left:0;top:0" width="999" height="626" viewBox="0 0 999 626">
<!-- toolbar -->
<rect x="774.5" y="9.5" width="46" height="19.5" fill="#fff" stroke="#c8d4e2" stroke-width="1"/>
<g transform="translate(782.2,18.4)">
<circle r="5" fill="#e8f0fb" stroke="#3f78d8" stroke-width="1.3"/>
<path d="M-3.2,-0.8 C-1.5,-2.5 0,0.8 3.2,-0.5" fill="none" stroke="#3f78d8" stroke-width="1.2"/>
<line x1="3.6" y1="3.6" x2="6" y2="6" stroke="#3f78d8" stroke-width="1.4"/>
</g>
<path d="M807.5,15.8 L813.5,21.8 M813.5,15.8 L807.5,21.8" stroke="#222" stroke-width="1.7"/>
<!-- wheel -->
<circle cx="797" cy="81.3" r="47.3" fill="#fff" stroke="#c3d0dd" stroke-width="1.1"/>
<g stroke="#c6d2de" stroke-width="1.2">
<line x1="797.00" y1="34.00" x2="797.00" y2="64.80"/>
<line x1="797.00" y1="128.60" x2="797.00" y2="97.80"/>
<line x1="756.04" y1="57.65" x2="782.71" y2="73.05"/>
<line x1="837.96" y1="57.65" x2="811.29" y2="73.05"/>
<line x1="756.04" y1="104.95" x2="782.71" y2="89.55"/>
<line x1="837.96" y1="104.95" x2="811.29" y2="89.55"/>
</g>
<circle cx="797" cy="81.3" r="16.5" fill="#fff" stroke="#c3d0dd" stroke-width="1.3"/>
<!-- center magnifier -->
<circle cx="795.2" cy="79.5" r="5.6" fill="none" stroke="#222" stroke-width="2"/>
<line x1="799.3" y1="83.6" x2="805.8" y2="90" stroke="#222" stroke-width="2.4" stroke-linecap="round"/>
<!-- T icon -->
<g stroke="#8a8a8a" fill="none" stroke-width="1.3">
<path d="M807,51.6 V49.3 H819 V51.6"/><line x1="813" y1="49.3" x2="813" y2="57.5"/><line x1="810.5" y1="57.5" x2="815.5" y2="57.5"/>
<line x1="806.5" y1="60.6" x2="819.5" y2="60.6"/>
</g>
<!-- frame icon -->
<rect x="822.9" y="75.4" width="12" height="11.6" rx="1.8" fill="#fff" stroke="#3a3a3a" stroke-width="1.3"/>
<path d="M823.6,75.6 H833.2 Q834.8,75.6 834.8,77.2 V86.4" fill="none" stroke="#222" stroke-width="2.2"/>
<g fill="#333"><rect x="824.6" y="77.6" width="1.1" height="1.1"/><rect x="831.4" y="77.6" width="1.1" height="1.1"/><rect x="824.6" y="84.1" width="1.1" height="1.1"/><rect x="831.4" y="84.1" width="1.1" height="1.1"/></g>
<!-- person icon -->
<g fill="#8a8a8a">
<circle cx="776.9" cy="51.2" r="2.7" fill="none" stroke="#8a8a8a" stroke-width="1.2"/>
<line x1="778.7" y1="53" x2="781.2" y2="55.6" stroke="#8a8a8a" stroke-width="1.2"/>
<circle cx="783.8" cy="50.6" r="2.1"/>
<path d="M780.2,54.4 H786.2 Q788.8,54.4 788.8,57 V61.2 H786.6 V57.6 H785.6 V61.2 H782.6 V57.2 Z"/>
</g>
<!-- globe magnifier -->
<g>
<circle cx="765.4" cy="80.6" r="7.6" fill="#fff" stroke="#9a9a9a" stroke-width="1.5"/>
<path d="M760.9,78 C761.5,76.5 762.5,75.8 764,75.6 C766.5,75.4 769,75.8 770.2,76.8 C771,77.8 770.8,79.4 769.5,80.2 C768.5,80.8 767.6,81.3 767.6,82.5 C767.8,83.6 768.3,84.6 767.8,85.6 C767,86.6 765.5,86.8 764.5,86.5 C763,86 761.8,85.2 761,84 C760.6,83 761.5,82.2 762.2,81.5 C762.6,80.6 761,79.5 760.9,78 Z" fill="#9a9a9a"/>
<line x1="772.3" y1="88.2" x2="775.2" y2="90.8" stroke="#9a9a9a" stroke-width="1.6"/>
</g>
<!-- arch -->
<path d="M772.5,110.5 C772,106 775,102.5 779.5,102.3 C785,102.2 789,108 790.5,114.2 C787,110 783.5,107 779.5,107 C776.5,107 774.5,108.5 772.5,110.5 Z" fill="#8f8f8f"/>
<!-- crosshair -->
<g stroke="#8a8a8a" stroke-width="1.3" fill="none">
<circle cx="813" cy="108" r="5.3"/>
<line x1="805" y1="108" x2="821" y2="108"/><line x1="813" y1="100" x2="813" y2="116"/>
</g>
<path d="M813,108 H818.3 A5.3,5.3 0 0 1 813,113.3 Z" fill="#8a8a8a"/>
</svg>


<!-- dialog -->
<div class="a" style="left:501px;top:212px;width:459px;height:331px;box-sizing:border-box;background:#fff;border:1px solid #c4c4c4;border-radius:6px;box-shadow:0 12px 36px rgba(0,0,0,0.36),0 3px 10px rgba(0,0,0,0.14);"></div>

<div class="a t" style="left:525.5px;top:218.5px;color:#5a5a5a;font-size:10px;letter-spacing:-0.4px;">Create Surface Defect Element</div>
<div class="a" style="left:903.5px;top:217.5px;font-size:11px;font-weight:bold;color:#4a4a4a;line-height:1;">?</div>

<div class="a t" style="left:509px;top:252px;font-size:9.7px;">Name</div>
<div class="fld" style="left:546px;top:246px;width:402px;height:19.5px;"></div>
<div class="a t" style="left:550px;top:252.5px;font-style:italic;font-size:9px;">Surface defects 0.0005 mm</div>
<div class="dd" style="left:938px;top:254px;"></div>

<div class="a t" style="left:509px;top:286px;font-size:9.3px;">Element</div>
<div class="fld" style="left:581px;top:280px;width:367px;height:19px;"></div>
<div class="a t" style="left:601px;top:286px;font-size:9.15px;">Surface defects 1.sdv</div>
<div class="dd" style="left:938px;top:288px;"></div>

<div class="a t" style="left:509px;top:319.5px;font-size:9.25px;">Tolerance</div>
<div class="fld" style="left:560px;top:313.8px;width:388px;height:19px;border-color:#6e6e6e;background:#eceff3;"></div>
<div class="a t" style="left:564.5px;top:320px;font-size:9px;">0.000500 mm</div>
<div class="a" style="left:620px;top:317.5px;width:1px;height:12px;background:#222;"></div>
<div class="dd" style="left:938px;top:325px;"></div>
<div class="dd" style="left:938px;top:318px;transform:rotate(180deg);"></div>

<div class="a t" style="left:509px;top:353px;font-size:9.45px;">Defect filters</div>
<div class="a" style="left:509px;top:363px;width:331px;height:1px;background:#dfe5ec;"></div>
<div class="btn" style="left:852px;top:348px;width:96px;height:18.5px;"></div>

<div class="fld" style="left:512px;top:381.5px;width:109px;height:19px;"></div>
<div class="a t" style="left:514.5px;top:387px;font-size:9.6px;">Length</div>
<div class="dd" style="left:611px;top:389px;"></div>
<div class="fld" style="left:636px;top:381.5px;width:109px;height:19px;"></div>
<div class="a t" style="left:638.5px;top:387px;font-size:9.4px;">≥ Larger than or eq...</div>
<div class="dd" style="left:735px;top:389px;"></div>
<div class="fld" style="left:780.5px;top:381.5px;width:109.5px;height:19px;"></div>
<div class="a t" style="left:784.5px;top:387px;font-size:9.2px;">12.0000 mm</div>
<div class="dd" style="left:879px;top:393px;"></div>
<div class="dd" style="left:879px;top:386px;transform:rotate(180deg);"></div>
<div class="btn" style="left:905.5px;top:381.5px;width:42.5px;height:19px;"></div>

<div class="fld" style="left:512px;top:415.5px;width:109px;height:18.5px;"></div>
<div class="a t" style="left:514.5px;top:421px;font-size:9.9px;">Width</div>
<div class="dd" style="left:611px;top:423px;"></div>
<div class="fld" style="left:636px;top:415.5px;width:109px;height:18.5px;"></div>
<div class="a t" style="left:638.5px;top:421px;font-size:9.4px;">≤ Smaller than or e...</div>
<div class="dd" style="left:735px;top:423px;"></div>
<div class="fld" style="left:780.5px;top:415.5px;width:109.5px;height:18.5px;"></div>
<div class="a t" style="left:784.5px;top:421px;font-size:9.1px;">5.0000 mm</div>
<div class="dd" style="left:879px;top:427px;"></div>
<div class="dd" style="left:879px;top:420px;transform:rotate(180deg);"></div>
<div class="btn" style="left:905.5px;top:415.5px;width:42.5px;height:18.5px;"></div>

<div class="btn" style="left:512px;top:449px;width:47px;height:19px;"></div>
<div class="a t" style="left:526.5px;top:455px;font-size:9.2px;">AND</div>
<div class="btn" style="left:574px;top:449px;width:40px;height:19px;"></div>
<div class="a t" style="left:587.5px;top:455px;font-size:8.8px;">OR</div>

<div class="a t" style="left:612.5px;top:489px;font-style:italic;font-size:9.45px;">The result element will be assigned to part "<b>Dashboard</b>".</div>

<div class="a" style="left:822px;top:511.5px;width:56px;height:18.5px;background:#0a74ef;border-radius:3px;"></div>
<div class="a t" style="left:850px;top:517px;color:#fff;font-size:8.6px;">OK</div>
<div class="btn" style="left:892.5px;top:511.5px;width:56px;height:18.5px;"></div>
<div class="a t" style="left:906px;top:517px;font-size:9.2px;">Cancel</div>
<svg class="a" style="left:895px;top:351px" width="10" height="12" viewBox="0 0 10 12"><rect x="3.5" y="0.6" width="3" height="1.4" fill="#333"/><rect x="1.2" y="1.8" width="7.6" height="1.5" fill="#333"/><path d="M2,3.8 H8 L7.6,11 H2.4Z" fill="#333"/><g stroke="#f3f5f8" stroke-width="0.6"><line x1="4" y1="5" x2="4" y2="10"/><line x1="6" y1="5" x2="6" y2="10"/></g></svg><svg class="a" style="left:921.75px;top:385px" width="10" height="12" viewBox="0 0 10 12"><rect x="3.5" y="0.6" width="3" height="1.4" fill="#333"/><rect x="1.2" y="1.8" width="7.6" height="1.5" fill="#333"/><path d="M2,3.8 H8 L7.6,11 H2.4Z" fill="#333"/><g stroke="#f3f5f8" stroke-width="0.6"><line x1="4" y1="5" x2="4" y2="10"/><line x1="6" y1="5" x2="6" y2="10"/></g></svg><svg class="a" style="left:921.75px;top:418.75px" width="10" height="12" viewBox="0 0 10 12"><rect x="3.5" y="0.6" width="3" height="1.4" fill="#333"/><rect x="1.2" y="1.8" width="7.6" height="1.5" fill="#333"/><path d="M2,3.8 H8 L7.6,11 H2.4Z" fill="#333"/><g stroke="#f3f5f8" stroke-width="0.6"><line x1="4" y1="5" x2="4" y2="10"/><line x1="6" y1="5" x2="6" y2="10"/></g></svg>
<svg class="a" style="left:0;top:0" width="999" height="626" viewBox="0 0 999 626">
<!-- title icon -->
<g transform="translate(513,223.5)">
<circle r="4.8" fill="#eef3fb" stroke="#4a7fd4" stroke-width="1.2"/>
<path d="M-3,-0.6 C-1.4,-2.4 0.2,0.8 3,-0.6" fill="none" stroke="#4a7fd4" stroke-width="1.2"/>
<line x1="3.4" y1="3.4" x2="5.6" y2="5.6" stroke="#4a7fd4" stroke-width="1.3"/>
</g>
<!-- pin -->
<g transform="translate(874,223.5) rotate(45)" fill="#222">
<rect x="-2.6" y="-5.5" width="5.2" height="6" rx="0.6"/>
<rect x="-4.2" y="0" width="8.4" height="1.6"/>
<rect x="-0.6" y="1.4" width="1.2" height="4.8"/>
</g>
<!-- close -->
<path d="M938.5,219.8 L945.5,226.8 M945.5,219.8 L938.5,226.8" stroke="#2a2a2a" stroke-width="1.55"/>
<!-- element icon -->
<g transform="translate(591.5,290)">
<g fill="#4ea04a"><circle cx="-2.15" cy="-3.72" r="0.9"/><circle cx="0.75" cy="-4.23" r="0.9"/><circle cx="3.29" cy="-2.76" r="0.9"/><circle cx="3.29" cy="2.76" r="0.9"/><circle cx="0.75" cy="4.23" r="0.9"/><circle cx="-2.15" cy="3.72" r="0.9"/><circle cx="-4.04" cy="1.47" r="0.9"/><circle cx="-4.04" cy="-1.47" r="0.9"/></g>
<path d="M-4.2,-0.8 H-1 V0.9 H4.2" fill="none" stroke="#2a5cc0" stroke-width="1.8"/>
</g>
<!-- blue play triangle -->
<path d="M759,420.8 L766.2,424.5 L759,428.2 Z" fill="#1a6fe0"/>
<!-- ok check -->
<circle cx="842" cy="520.8" r="4.6" fill="none" stroke="#fff" stroke-width="1.3"/>
<polyline points="839.8,520.9 841.5,522.6 844.4,519.2" fill="none" stroke="#fff" stroke-width="1.3"/>
</svg>

</body></html>
